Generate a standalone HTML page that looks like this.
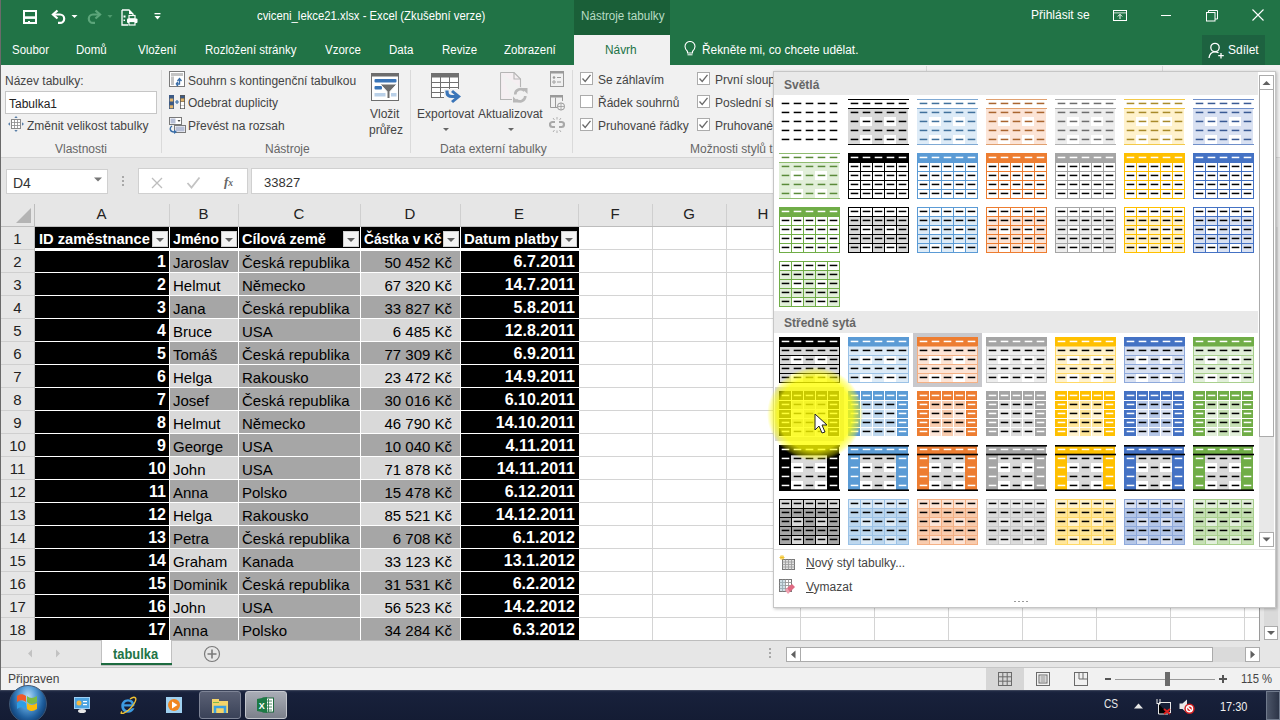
<!DOCTYPE html><html><head><meta charset="utf-8"><style>
*{margin:0;padding:0;box-sizing:border-box}
html,body{width:1280px;height:720px;overflow:hidden;background:#fff;font-family:"Liberation Sans",sans-serif}
.t{position:absolute;white-space:nowrap;line-height:1}
.a{position:absolute}
</style></head><body>

<div style="position:absolute;left:0px;top:0px;width:1280px;height:65px;background:#217346"></div>
<div style="position:absolute;left:574px;top:0px;width:96px;height:35px;background:#1a5f38"></div>
<div class="t " style="left:581px;top:10px;font-size:12px;color:#b8dcc4;transform:scaleX(0.97);transform-origin:0 0">Nástroje tabulky</div>
<div class="t " style="left:257px;top:10px;font-size:12.5px;color:#fff;transform:scaleX(0.905);transform-origin:0 0">cviceni_lekce21.xlsx - Excel (Zkušební verze)</div>
<div class="t " style="left:1031px;top:9px;font-size:12px;color:#fff">Přihlásit se</div>
<div class="t " style="left:12px;top:44px;font-size:12.5px;color:#fff;transform:scaleX(0.92);transform-origin:0 0">Soubor</div>
<div class="t " style="left:76px;top:44px;font-size:12.5px;color:#fff;transform:scaleX(0.92);transform-origin:0 0">Domů</div>
<div class="t " style="left:138px;top:44px;font-size:12.5px;color:#fff;transform:scaleX(0.92);transform-origin:0 0">Vložení</div>
<div class="t " style="left:205px;top:44px;font-size:12.5px;color:#fff;transform:scaleX(0.92);transform-origin:0 0">Rozložení stránky</div>
<div class="t " style="left:325px;top:44px;font-size:12.5px;color:#fff;transform:scaleX(0.92);transform-origin:0 0">Vzorce</div>
<div class="t " style="left:389px;top:44px;font-size:12.5px;color:#fff;transform:scaleX(0.92);transform-origin:0 0">Data</div>
<div class="t " style="left:442px;top:44px;font-size:12.5px;color:#fff;transform:scaleX(0.92);transform-origin:0 0">Revize</div>
<div class="t " style="left:504px;top:44px;font-size:12.5px;color:#fff;transform:scaleX(0.92);transform-origin:0 0">Zobrazení</div>
<div style="position:absolute;left:574px;top:35px;width:96px;height:30px;background:#f1f1f1"></div>
<div class="t " style="left:605px;top:44px;font-size:12.5px;color:#217346;transform:scaleX(0.95);transform-origin:0 0">Návrh</div>
<div class="t " style="left:702px;top:44px;font-size:12.5px;color:#fff;transform:scaleX(0.95);transform-origin:0 0">Řekněte mi, co chcete udělat.</div>
<div style="position:absolute;left:1202px;top:35px;width:63px;height:30px;background:#1d6240"></div>
<div class="t " style="left:1228px;top:44px;font-size:12px;color:#fff">Sdílet</div>
<div style="position:absolute;left:0px;top:65px;width:1280px;height:92px;background:#f1f1f1"></div>
<div style="position:absolute;left:0px;top:157px;width:1280px;height:1px;background:#d5d5d5"></div>
<div style="position:absolute;left:926px;top:66px;width:1px;height:6px;background:#d8d8d8"></div>
<div style="position:absolute;left:1162px;top:66px;width:1px;height:6px;background:#d8d8d8"></div>
<div class="t " style="left:5px;top:75px;font-size:12px;color:#444">Název tabulky:</div>
<div style="position:absolute;left:5px;top:91px;width:152px;height:23px;background:#fff;border:1px solid #c6c6c6"></div>
<div class="t " style="left:9px;top:98px;font-size:12px;color:#222">Tabulka1</div>
<div class="t " style="left:27px;top:120px;font-size:12px;color:#444">Změnit velikost tabulky</div>
<div class="t " style="left:55px;top:143px;font-size:12px;color:#666">Vlastnosti</div>
<div style="position:absolute;left:161px;top:70px;width:1px;height:83px;background:#dadada"></div>
<div class="t " style="left:188px;top:75px;font-size:12px;color:#444">Souhrn s kontingenční tabulkou</div>
<div class="t " style="left:188px;top:97px;font-size:12px;color:#444">Odebrat duplicity</div>
<div class="t " style="left:188px;top:120px;font-size:12px;color:#444">Převést na rozsah</div>
<div class="t " style="left:370px;top:108px;font-size:12px;color:#444">Vložit</div>
<div class="t " style="left:369px;top:124px;font-size:12px;color:#444">průřez</div>
<div class="t " style="left:265px;top:143px;font-size:12px;color:#666">Nástroje</div>
<div style="position:absolute;left:410px;top:70px;width:1px;height:83px;background:#dadada"></div>
<div class="t " style="left:417px;top:108px;font-size:12px;color:#444">Exportovat</div>
<div class="t " style="left:478px;top:108px;font-size:12px;color:#444">Aktualizovat</div>
<div class="t " style="left:440px;top:143px;font-size:12px;color:#666">Data externí tabulky</div>
<div style="position:absolute;left:572px;top:70px;width:1px;height:83px;background:#dadada"></div>
<div class="t " style="left:598px;top:74px;font-size:12px;color:#444">Se záhlavím</div>
<div class="t " style="left:598px;top:97px;font-size:12px;color:#444">Řádek souhrnů</div>
<div class="t " style="left:598px;top:120px;font-size:12px;color:#444">Pruhované řádky</div>
<div class="t " style="left:715px;top:74px;font-size:12px;color:#444">První sloupec</div>
<div class="t " style="left:715px;top:97px;font-size:12px;color:#444">Poslední sloupec</div>
<div class="t " style="left:715px;top:120px;font-size:12px;color:#444">Pruhované sloupce</div>
<div class="t " style="left:690px;top:143px;font-size:12px;color:#666">Možnosti stylů tabulky</div>
<div style="position:absolute;left:580px;top:72px;width:13px;height:13px;background:#fff;border:1px solid #ababab"></div>
<div style="position:absolute;left:697px;top:72px;width:13px;height:13px;background:#fff;border:1px solid #ababab"></div>
<div style="position:absolute;left:580px;top:95px;width:13px;height:13px;background:#fff;border:1px solid #ababab"></div>
<div style="position:absolute;left:697px;top:95px;width:13px;height:13px;background:#fff;border:1px solid #ababab"></div>
<div style="position:absolute;left:580px;top:118px;width:13px;height:13px;background:#fff;border:1px solid #ababab"></div>
<div style="position:absolute;left:697px;top:118px;width:13px;height:13px;background:#fff;border:1px solid #ababab"></div>
<div style="position:absolute;left:1px;top:158px;width:1279px;height:46px;background:#e6e6e6"></div>
<div style="position:absolute;left:6px;top:169px;width:102px;height:25px;background:#fff;border:1px solid #d0d0d0"></div>
<div class="t " style="left:13px;top:176px;font-size:14px;color:#333">D4</div>
<div style="position:absolute;left:138px;top:168px;width:110px;height:26px;background:#fff;border:1px solid #d0d0d0"></div>
<div style="position:absolute;left:251px;top:168px;width:1029px;height:26px;background:#fff;border:1px solid #d0d0d0"></div>
<div class="t " style="left:264px;top:176px;font-size:13px;color:#333">33827</div>
<div style="position:absolute;left:1px;top:204px;width:1263px;height:23px;background:#e6e6e6"></div>
<div style="position:absolute;left:1px;top:204px;width:34px;height:437px;background:#e6e6e6"></div>
<div style="position:absolute;left:35px;top:227px;width:1229px;height:414px;background:#fff"></div>
<div style="position:absolute;left:169px;top:227px;width:1px;height:414px;background:#d4d4d4"></div>
<div style="position:absolute;left:238px;top:227px;width:1px;height:414px;background:#d4d4d4"></div>
<div style="position:absolute;left:360px;top:227px;width:1px;height:414px;background:#d4d4d4"></div>
<div style="position:absolute;left:460px;top:227px;width:1px;height:414px;background:#d4d4d4"></div>
<div style="position:absolute;left:578px;top:227px;width:1px;height:414px;background:#d4d4d4"></div>
<div style="position:absolute;left:652px;top:227px;width:1px;height:414px;background:#d4d4d4"></div>
<div style="position:absolute;left:726px;top:227px;width:1px;height:414px;background:#d4d4d4"></div>
<div style="position:absolute;left:800px;top:227px;width:1px;height:414px;background:#d4d4d4"></div>
<div style="position:absolute;left:874px;top:227px;width:1px;height:414px;background:#d4d4d4"></div>
<div style="position:absolute;left:948px;top:227px;width:1px;height:414px;background:#d4d4d4"></div>
<div style="position:absolute;left:1022px;top:227px;width:1px;height:414px;background:#d4d4d4"></div>
<div style="position:absolute;left:1096px;top:227px;width:1px;height:414px;background:#d4d4d4"></div>
<div style="position:absolute;left:1170px;top:227px;width:1px;height:414px;background:#d4d4d4"></div>
<div style="position:absolute;left:1244px;top:227px;width:1px;height:414px;background:#d4d4d4"></div>
<div style="position:absolute;left:35px;top:249px;width:1229px;height:1px;background:#d4d4d4"></div>
<div style="position:absolute;left:35px;top:272px;width:1229px;height:1px;background:#d4d4d4"></div>
<div style="position:absolute;left:35px;top:295px;width:1229px;height:1px;background:#d4d4d4"></div>
<div style="position:absolute;left:35px;top:318px;width:1229px;height:1px;background:#d4d4d4"></div>
<div style="position:absolute;left:35px;top:341px;width:1229px;height:1px;background:#d4d4d4"></div>
<div style="position:absolute;left:35px;top:364px;width:1229px;height:1px;background:#d4d4d4"></div>
<div style="position:absolute;left:35px;top:387px;width:1229px;height:1px;background:#d4d4d4"></div>
<div style="position:absolute;left:35px;top:410px;width:1229px;height:1px;background:#d4d4d4"></div>
<div style="position:absolute;left:35px;top:433px;width:1229px;height:1px;background:#d4d4d4"></div>
<div style="position:absolute;left:35px;top:456px;width:1229px;height:1px;background:#d4d4d4"></div>
<div style="position:absolute;left:35px;top:479px;width:1229px;height:1px;background:#d4d4d4"></div>
<div style="position:absolute;left:35px;top:502px;width:1229px;height:1px;background:#d4d4d4"></div>
<div style="position:absolute;left:35px;top:525px;width:1229px;height:1px;background:#d4d4d4"></div>
<div style="position:absolute;left:35px;top:548px;width:1229px;height:1px;background:#d4d4d4"></div>
<div style="position:absolute;left:35px;top:571px;width:1229px;height:1px;background:#d4d4d4"></div>
<div style="position:absolute;left:35px;top:594px;width:1229px;height:1px;background:#d4d4d4"></div>
<div style="position:absolute;left:35px;top:617px;width:1229px;height:1px;background:#d4d4d4"></div>
<div style="position:absolute;left:35px;top:640px;width:1229px;height:1px;background:#d4d4d4"></div>
<div style="position:absolute;left:34px;top:204px;width:1px;height:437px;background:#bdbdbd"></div>
<div style="position:absolute;left:1px;top:226px;width:1263px;height:1px;background:#bdbdbd"></div>
<div style="position:absolute;left:169px;top:204px;width:1px;height:22px;background:#cfcfcf"></div>
<div style="position:absolute;left:238px;top:204px;width:1px;height:22px;background:#cfcfcf"></div>
<div style="position:absolute;left:360px;top:204px;width:1px;height:22px;background:#cfcfcf"></div>
<div style="position:absolute;left:460px;top:204px;width:1px;height:22px;background:#cfcfcf"></div>
<div style="position:absolute;left:578px;top:204px;width:1px;height:22px;background:#cfcfcf"></div>
<div style="position:absolute;left:652px;top:204px;width:1px;height:22px;background:#cfcfcf"></div>
<div style="position:absolute;left:726px;top:204px;width:1px;height:22px;background:#cfcfcf"></div>
<div style="position:absolute;left:800px;top:204px;width:1px;height:22px;background:#cfcfcf"></div>
<div style="position:absolute;left:874px;top:204px;width:1px;height:22px;background:#cfcfcf"></div>
<div style="position:absolute;left:948px;top:204px;width:1px;height:22px;background:#cfcfcf"></div>
<div style="position:absolute;left:1022px;top:204px;width:1px;height:22px;background:#cfcfcf"></div>
<div style="position:absolute;left:1096px;top:204px;width:1px;height:22px;background:#cfcfcf"></div>
<div style="position:absolute;left:1170px;top:204px;width:1px;height:22px;background:#cfcfcf"></div>
<div style="position:absolute;left:1244px;top:204px;width:1px;height:22px;background:#cfcfcf"></div>
<div style="position:absolute;left:1px;top:249px;width:33px;height:1px;background:#cfcfcf"></div>
<div style="position:absolute;left:1px;top:272px;width:33px;height:1px;background:#cfcfcf"></div>
<div style="position:absolute;left:1px;top:295px;width:33px;height:1px;background:#cfcfcf"></div>
<div style="position:absolute;left:1px;top:318px;width:33px;height:1px;background:#cfcfcf"></div>
<div style="position:absolute;left:1px;top:341px;width:33px;height:1px;background:#cfcfcf"></div>
<div style="position:absolute;left:1px;top:364px;width:33px;height:1px;background:#cfcfcf"></div>
<div style="position:absolute;left:1px;top:387px;width:33px;height:1px;background:#cfcfcf"></div>
<div style="position:absolute;left:1px;top:410px;width:33px;height:1px;background:#cfcfcf"></div>
<div style="position:absolute;left:1px;top:433px;width:33px;height:1px;background:#cfcfcf"></div>
<div style="position:absolute;left:1px;top:456px;width:33px;height:1px;background:#cfcfcf"></div>
<div style="position:absolute;left:1px;top:479px;width:33px;height:1px;background:#cfcfcf"></div>
<div style="position:absolute;left:1px;top:502px;width:33px;height:1px;background:#cfcfcf"></div>
<div style="position:absolute;left:1px;top:525px;width:33px;height:1px;background:#cfcfcf"></div>
<div style="position:absolute;left:1px;top:548px;width:33px;height:1px;background:#cfcfcf"></div>
<div style="position:absolute;left:1px;top:571px;width:33px;height:1px;background:#cfcfcf"></div>
<div style="position:absolute;left:1px;top:594px;width:33px;height:1px;background:#cfcfcf"></div>
<div style="position:absolute;left:1px;top:617px;width:33px;height:1px;background:#cfcfcf"></div>
<div style="position:absolute;left:1px;top:640px;width:33px;height:1px;background:#cfcfcf"></div>
<div class="t" style="left:34px;width:135px;text-align:center;top:206px;font-size:15px;color:#222">A</div>
<div class="t" style="left:169px;width:69px;text-align:center;top:206px;font-size:15px;color:#222">B</div>
<div class="t" style="left:238px;width:122px;text-align:center;top:206px;font-size:15px;color:#222">C</div>
<div class="t" style="left:360px;width:100px;text-align:center;top:206px;font-size:15px;color:#222">D</div>
<div class="t" style="left:460px;width:118px;text-align:center;top:206px;font-size:15px;color:#222">E</div>
<div class="t" style="left:578px;width:74px;text-align:center;top:206px;font-size:15px;color:#222">F</div>
<div class="t" style="left:652px;width:74px;text-align:center;top:206px;font-size:15px;color:#222">G</div>
<div class="t" style="left:726px;width:74px;text-align:center;top:206px;font-size:15px;color:#222">H</div>
<div class="t" style="left:800px;width:74px;text-align:center;top:206px;font-size:15px;color:#222">I</div>
<div class="t" style="left:874px;width:74px;text-align:center;top:206px;font-size:15px;color:#222">J</div>
<div class="t" style="left:948px;width:74px;text-align:center;top:206px;font-size:15px;color:#222">K</div>
<div class="t" style="left:1022px;width:74px;text-align:center;top:206px;font-size:15px;color:#222">L</div>
<div class="t" style="left:1096px;width:74px;text-align:center;top:206px;font-size:15px;color:#222">M</div>
<div class="t" style="left:1170px;width:74px;text-align:center;top:206px;font-size:15px;color:#222">N</div>
<div class="t" style="left:1244px;width:20px;overflow:hidden;top:206px;font-size:15px;color:#222">&nbsp;&nbsp;O</div>
<div class="t" style="left:1px;width:33px;text-align:center;top:231px;font-size:15px;color:#222">1</div>
<div class="t" style="left:1px;width:33px;text-align:center;top:254px;font-size:15px;color:#222">2</div>
<div class="t" style="left:1px;width:33px;text-align:center;top:277px;font-size:15px;color:#222">3</div>
<div class="t" style="left:1px;width:33px;text-align:center;top:300px;font-size:15px;color:#222">4</div>
<div class="t" style="left:1px;width:33px;text-align:center;top:323px;font-size:15px;color:#222">5</div>
<div class="t" style="left:1px;width:33px;text-align:center;top:346px;font-size:15px;color:#222">6</div>
<div class="t" style="left:1px;width:33px;text-align:center;top:369px;font-size:15px;color:#222">7</div>
<div class="t" style="left:1px;width:33px;text-align:center;top:392px;font-size:15px;color:#222">8</div>
<div class="t" style="left:1px;width:33px;text-align:center;top:415px;font-size:15px;color:#222">9</div>
<div class="t" style="left:1px;width:33px;text-align:center;top:438px;font-size:15px;color:#222">10</div>
<div class="t" style="left:1px;width:33px;text-align:center;top:461px;font-size:15px;color:#222">11</div>
<div class="t" style="left:1px;width:33px;text-align:center;top:484px;font-size:15px;color:#222">12</div>
<div class="t" style="left:1px;width:33px;text-align:center;top:507px;font-size:15px;color:#222">13</div>
<div class="t" style="left:1px;width:33px;text-align:center;top:530px;font-size:15px;color:#222">14</div>
<div class="t" style="left:1px;width:33px;text-align:center;top:553px;font-size:15px;color:#222">15</div>
<div class="t" style="left:1px;width:33px;text-align:center;top:576px;font-size:15px;color:#222">16</div>
<div class="t" style="left:1px;width:33px;text-align:center;top:599px;font-size:15px;color:#222">17</div>
<div class="t" style="left:1px;width:33px;text-align:center;top:622px;font-size:15px;color:#222">18</div>
<svg class="a" style="left:16px;top:208px" width="16" height="16"><polygon points="15,0 15,15 0,15" fill="#b4b4b4"/></svg>
<div style="position:absolute;left:35px;top:227px;width:134px;height:21px;background:#000"></div>
<div style="position:absolute;left:170px;top:227px;width:68px;height:21px;background:#000"></div>
<div style="position:absolute;left:239px;top:227px;width:121px;height:21px;background:#000"></div>
<div style="position:absolute;left:361px;top:227px;width:99px;height:21px;background:#000"></div>
<div style="position:absolute;left:461px;top:227px;width:118px;height:21px;background:#000"></div>
<div style="position:absolute;left:35px;top:249px;width:544px;height:1px;background:#fff"></div>
<div style="position:absolute;left:35px;top:248px;width:544px;height:3px;background:#fff"></div>
<div style="position:absolute;left:169px;top:227px;width:1px;height:23px;background:#fff"></div>
<div style="position:absolute;left:238px;top:227px;width:1px;height:23px;background:#fff"></div>
<div style="position:absolute;left:360px;top:227px;width:1px;height:23px;background:#fff"></div>
<div style="position:absolute;left:460px;top:227px;width:1px;height:23px;background:#fff"></div>
<div class="t" style="left:39px;top:231px;font-size:15px;font-weight:bold;color:#fff;transform:scaleX(0.978);transform-origin:0 0">ID zaměstnance</div>
<div class="t" style="left:173px;top:231px;font-size:15px;font-weight:bold;color:#fff;transform:scaleX(0.948);transform-origin:0 0">Jméno</div>
<div class="t" style="left:242px;top:231px;font-size:15px;font-weight:bold;color:#fff;transform:scaleX(0.967);transform-origin:0 0">Cílová země</div>
<div class="t" style="left:364px;top:231px;font-size:15px;font-weight:bold;color:#fff;transform:scaleX(0.912);transform-origin:0 0">Částka v Kč</div>
<div class="t" style="left:464px;top:231px;font-size:15px;font-weight:bold;color:#fff;transform:scaleX(0.995);transform-origin:0 0">Datum platby</div>
<div style="position:absolute;left:35px;top:250px;width:134px;height:22px;background:#000"></div>
<div style="position:absolute;left:170px;top:250px;width:68px;height:22px;background:#a6a6a6"></div>
<div style="position:absolute;left:239px;top:250px;width:121px;height:22px;background:#a6a6a6"></div>
<div style="position:absolute;left:361px;top:250px;width:99px;height:22px;background:#a6a6a6"></div>
<div style="position:absolute;left:461px;top:250px;width:118px;height:22px;background:#000"></div>
<div style="position:absolute;left:35px;top:272px;width:544px;height:1px;background:#fff"></div>
<div style="position:absolute;left:169px;top:250px;width:1px;height:23px;background:#fff"></div>
<div style="position:absolute;left:238px;top:250px;width:1px;height:23px;background:#fff"></div>
<div style="position:absolute;left:360px;top:250px;width:1px;height:23px;background:#fff"></div>
<div style="position:absolute;left:460px;top:250px;width:1px;height:23px;background:#fff"></div>
<div class="t" style="left:36px;width:130px;text-align:right;top:254px;font-size:16px;font-weight:bold;color:#fff">1</div>
<div class="t" style="left:173px;top:255px;font-size:15px;color:#000">Jaroslav</div>
<div class="t" style="left:242px;top:255px;font-size:15px;color:#000">Česká republika</div>
<div class="t" style="left:361px;width:91px;text-align:right;top:255px;font-size:15px;color:#000">50 452 Kč</div>
<div class="t" style="left:461px;width:114px;text-align:right;top:254px;font-size:16px;font-weight:bold;color:#fff">6.7.2011</div>
<div style="position:absolute;left:35px;top:273px;width:134px;height:22px;background:#000"></div>
<div style="position:absolute;left:170px;top:273px;width:68px;height:22px;background:#d9d9d9"></div>
<div style="position:absolute;left:239px;top:273px;width:121px;height:22px;background:#a6a6a6"></div>
<div style="position:absolute;left:361px;top:273px;width:99px;height:22px;background:#d9d9d9"></div>
<div style="position:absolute;left:461px;top:273px;width:118px;height:22px;background:#000"></div>
<div style="position:absolute;left:35px;top:295px;width:544px;height:1px;background:#fff"></div>
<div style="position:absolute;left:169px;top:273px;width:1px;height:23px;background:#fff"></div>
<div style="position:absolute;left:238px;top:273px;width:1px;height:23px;background:#fff"></div>
<div style="position:absolute;left:360px;top:273px;width:1px;height:23px;background:#fff"></div>
<div style="position:absolute;left:460px;top:273px;width:1px;height:23px;background:#fff"></div>
<div class="t" style="left:36px;width:130px;text-align:right;top:277px;font-size:16px;font-weight:bold;color:#fff">2</div>
<div class="t" style="left:173px;top:278px;font-size:15px;color:#000">Helmut</div>
<div class="t" style="left:242px;top:278px;font-size:15px;color:#000">Německo</div>
<div class="t" style="left:361px;width:91px;text-align:right;top:278px;font-size:15px;color:#000">67 320 Kč</div>
<div class="t" style="left:461px;width:114px;text-align:right;top:277px;font-size:16px;font-weight:bold;color:#fff">14.7.2011</div>
<div style="position:absolute;left:35px;top:296px;width:134px;height:22px;background:#000"></div>
<div style="position:absolute;left:170px;top:296px;width:68px;height:22px;background:#a6a6a6"></div>
<div style="position:absolute;left:239px;top:296px;width:121px;height:22px;background:#a6a6a6"></div>
<div style="position:absolute;left:361px;top:296px;width:99px;height:22px;background:#a6a6a6"></div>
<div style="position:absolute;left:461px;top:296px;width:118px;height:22px;background:#000"></div>
<div style="position:absolute;left:35px;top:318px;width:544px;height:1px;background:#fff"></div>
<div style="position:absolute;left:169px;top:296px;width:1px;height:23px;background:#fff"></div>
<div style="position:absolute;left:238px;top:296px;width:1px;height:23px;background:#fff"></div>
<div style="position:absolute;left:360px;top:296px;width:1px;height:23px;background:#fff"></div>
<div style="position:absolute;left:460px;top:296px;width:1px;height:23px;background:#fff"></div>
<div class="t" style="left:36px;width:130px;text-align:right;top:300px;font-size:16px;font-weight:bold;color:#fff">3</div>
<div class="t" style="left:173px;top:301px;font-size:15px;color:#000">Jana</div>
<div class="t" style="left:242px;top:301px;font-size:15px;color:#000">Česká republika</div>
<div class="t" style="left:361px;width:91px;text-align:right;top:301px;font-size:15px;color:#000">33 827 Kč</div>
<div class="t" style="left:461px;width:114px;text-align:right;top:300px;font-size:16px;font-weight:bold;color:#fff">5.8.2011</div>
<div style="position:absolute;left:35px;top:319px;width:134px;height:22px;background:#000"></div>
<div style="position:absolute;left:170px;top:319px;width:68px;height:22px;background:#d9d9d9"></div>
<div style="position:absolute;left:239px;top:319px;width:121px;height:22px;background:#a6a6a6"></div>
<div style="position:absolute;left:361px;top:319px;width:99px;height:22px;background:#d9d9d9"></div>
<div style="position:absolute;left:461px;top:319px;width:118px;height:22px;background:#000"></div>
<div style="position:absolute;left:35px;top:341px;width:544px;height:1px;background:#fff"></div>
<div style="position:absolute;left:169px;top:319px;width:1px;height:23px;background:#fff"></div>
<div style="position:absolute;left:238px;top:319px;width:1px;height:23px;background:#fff"></div>
<div style="position:absolute;left:360px;top:319px;width:1px;height:23px;background:#fff"></div>
<div style="position:absolute;left:460px;top:319px;width:1px;height:23px;background:#fff"></div>
<div class="t" style="left:36px;width:130px;text-align:right;top:323px;font-size:16px;font-weight:bold;color:#fff">4</div>
<div class="t" style="left:173px;top:324px;font-size:15px;color:#000">Bruce</div>
<div class="t" style="left:242px;top:324px;font-size:15px;color:#000">USA</div>
<div class="t" style="left:361px;width:91px;text-align:right;top:324px;font-size:15px;color:#000">6 485 Kč</div>
<div class="t" style="left:461px;width:114px;text-align:right;top:323px;font-size:16px;font-weight:bold;color:#fff">12.8.2011</div>
<div style="position:absolute;left:35px;top:342px;width:134px;height:22px;background:#000"></div>
<div style="position:absolute;left:170px;top:342px;width:68px;height:22px;background:#a6a6a6"></div>
<div style="position:absolute;left:239px;top:342px;width:121px;height:22px;background:#a6a6a6"></div>
<div style="position:absolute;left:361px;top:342px;width:99px;height:22px;background:#a6a6a6"></div>
<div style="position:absolute;left:461px;top:342px;width:118px;height:22px;background:#000"></div>
<div style="position:absolute;left:35px;top:364px;width:544px;height:1px;background:#fff"></div>
<div style="position:absolute;left:169px;top:342px;width:1px;height:23px;background:#fff"></div>
<div style="position:absolute;left:238px;top:342px;width:1px;height:23px;background:#fff"></div>
<div style="position:absolute;left:360px;top:342px;width:1px;height:23px;background:#fff"></div>
<div style="position:absolute;left:460px;top:342px;width:1px;height:23px;background:#fff"></div>
<div class="t" style="left:36px;width:130px;text-align:right;top:346px;font-size:16px;font-weight:bold;color:#fff">5</div>
<div class="t" style="left:173px;top:347px;font-size:15px;color:#000">Tomáš</div>
<div class="t" style="left:242px;top:347px;font-size:15px;color:#000">Česká republika</div>
<div class="t" style="left:361px;width:91px;text-align:right;top:347px;font-size:15px;color:#000">77 309 Kč</div>
<div class="t" style="left:461px;width:114px;text-align:right;top:346px;font-size:16px;font-weight:bold;color:#fff">6.9.2011</div>
<div style="position:absolute;left:35px;top:365px;width:134px;height:22px;background:#000"></div>
<div style="position:absolute;left:170px;top:365px;width:68px;height:22px;background:#d9d9d9"></div>
<div style="position:absolute;left:239px;top:365px;width:121px;height:22px;background:#a6a6a6"></div>
<div style="position:absolute;left:361px;top:365px;width:99px;height:22px;background:#d9d9d9"></div>
<div style="position:absolute;left:461px;top:365px;width:118px;height:22px;background:#000"></div>
<div style="position:absolute;left:35px;top:387px;width:544px;height:1px;background:#fff"></div>
<div style="position:absolute;left:169px;top:365px;width:1px;height:23px;background:#fff"></div>
<div style="position:absolute;left:238px;top:365px;width:1px;height:23px;background:#fff"></div>
<div style="position:absolute;left:360px;top:365px;width:1px;height:23px;background:#fff"></div>
<div style="position:absolute;left:460px;top:365px;width:1px;height:23px;background:#fff"></div>
<div class="t" style="left:36px;width:130px;text-align:right;top:369px;font-size:16px;font-weight:bold;color:#fff">6</div>
<div class="t" style="left:173px;top:370px;font-size:15px;color:#000">Helga</div>
<div class="t" style="left:242px;top:370px;font-size:15px;color:#000">Rakousko</div>
<div class="t" style="left:361px;width:91px;text-align:right;top:370px;font-size:15px;color:#000">23 472 Kč</div>
<div class="t" style="left:461px;width:114px;text-align:right;top:369px;font-size:16px;font-weight:bold;color:#fff">14.9.2011</div>
<div style="position:absolute;left:35px;top:388px;width:134px;height:22px;background:#000"></div>
<div style="position:absolute;left:170px;top:388px;width:68px;height:22px;background:#a6a6a6"></div>
<div style="position:absolute;left:239px;top:388px;width:121px;height:22px;background:#a6a6a6"></div>
<div style="position:absolute;left:361px;top:388px;width:99px;height:22px;background:#a6a6a6"></div>
<div style="position:absolute;left:461px;top:388px;width:118px;height:22px;background:#000"></div>
<div style="position:absolute;left:35px;top:410px;width:544px;height:1px;background:#fff"></div>
<div style="position:absolute;left:169px;top:388px;width:1px;height:23px;background:#fff"></div>
<div style="position:absolute;left:238px;top:388px;width:1px;height:23px;background:#fff"></div>
<div style="position:absolute;left:360px;top:388px;width:1px;height:23px;background:#fff"></div>
<div style="position:absolute;left:460px;top:388px;width:1px;height:23px;background:#fff"></div>
<div class="t" style="left:36px;width:130px;text-align:right;top:392px;font-size:16px;font-weight:bold;color:#fff">7</div>
<div class="t" style="left:173px;top:393px;font-size:15px;color:#000">Josef</div>
<div class="t" style="left:242px;top:393px;font-size:15px;color:#000">Česká republika</div>
<div class="t" style="left:361px;width:91px;text-align:right;top:393px;font-size:15px;color:#000">30 016 Kč</div>
<div class="t" style="left:461px;width:114px;text-align:right;top:392px;font-size:16px;font-weight:bold;color:#fff">6.10.2011</div>
<div style="position:absolute;left:35px;top:411px;width:134px;height:22px;background:#000"></div>
<div style="position:absolute;left:170px;top:411px;width:68px;height:22px;background:#d9d9d9"></div>
<div style="position:absolute;left:239px;top:411px;width:121px;height:22px;background:#a6a6a6"></div>
<div style="position:absolute;left:361px;top:411px;width:99px;height:22px;background:#d9d9d9"></div>
<div style="position:absolute;left:461px;top:411px;width:118px;height:22px;background:#000"></div>
<div style="position:absolute;left:35px;top:433px;width:544px;height:1px;background:#fff"></div>
<div style="position:absolute;left:169px;top:411px;width:1px;height:23px;background:#fff"></div>
<div style="position:absolute;left:238px;top:411px;width:1px;height:23px;background:#fff"></div>
<div style="position:absolute;left:360px;top:411px;width:1px;height:23px;background:#fff"></div>
<div style="position:absolute;left:460px;top:411px;width:1px;height:23px;background:#fff"></div>
<div class="t" style="left:36px;width:130px;text-align:right;top:415px;font-size:16px;font-weight:bold;color:#fff">8</div>
<div class="t" style="left:173px;top:416px;font-size:15px;color:#000">Helmut</div>
<div class="t" style="left:242px;top:416px;font-size:15px;color:#000">Německo</div>
<div class="t" style="left:361px;width:91px;text-align:right;top:416px;font-size:15px;color:#000">46 790 Kč</div>
<div class="t" style="left:461px;width:114px;text-align:right;top:415px;font-size:16px;font-weight:bold;color:#fff">14.10.2011</div>
<div style="position:absolute;left:35px;top:434px;width:134px;height:22px;background:#000"></div>
<div style="position:absolute;left:170px;top:434px;width:68px;height:22px;background:#a6a6a6"></div>
<div style="position:absolute;left:239px;top:434px;width:121px;height:22px;background:#a6a6a6"></div>
<div style="position:absolute;left:361px;top:434px;width:99px;height:22px;background:#a6a6a6"></div>
<div style="position:absolute;left:461px;top:434px;width:118px;height:22px;background:#000"></div>
<div style="position:absolute;left:35px;top:456px;width:544px;height:1px;background:#fff"></div>
<div style="position:absolute;left:169px;top:434px;width:1px;height:23px;background:#fff"></div>
<div style="position:absolute;left:238px;top:434px;width:1px;height:23px;background:#fff"></div>
<div style="position:absolute;left:360px;top:434px;width:1px;height:23px;background:#fff"></div>
<div style="position:absolute;left:460px;top:434px;width:1px;height:23px;background:#fff"></div>
<div class="t" style="left:36px;width:130px;text-align:right;top:438px;font-size:16px;font-weight:bold;color:#fff">9</div>
<div class="t" style="left:173px;top:439px;font-size:15px;color:#000">George</div>
<div class="t" style="left:242px;top:439px;font-size:15px;color:#000">USA</div>
<div class="t" style="left:361px;width:91px;text-align:right;top:439px;font-size:15px;color:#000">10 040 Kč</div>
<div class="t" style="left:461px;width:114px;text-align:right;top:438px;font-size:16px;font-weight:bold;color:#fff">4.11.2011</div>
<div style="position:absolute;left:35px;top:457px;width:134px;height:22px;background:#000"></div>
<div style="position:absolute;left:170px;top:457px;width:68px;height:22px;background:#d9d9d9"></div>
<div style="position:absolute;left:239px;top:457px;width:121px;height:22px;background:#a6a6a6"></div>
<div style="position:absolute;left:361px;top:457px;width:99px;height:22px;background:#d9d9d9"></div>
<div style="position:absolute;left:461px;top:457px;width:118px;height:22px;background:#000"></div>
<div style="position:absolute;left:35px;top:479px;width:544px;height:1px;background:#fff"></div>
<div style="position:absolute;left:169px;top:457px;width:1px;height:23px;background:#fff"></div>
<div style="position:absolute;left:238px;top:457px;width:1px;height:23px;background:#fff"></div>
<div style="position:absolute;left:360px;top:457px;width:1px;height:23px;background:#fff"></div>
<div style="position:absolute;left:460px;top:457px;width:1px;height:23px;background:#fff"></div>
<div class="t" style="left:36px;width:130px;text-align:right;top:461px;font-size:16px;font-weight:bold;color:#fff">10</div>
<div class="t" style="left:173px;top:462px;font-size:15px;color:#000">John</div>
<div class="t" style="left:242px;top:462px;font-size:15px;color:#000">USA</div>
<div class="t" style="left:361px;width:91px;text-align:right;top:462px;font-size:15px;color:#000">71 878 Kč</div>
<div class="t" style="left:461px;width:114px;text-align:right;top:461px;font-size:16px;font-weight:bold;color:#fff">14.11.2011</div>
<div style="position:absolute;left:35px;top:480px;width:134px;height:22px;background:#000"></div>
<div style="position:absolute;left:170px;top:480px;width:68px;height:22px;background:#a6a6a6"></div>
<div style="position:absolute;left:239px;top:480px;width:121px;height:22px;background:#a6a6a6"></div>
<div style="position:absolute;left:361px;top:480px;width:99px;height:22px;background:#a6a6a6"></div>
<div style="position:absolute;left:461px;top:480px;width:118px;height:22px;background:#000"></div>
<div style="position:absolute;left:35px;top:502px;width:544px;height:1px;background:#fff"></div>
<div style="position:absolute;left:169px;top:480px;width:1px;height:23px;background:#fff"></div>
<div style="position:absolute;left:238px;top:480px;width:1px;height:23px;background:#fff"></div>
<div style="position:absolute;left:360px;top:480px;width:1px;height:23px;background:#fff"></div>
<div style="position:absolute;left:460px;top:480px;width:1px;height:23px;background:#fff"></div>
<div class="t" style="left:36px;width:130px;text-align:right;top:484px;font-size:16px;font-weight:bold;color:#fff">11</div>
<div class="t" style="left:173px;top:485px;font-size:15px;color:#000">Anna</div>
<div class="t" style="left:242px;top:485px;font-size:15px;color:#000">Polsko</div>
<div class="t" style="left:361px;width:91px;text-align:right;top:485px;font-size:15px;color:#000">15 478 Kč</div>
<div class="t" style="left:461px;width:114px;text-align:right;top:484px;font-size:16px;font-weight:bold;color:#fff">6.12.2011</div>
<div style="position:absolute;left:35px;top:503px;width:134px;height:22px;background:#000"></div>
<div style="position:absolute;left:170px;top:503px;width:68px;height:22px;background:#d9d9d9"></div>
<div style="position:absolute;left:239px;top:503px;width:121px;height:22px;background:#a6a6a6"></div>
<div style="position:absolute;left:361px;top:503px;width:99px;height:22px;background:#d9d9d9"></div>
<div style="position:absolute;left:461px;top:503px;width:118px;height:22px;background:#000"></div>
<div style="position:absolute;left:35px;top:525px;width:544px;height:1px;background:#fff"></div>
<div style="position:absolute;left:169px;top:503px;width:1px;height:23px;background:#fff"></div>
<div style="position:absolute;left:238px;top:503px;width:1px;height:23px;background:#fff"></div>
<div style="position:absolute;left:360px;top:503px;width:1px;height:23px;background:#fff"></div>
<div style="position:absolute;left:460px;top:503px;width:1px;height:23px;background:#fff"></div>
<div class="t" style="left:36px;width:130px;text-align:right;top:507px;font-size:16px;font-weight:bold;color:#fff">12</div>
<div class="t" style="left:173px;top:508px;font-size:15px;color:#000">Helga</div>
<div class="t" style="left:242px;top:508px;font-size:15px;color:#000">Rakousko</div>
<div class="t" style="left:361px;width:91px;text-align:right;top:508px;font-size:15px;color:#000">85 521 Kč</div>
<div class="t" style="left:461px;width:114px;text-align:right;top:507px;font-size:16px;font-weight:bold;color:#fff">14.12.2011</div>
<div style="position:absolute;left:35px;top:526px;width:134px;height:22px;background:#000"></div>
<div style="position:absolute;left:170px;top:526px;width:68px;height:22px;background:#a6a6a6"></div>
<div style="position:absolute;left:239px;top:526px;width:121px;height:22px;background:#a6a6a6"></div>
<div style="position:absolute;left:361px;top:526px;width:99px;height:22px;background:#a6a6a6"></div>
<div style="position:absolute;left:461px;top:526px;width:118px;height:22px;background:#000"></div>
<div style="position:absolute;left:35px;top:548px;width:544px;height:1px;background:#fff"></div>
<div style="position:absolute;left:169px;top:526px;width:1px;height:23px;background:#fff"></div>
<div style="position:absolute;left:238px;top:526px;width:1px;height:23px;background:#fff"></div>
<div style="position:absolute;left:360px;top:526px;width:1px;height:23px;background:#fff"></div>
<div style="position:absolute;left:460px;top:526px;width:1px;height:23px;background:#fff"></div>
<div class="t" style="left:36px;width:130px;text-align:right;top:530px;font-size:16px;font-weight:bold;color:#fff">13</div>
<div class="t" style="left:173px;top:531px;font-size:15px;color:#000">Petra</div>
<div class="t" style="left:242px;top:531px;font-size:15px;color:#000">Česká republika</div>
<div class="t" style="left:361px;width:91px;text-align:right;top:531px;font-size:15px;color:#000">6 708 Kč</div>
<div class="t" style="left:461px;width:114px;text-align:right;top:530px;font-size:16px;font-weight:bold;color:#fff">6.1.2012</div>
<div style="position:absolute;left:35px;top:549px;width:134px;height:22px;background:#000"></div>
<div style="position:absolute;left:170px;top:549px;width:68px;height:22px;background:#d9d9d9"></div>
<div style="position:absolute;left:239px;top:549px;width:121px;height:22px;background:#a6a6a6"></div>
<div style="position:absolute;left:361px;top:549px;width:99px;height:22px;background:#d9d9d9"></div>
<div style="position:absolute;left:461px;top:549px;width:118px;height:22px;background:#000"></div>
<div style="position:absolute;left:35px;top:571px;width:544px;height:1px;background:#fff"></div>
<div style="position:absolute;left:169px;top:549px;width:1px;height:23px;background:#fff"></div>
<div style="position:absolute;left:238px;top:549px;width:1px;height:23px;background:#fff"></div>
<div style="position:absolute;left:360px;top:549px;width:1px;height:23px;background:#fff"></div>
<div style="position:absolute;left:460px;top:549px;width:1px;height:23px;background:#fff"></div>
<div class="t" style="left:36px;width:130px;text-align:right;top:553px;font-size:16px;font-weight:bold;color:#fff">14</div>
<div class="t" style="left:173px;top:554px;font-size:15px;color:#000">Graham</div>
<div class="t" style="left:242px;top:554px;font-size:15px;color:#000">Kanada</div>
<div class="t" style="left:361px;width:91px;text-align:right;top:554px;font-size:15px;color:#000">33 123 Kč</div>
<div class="t" style="left:461px;width:114px;text-align:right;top:553px;font-size:16px;font-weight:bold;color:#fff">13.1.2012</div>
<div style="position:absolute;left:35px;top:572px;width:134px;height:22px;background:#000"></div>
<div style="position:absolute;left:170px;top:572px;width:68px;height:22px;background:#a6a6a6"></div>
<div style="position:absolute;left:239px;top:572px;width:121px;height:22px;background:#a6a6a6"></div>
<div style="position:absolute;left:361px;top:572px;width:99px;height:22px;background:#a6a6a6"></div>
<div style="position:absolute;left:461px;top:572px;width:118px;height:22px;background:#000"></div>
<div style="position:absolute;left:35px;top:594px;width:544px;height:1px;background:#fff"></div>
<div style="position:absolute;left:169px;top:572px;width:1px;height:23px;background:#fff"></div>
<div style="position:absolute;left:238px;top:572px;width:1px;height:23px;background:#fff"></div>
<div style="position:absolute;left:360px;top:572px;width:1px;height:23px;background:#fff"></div>
<div style="position:absolute;left:460px;top:572px;width:1px;height:23px;background:#fff"></div>
<div class="t" style="left:36px;width:130px;text-align:right;top:576px;font-size:16px;font-weight:bold;color:#fff">15</div>
<div class="t" style="left:173px;top:577px;font-size:15px;color:#000">Dominik</div>
<div class="t" style="left:242px;top:577px;font-size:15px;color:#000">Česká republika</div>
<div class="t" style="left:361px;width:91px;text-align:right;top:577px;font-size:15px;color:#000">31 531 Kč</div>
<div class="t" style="left:461px;width:114px;text-align:right;top:576px;font-size:16px;font-weight:bold;color:#fff">6.2.2012</div>
<div style="position:absolute;left:35px;top:595px;width:134px;height:22px;background:#000"></div>
<div style="position:absolute;left:170px;top:595px;width:68px;height:22px;background:#d9d9d9"></div>
<div style="position:absolute;left:239px;top:595px;width:121px;height:22px;background:#a6a6a6"></div>
<div style="position:absolute;left:361px;top:595px;width:99px;height:22px;background:#d9d9d9"></div>
<div style="position:absolute;left:461px;top:595px;width:118px;height:22px;background:#000"></div>
<div style="position:absolute;left:35px;top:617px;width:544px;height:1px;background:#fff"></div>
<div style="position:absolute;left:169px;top:595px;width:1px;height:23px;background:#fff"></div>
<div style="position:absolute;left:238px;top:595px;width:1px;height:23px;background:#fff"></div>
<div style="position:absolute;left:360px;top:595px;width:1px;height:23px;background:#fff"></div>
<div style="position:absolute;left:460px;top:595px;width:1px;height:23px;background:#fff"></div>
<div class="t" style="left:36px;width:130px;text-align:right;top:599px;font-size:16px;font-weight:bold;color:#fff">16</div>
<div class="t" style="left:173px;top:600px;font-size:15px;color:#000">John</div>
<div class="t" style="left:242px;top:600px;font-size:15px;color:#000">USA</div>
<div class="t" style="left:361px;width:91px;text-align:right;top:600px;font-size:15px;color:#000">56 523 Kč</div>
<div class="t" style="left:461px;width:114px;text-align:right;top:599px;font-size:16px;font-weight:bold;color:#fff">14.2.2012</div>
<div style="position:absolute;left:35px;top:618px;width:134px;height:22px;background:#000"></div>
<div style="position:absolute;left:170px;top:618px;width:68px;height:22px;background:#a6a6a6"></div>
<div style="position:absolute;left:239px;top:618px;width:121px;height:22px;background:#a6a6a6"></div>
<div style="position:absolute;left:361px;top:618px;width:99px;height:22px;background:#a6a6a6"></div>
<div style="position:absolute;left:461px;top:618px;width:118px;height:22px;background:#000"></div>
<div style="position:absolute;left:35px;top:640px;width:544px;height:1px;background:#fff"></div>
<div style="position:absolute;left:169px;top:618px;width:1px;height:23px;background:#fff"></div>
<div style="position:absolute;left:238px;top:618px;width:1px;height:23px;background:#fff"></div>
<div style="position:absolute;left:360px;top:618px;width:1px;height:23px;background:#fff"></div>
<div style="position:absolute;left:460px;top:618px;width:1px;height:23px;background:#fff"></div>
<div class="t" style="left:36px;width:130px;text-align:right;top:622px;font-size:16px;font-weight:bold;color:#fff">17</div>
<div class="t" style="left:173px;top:623px;font-size:15px;color:#000">Anna</div>
<div class="t" style="left:242px;top:623px;font-size:15px;color:#000">Polsko</div>
<div class="t" style="left:361px;width:91px;text-align:right;top:623px;font-size:15px;color:#000">34 284 Kč</div>
<div class="t" style="left:461px;width:114px;text-align:right;top:622px;font-size:16px;font-weight:bold;color:#fff">6.3.2012</div>
<div style="position:absolute;left:35px;top:248px;width:544px;height:3px;background:#fff"></div>
<div class="a" style="left:152px;top:231px;width:16px;height:16px;background:#f3f3f3;border:1px solid #cfcfcf"><svg width="14" height="14" style="position:absolute;left:0;top:0"><polygon points="3,6 11,6 7,10" fill="#606060"/></svg></div>
<div class="a" style="left:221px;top:231px;width:16px;height:16px;background:#f3f3f3;border:1px solid #cfcfcf"><svg width="14" height="14" style="position:absolute;left:0;top:0"><polygon points="3,6 11,6 7,10" fill="#606060"/></svg></div>
<div class="a" style="left:343px;top:231px;width:16px;height:16px;background:#f3f3f3;border:1px solid #cfcfcf"><svg width="14" height="14" style="position:absolute;left:0;top:0"><polygon points="3,6 11,6 7,10" fill="#606060"/></svg></div>
<div class="a" style="left:443px;top:231px;width:16px;height:16px;background:#f3f3f3;border:1px solid #cfcfcf"><svg width="14" height="14" style="position:absolute;left:0;top:0"><polygon points="3,6 11,6 7,10" fill="#606060"/></svg></div>
<div class="a" style="left:561px;top:231px;width:16px;height:16px;background:#f3f3f3;border:1px solid #cfcfcf"><svg width="14" height="14" style="position:absolute;left:0;top:0"><polygon points="3,6 11,6 7,10" fill="#606060"/></svg></div>
<div style="position:absolute;left:1px;top:640px;width:1279px;height:28px;background:#e6e6e6"></div>
<div style="position:absolute;left:1px;top:640px;width:1259px;height:1px;background:#bdbdbd"></div>
<div style="position:absolute;left:1px;top:667px;width:1279px;height:1px;background:#c6c6c6"></div>
<div style="position:absolute;left:101px;top:640px;width:71px;height:26px;background:#fff;border:1px solid #c0c0c0;border-top:none"></div>
<div style="position:absolute;left:101px;top:663px;width:71px;height:2px;background:#1d6b40"></div>
<div class="t " style="left:113px;top:647px;font-size:14px;font-weight:bold;color:#217346;transform:scaleX(0.92);transform-origin:0 0">tabulka</div>
<div style="position:absolute;left:1px;top:668px;width:1279px;height:22px;background:#f1f1f1"></div>
<div class="t " style="left:8px;top:673px;font-size:12px;color:#444">Připraven</div>
<div style="position:absolute;left:0px;top:690px;width:1280px;height:30px;background:#1a2539"></div>
<svg class="a" style="left:23px;top:10px" width="14" height="14" viewBox="0 0 14 14"><rect x="1" y="1" width="12" height="12" fill="none" stroke="#fff" stroke-width="2"/><rect x="1" y="6.3" width="12" height="2.6" fill="#fff"/><rect x="5" y="11" width="2" height="2" fill="#fff"/></svg>
<svg class="a" style="left:51px;top:9px" width="16" height="15" viewBox="0 0 16 15"><path d="M6.5,1.5 L2,5.5 L6.5,9.5" fill="none" stroke="#fff" stroke-width="2.3" stroke-linejoin="miter"/><path d="M2.5,5.5 H9 A4.2,4.2 0 0 1 9,13.9 H7" fill="none" stroke="#fff" stroke-width="2.2"/></svg>
<svg class="a" style="left:71px;top:14px" width="7" height="5" viewBox="0 0 7 5"><polygon points="0.5,1 6.5,1 3.5,4" fill="#fff"/></svg>
<svg class="a" style="left:86px;top:9px" width="16" height="15" viewBox="0 0 16 15"><path d="M9.5,1.5 L14,5.5 L9.5,9.5" fill="none" stroke="#5ca57a" stroke-width="2.3"/><path d="M13.5,5.5 H7 A4.2,4.2 0 0 0 7,13.9 H9" fill="none" stroke="#5ca57a" stroke-width="2.2"/></svg>
<svg class="a" style="left:107px;top:14px" width="6" height="5" viewBox="0 0 6 5"><polygon points="0.5,1 5.5,1 3,4" fill="#4f9a6e"/></svg>
<svg class="a" style="left:121px;top:9px" width="17" height="17" viewBox="0 0 17 17"><path d="M1,1 H8 L12,5 V6 M7,16 H1 V1" fill="none" stroke="#fff" stroke-width="1.3"/><polygon points="8,1 12,5 8,5" fill="#fff"/><rect x="6" y="9.5" width="10.5" height="4.5" rx="1" fill="#fff"/><rect x="8" y="6.5" width="6" height="3.5" fill="none" stroke="#fff" stroke-width="1.2"/><rect x="8" y="12.5" width="6" height="3.5" fill="#217346" stroke="#fff" stroke-width="1.2"/><rect x="2.5" y="6.5" width="2" height="2" fill="#fff"/><rect x="2.5" y="10.5" width="1.5" height="1.5" fill="#fff"/></svg>
<svg class="a" style="left:154px;top:12px" width="7" height="9" viewBox="0 0 7 9"><rect x="0.5" y="1" width="6" height="1.3" fill="#fff"/><polygon points="0.5,4 6.5,4 3.5,7.5" fill="#fff"/></svg>
<svg class="a" style="left:1113px;top:10px" width="14" height="11" viewBox="0 0 14 11"><rect x="0.5" y="0.5" width="13" height="10" fill="none" stroke="#fff" stroke-width="1"/><rect x="0.5" y="2.5" width="13" height="0.8" fill="#fff"/><path d="M7,9 V4.5 M4.8,6.5 L7,4.3 L9.2,6.5" fill="none" stroke="#fff" stroke-width="1"/></svg>
<div style="position:absolute;left:1161px;top:15px;width:10px;height:1px;background:#fff"></div>
<svg class="a" style="left:1206px;top:10px" width="12" height="12" viewBox="0 0 12 12"><rect x="0.5" y="2.5" width="8.5" height="8.5" fill="none" stroke="#fff"/><path d="M2.5,2.5 V0.5 H11.5 V9 H9" fill="none" stroke="#fff"/></svg>
<svg class="a" style="left:1252px;top:9px" width="12" height="12" viewBox="0 0 12 12"><path d="M0.5,0.5 L11.5,11.5 M11.5,0.5 L0.5,11.5" stroke="#fff" stroke-width="1.1"/></svg>
<svg class="a" style="left:684px;top:41px" width="12" height="16" viewBox="0 0 12 16"><path d="M3.5,10.5 C2,9 1,7.5 1,5.5 A5,5 0 0 1 11,5.5 C11,7.5 10,9 8.5,10.5 V12 H3.5 Z" fill="none" stroke="#fff" stroke-width="1.1"/><rect x="3.5" y="13.3" width="5" height="1" fill="#fff"/></svg>
<svg class="a" style="left:1208px;top:42px" width="17" height="17" viewBox="0 0 17 17"><circle cx="7" cy="5.5" r="4.2" fill="none" stroke="#fff" stroke-width="1.3"/><path d="M1,16 C1.5,11.5 4,9.8 7,9.8 C8.5,9.8 9.5,10.2 10.5,10.8" fill="none" stroke="#fff" stroke-width="1.3"/><path d="M13,11 V16.5 M10.2,13.7 H15.8" stroke="#fff" stroke-width="1.3"/></svg>
<svg class="a" style="left:8px;top:116px" width="16" height="17" viewBox="0 0 16 17"><rect x="3.5" y="3.5" width="9" height="9" fill="#fff" stroke="#8a8a8a"/><path d="M6.5,3.5 V12.5 M9.5,3.5 V12.5 M3.5,6.5 H12.5 M3.5,9.5 H12.5" stroke="#8a8a8a" stroke-width="0.8"/><polygon points="8,0 6.3,2 9.7,2" fill="#5a7fa8"/><polygon points="8,16 6.3,14 9.7,14" fill="#5a7fa8"/><polygon points="0,8 2,6.3 2,9.7" fill="#5a7fa8"/><polygon points="16,8 14,6.3 14,9.7" fill="#5a7fa8"/></svg>
<svg class="a" style="left:169px;top:71px" width="16" height="16" viewBox="0 0 16 16"><rect x="0.5" y="0.5" width="15" height="15" fill="#fff" stroke="#7a7a7a"/><rect x="2" y="2" width="12" height="3" fill="#c4c4c4"/><rect x="2" y="5.5" width="3" height="8.5" fill="#c4c4c4"/><path d="M7,13 H10.5 V8 M8.5,10 L10.5,7.5 L12.5,10 M7,13 L9,11 M7,13 L9,15" fill="none" stroke="#3a6ea8" stroke-width="1.3"/></svg>
<svg class="a" style="left:169px;top:95px" width="16" height="14" viewBox="0 0 16 14"><rect x="0" y="0" width="5" height="14" fill="#3c5a85"/><rect x="0.8" y="3.5" width="3.4" height="3" fill="#e3b468"/><rect x="0.8" y="10.3" width="3.4" height="3" fill="#e3b468"/><rect x="11" y="0" width="5" height="14" fill="#555"/><rect x="11.8" y="3.5" width="3.4" height="3" fill="#e3b468"/><rect x="11.8" y="7" width="3.4" height="3" fill="#fff"/><rect x="11.8" y="10.3" width="3.4" height="3" fill="#fff"/><rect x="11.8" y="0.8" width="3.4" height="2.2" fill="#3c5a85"/><path d="M6,7 H10 M8,5 V9" stroke="#3a6ea8" stroke-width="1.2"/></svg>
<svg class="a" style="left:169px;top:117px" width="17" height="17" viewBox="0 0 17 17"><rect x="0.5" y="0.5" width="12" height="7" fill="#fff" stroke="#7a7a7a"/><rect x="1.5" y="1.5" width="5" height="5" fill="#b7bfd6"/><polygon points="8.5,3 11.5,3 10,5" fill="#444"/><rect x="5.5" y="8.5" width="11" height="7" fill="#fff" stroke="#7a7a7a"/><rect x="6.5" y="9.5" width="9" height="5" fill="#b7bfd6"/><path d="M3,9 C0,11 1,15 5,15" fill="none" stroke="#3a6ea8" stroke-width="1.4"/><polygon points="5,12.5 8,15 5,17" fill="#3a6ea8"/></svg>
<svg class="a" style="left:371px;top:73px" width="28" height="28" viewBox="0 0 28 28"><rect x="0.5" y="0.5" width="27" height="27" fill="#fff" stroke="#6d6d6d"/><rect x="0" y="0" width="28" height="3.5" fill="#6d6d6d"/><rect x="3.5" y="6" width="22" height="3.5" rx="1" fill="#3a75b8"/><rect x="3.5" y="13" width="7.5" height="3.5" rx="1" fill="#3a75b8"/><rect x="3.5" y="20" width="11" height="3.5" fill="#b9d0e8"/><rect x="20" y="20" width="5.5" height="3.5" fill="#b9d0e8"/><polygon points="9,11 26,11 19,18.5 19,25.5 16,25.5 16,18.5" fill="#6d6d6d" stroke="#fff" stroke-width="1"/></svg>
<svg class="a" style="left:431px;top:73px" width="32" height="31" viewBox="0 0 32 31"><rect x="0.5" y="0.5" width="27" height="24" fill="#fff" stroke="#707070"/><rect x="0" y="0" width="28" height="4.5" fill="#707070"/><path d="M9.5,4 V25 M18.5,4 V25 M0,9.5 H28 M0,14.5 H28 M0,19.5 H28" stroke="#707070" stroke-width="1"/><rect x="13" y="16" width="19" height="15" fill="#f1f1f1"/><path d="M16,17.5 V19 C16,22 18,23.5 21,23.5 H26" fill="none" stroke="#3a75b8" stroke-width="3.2"/><polygon points="22,17 30,23.5 22,30 20,28 25.5,23.5 20,19" fill="#3a75b8"/></svg>
<div style="position:absolute;left:445px;top:128px;width:6px;height:1px;background:transparent"></div>
<svg class="a" style="left:443px;top:128px" width="6" height="4" viewBox="0 0 6 4"><polygon points="0,0 6,0 3,3" fill="#666"/></svg>
<svg class="a" style="left:500px;top:72px" width="28" height="31" viewBox="0 0 28 31"><path d="M0.5,0.5 H14 L20.5,7 V15 M12,27.5 H0.5 V0.5" fill="#f5eff2" stroke="#b5b5b5" stroke-width="1.1"/><path d="M14,0.5 V7 H20.5" fill="none" stroke="#b5b5b5" stroke-width="1.1"/><rect x="12" y="15" width="16" height="16" fill="#f1f1f1"/><path d="M15.2,22.5 A5.3,5.3 0 0 1 24.5,19" fill="none" stroke="#b8b8b8" stroke-width="2.6"/><path d="M25.3,24 A5.3,5.3 0 0 1 16,27.5" fill="none" stroke="#b8b8b8" stroke-width="2.6"/><polygon points="21.5,16 27.5,16 27.5,22" fill="#b8b8b8"/><polygon points="19,30.5 13,30.5 13,24.5" fill="#b8b8b8"/></svg>
<svg class="a" style="left:508px;top:128px" width="6" height="4" viewBox="0 0 6 4"><polygon points="0,0 6,0 3,3" fill="#666"/></svg>
<svg class="a" style="left:550px;top:71px" width="14" height="16" viewBox="0 0 14 16"><rect x="0.5" y="0.5" width="13" height="15" fill="none" stroke="#9a9a9a"/><rect x="0" y="0" width="14" height="2.5" fill="#9a9a9a"/><circle cx="4" cy="6.5" r="1.3" fill="#9a9a9a"/><circle cx="4" cy="11" r="1.2" fill="none" stroke="#9a9a9a"/><path d="M7,6.5 H11 M7,11 H11" stroke="#9a9a9a"/></svg>
<svg class="a" style="left:550px;top:95px" width="15" height="16" viewBox="0 0 15 16"><path d="M7.5,12.5 H0.5 V0.5 H12.5 V6" fill="none" stroke="#9a9a9a"/><rect x="0" y="0" width="13" height="2.5" fill="#9a9a9a"/><path d="M5.5,2.5 V12" stroke="#9a9a9a"/><circle cx="11" cy="11.5" r="3.6" fill="#f1f1f1" stroke="#9a9a9a"/><path d="M7.5,11.5 H14.5 M11,8 V15" stroke="#9a9a9a" stroke-width="0.8"/></svg>
<svg class="a" style="left:549px;top:117px" width="16" height="16" viewBox="0 0 16 16"><path d="M6,5 H3.5 A2.5,2.5 0 0 0 3.5,10 H6 M10,5 H12.5 A2.5,2.5 0 0 1 12.5,10 H10" fill="none" stroke="#a8a8a8" stroke-width="2.2"/><path d="M8,0 V2.5 M4,1 L5.5,3 M12,1 L10.5,3 M8,16 V13.5 M4,15 L5.5,13 M12,15 L10.5,13" stroke="#a8a8a8" stroke-width="0.9"/></svg>
<svg class="a" style="left:580px;top:72px" width="13" height="13" viewBox="0 0 13 13"><path d="M2.5,6.5 L5.2,9.5 L10.5,2.8" fill="none" stroke="#6a6a6a" stroke-width="1.3"/></svg>
<svg class="a" style="left:580px;top:118px" width="13" height="13" viewBox="0 0 13 13"><path d="M2.5,6.5 L5.2,9.5 L10.5,2.8" fill="none" stroke="#6a6a6a" stroke-width="1.3"/></svg>
<svg class="a" style="left:697px;top:72px" width="13" height="13" viewBox="0 0 13 13"><path d="M2.5,6.5 L5.2,9.5 L10.5,2.8" fill="none" stroke="#6a6a6a" stroke-width="1.3"/></svg>
<svg class="a" style="left:697px;top:95px" width="13" height="13" viewBox="0 0 13 13"><path d="M2.5,6.5 L5.2,9.5 L10.5,2.8" fill="none" stroke="#6a6a6a" stroke-width="1.3"/></svg>
<svg class="a" style="left:697px;top:118px" width="13" height="13" viewBox="0 0 13 13"><path d="M2.5,6.5 L5.2,9.5 L10.5,2.8" fill="none" stroke="#6a6a6a" stroke-width="1.3"/></svg>
<svg class="a" style="left:94px;top:177px" width="8" height="5" viewBox="0 0 8 5"><polygon points="0,0.5 8,0.5 4,4.5" fill="#777"/></svg>
<div style="position:absolute;left:122px;top:176px;width:2px;height:2px;background:#a8a8a8"></div>
<div style="position:absolute;left:122px;top:180px;width:2px;height:2px;background:#a8a8a8"></div>
<div style="position:absolute;left:122px;top:184px;width:2px;height:2px;background:#a8a8a8"></div>
<svg class="a" style="left:151px;top:177px" width="12" height="12" viewBox="0 0 12 12"><path d="M1,1 L11,11 M11,1 L1,11" stroke="#bdbdbd" stroke-width="1.3"/></svg>
<svg class="a" style="left:186px;top:176px" width="15" height="13" viewBox="0 0 15 13"><path d="M1.5,7 L5.5,11.5 L13.5,1.5" fill="none" stroke="#c3c3c3" stroke-width="1.8"/></svg>
<div class="t" style="left:224px;top:175px;font-family:'Liberation Serif',serif;font-style:italic;font-weight:bold;font-size:13px;color:#666">f<span style="font-size:9.5px">x</span></div>
<svg class="a" style="left:27px;top:649px" width="6" height="9" viewBox="0 0 6 9"><polygon points="5,0.5 5,8.5 1,4.5" fill="#c2c2c2"/></svg>
<svg class="a" style="left:55px;top:649px" width="6" height="9" viewBox="0 0 6 9"><polygon points="1,0.5 1,8.5 5,4.5" fill="#c2c2c2"/></svg>
<svg class="a" style="left:203px;top:645px" width="18" height="18" viewBox="0 0 18 18"><circle cx="9" cy="9" r="7.5" fill="none" stroke="#7a7a7a" stroke-width="1.2"/><path d="M9,4.5 V13.5 M4.5,9 H13.5" stroke="#7a7a7a" stroke-width="1.6"/></svg>
<div style="position:absolute;left:769px;top:648px;width:2px;height:2px;background:#a8a8a8"></div>
<div style="position:absolute;left:769px;top:652px;width:2px;height:2px;background:#a8a8a8"></div>
<div style="position:absolute;left:769px;top:656px;width:2px;height:2px;background:#a8a8a8"></div>
<div style="position:absolute;left:786px;top:647px;width:474px;height:15px;background:#dadada"></div>
<div style="position:absolute;left:786px;top:647px;width:427px;height:15px;background:#fff;border:1px solid #ababab"></div>
<div style="position:absolute;left:786px;top:647px;width:15px;height:15px;background:#fff;border:1px solid #ababab"></div>
<svg class="a" style="left:786px;top:647px" width="15" height="15" viewBox="0 0 15 15"><polygon points="9.5,3.5 9.5,11.5 5,7.5" fill="#606060"/></svg>
<div style="position:absolute;left:1245px;top:647px;width:15px;height:15px;background:#fff;border:1px solid #ababab"></div>
<svg class="a" style="left:1245px;top:647px" width="15" height="15" viewBox="0 0 15 15"><polygon points="5.5,3.5 5.5,11.5 10,7.5" fill="#606060"/></svg>
<div style="position:absolute;left:1260px;top:158px;width:20px;height:483px;background:#e6e6e6"></div>
<div style="position:absolute;left:1264px;top:227px;width:14px;height:400px;background:#dadada"></div>
<div style="position:absolute;left:1264px;top:626px;width:14px;height:14px;background:#fff;border:1px solid #ababab"></div>
<svg class="a" style="left:1264px;top:626px" width="14" height="14" viewBox="0 0 14 14"><polygon points="3,5 11,5 7,9" fill="#606060"/></svg>
<div style="position:absolute;left:1259px;top:204px;width:1px;height:437px;background:#9a9a9a"></div>
<div style="position:absolute;left:986px;top:668px;width:38px;height:22px;background:#d6d6d6"></div>
<svg class="a" style="left:998px;top:672px" width="14" height="14" viewBox="0 0 14 14"><rect x="0.5" y="0.5" width="13" height="13" fill="none" stroke="#6a6a6a"/><path d="M4.8,0.5 V13.5 M9.2,0.5 V13.5 M0.5,4.8 H13.5 M0.5,9.2 H13.5" stroke="#6a6a6a"/></svg>
<svg class="a" style="left:1036px;top:672px" width="14" height="14" viewBox="0 0 14 14"><rect x="0.5" y="0.5" width="13" height="13" fill="none" stroke="#6a6a6a"/><rect x="3" y="3" width="8" height="8" fill="none" stroke="#6a6a6a"/><path d="M4.5,5 H9.5 M4.5,7 H9.5 M4.5,9 H9.5" stroke="#6a6a6a" stroke-width="0.8"/></svg>
<svg class="a" style="left:1074px;top:672px" width="14" height="14" viewBox="0 0 14 14"><rect x="0.5" y="0.5" width="13" height="13" fill="none" stroke="#6a6a6a"/><path d="M5,0.5 V7 H13.5 M9,0.5 V7" fill="none" stroke="#6a6a6a"/></svg>
<div style="position:absolute;left:1105px;top:678px;width:6px;height:2px;background:#555"></div>
<div style="position:absolute;left:1115px;top:679px;width:100px;height:1px;background:#9a9a9a"></div>
<div style="position:absolute;left:1165px;top:672px;width:5px;height:14px;background:#6a6a6a"></div>
<div style="position:absolute;left:1219px;top:678px;width:8px;height:2px;background:#555"></div>
<div style="position:absolute;left:1222px;top:675px;width:2px;height:8px;background:#555"></div>
<div class="t " style="left:1241px;top:673px;font-size:12.5px;color:#444;transform:scaleX(0.9);transform-origin:0 0">115 %</div>
<div class="a" style="left:0;top:690px;width:1280px;height:30px;background:linear-gradient(#28324c 0px,#18213b 3px,#141c34 100%)"></div>
<div style="position:absolute;left:0px;top:690px;width:1280px;height:1px;background:#3a4258"></div>
<div class="a" style="left:199px;top:691px;width:42px;height:28px;border-radius:3px;border:1px solid #7e8496;background:linear-gradient(#5a6074,#3a4258)"></div>
<div class="a" style="left:245px;top:691px;width:42px;height:28px;border-radius:3px;border:1px solid #c2c5cc;background:linear-gradient(#a9adb6,#7b808b)"></div>
<div class="a" style="left:9px;top:685px;width:38px;height:38px;border-radius:50%;border:1px solid #3d5674;background:radial-gradient(ellipse at 50% 30%,#b9dcf5 0%,#5aa0d8 30%,#1f5f9e 60%,#0f3c70 80%,#2aa0e8 100%)"></div>
<svg class="a" style="left:15px;top:691px" width="24" height="22" viewBox="0 0 24 22"><path d="M2,5 C5,2.5 8,2.5 11,5 V11 C8,8.5 5,8.5 2,11 Z" fill="#f05a28"/><path d="M12,5 C15,7.5 18,7.5 22,5 V11 C18,13.5 15,13.5 12,11 Z" fill="#7cbb42"/><path d="M2,12 C5,9.5 8,9.5 11,12 V18 C8,15.5 5,15.5 2,18 Z" fill="#2f9de4"/><path d="M12,12 C15,14.5 18,14.5 22,12 V18 C18,20.5 15,20.5 12,18 Z" fill="#fbbc09"/></svg>
<svg class="a" style="left:74px;top:697px" width="16" height="16" viewBox="0 0 16 16"><rect x="0.5" y="0.5" width="15" height="11" fill="#4da3e0" stroke="#9ed0f5"/><circle cx="5" cy="6" r="2.5" fill="#f5b942"/><rect x="9" y="4" width="4" height="1.2" fill="#fff"/><rect x="9" y="7" width="4" height="1.2" fill="#fff"/><ellipse cx="8" cy="14" rx="4" ry="2" fill="#e8e8e8"/></svg>
<svg class="a" style="left:119px;top:696px" width="18" height="18" viewBox="0 0 18 18"><path d="M14.5,10.5 H5 C5.3,13 7,14.2 9,14.2 C10.8,14.2 12,13.4 12.8,12.3 H15.5 C14.5,15 12,16.8 9,16.8 C5,16.8 2.3,14 2.3,10 C2.3,6 5,3.2 9,3.2 C13,3.2 15.5,6 15.5,9.5 Z M5.2,8.3 H12.6 C12.3,6.3 10.9,5.5 9,5.5 C7.1,5.5 5.7,6.5 5.2,8.3 Z" fill="#3d9be0"/><path d="M3,15.5 C0.5,18.5 4,18.5 9,14.5 C14,10.5 18,4 16.5,2 C15.5,0.8 13,1.5 11,3" fill="none" stroke="#f1c232" stroke-width="1.4"/></svg>
<svg class="a" style="left:166px;top:697px" width="16" height="16" viewBox="0 0 16 16"><rect x="0" y="0" width="16" height="16" fill="#9fd0f0"/><circle cx="8" cy="8" r="6" fill="#f0861f"/><polygon points="6,4.5 11.5,8 6,11.5" fill="#fff"/></svg>
<svg class="a" style="left:212px;top:699px" width="16" height="14" viewBox="0 0 16 14"><rect x="0" y="2" width="16" height="12" fill="#f3d46a"/><rect x="0" y="0" width="7" height="3" fill="#f3d46a"/><rect x="1" y="3" width="6" height="1" fill="#7fb84a"/><path d="M3,14 V8 H13 V14" fill="none" stroke="#3aa0e0" stroke-width="2.5"/></svg>
<svg class="a" style="left:257px;top:697px" width="17" height="16" viewBox="0 0 17 16"><rect x="6" y="1" width="10.5" height="14" fill="#fff" stroke="#1d6b3d" stroke-width="1"/><path d="M8,4 H15 M8,7 H15 M8,10 H15 M8,13 H15 M11.5,2 V15" stroke="#1d6b3d" stroke-width="0.8"/><polygon points="0,2 10,0 10,16 0,14" fill="#1d7a45"/><text x="1.8" y="12" font-family="Liberation Sans" font-weight="bold" font-size="9" fill="#fff">X</text></svg>
<div class="t " style="left:1104px;top:698px;font-size:12px;color:#e8e8e8;transform:scaleX(0.85);transform-origin:0 0">CS</div>
<svg class="a" style="left:1134px;top:703px" width="9" height="6" viewBox="0 0 9 6"><polygon points="0,5.5 9,5.5 4.5,0.5" fill="#e6e6e6"/></svg>
<svg class="a" style="left:1156px;top:699px" width="16" height="16" viewBox="0 0 16 16"><rect x="3.5" y="3.5" width="11" height="10" fill="none" stroke="#e8e8e8" stroke-width="1"/><path d="M1,0 V4 M4,0 V4 M0.5,4.5 H4.5 M2.5,4.5 V15 H12" stroke="#e8e8e8" stroke-width="1"/><path d="M8,10 L14,15 M14,10 L8,15" stroke="#e02020" stroke-width="1.8"/></svg>
<svg class="a" style="left:1179px;top:699px" width="16" height="15" viewBox="0 0 16 15"><polygon points="0.5,4.5 3.5,4.5 8,0.5 8,14 3.5,10 0.5,10" fill="#e8e8e8"/><circle cx="10.5" cy="9.8" r="5.2" fill="#d42020"/><circle cx="10.5" cy="9.8" r="3" fill="none" stroke="#fff" stroke-width="1.4"/><path d="M8.4,7.7 L12.6,11.9" stroke="#fff" stroke-width="1.4"/></svg>
<div class="t " style="left:1220px;top:700px;font-size:13px;color:#f0f0f0;transform:scaleX(0.84);transform-origin:0 0">17:30</div>
<div class="a" style="left:1266px;top:691px;width:14px;height:29px;border:1px solid #707a8c;background:linear-gradient(90deg,#4c5568,#2c3447)"></div>
<div style="position:absolute;left:0px;top:0px;width:1px;height:690px;background:#6a6a6a"></div>
<div style="position:absolute;left:773px;top:71px;width:503px;height:537px;background:#fff;border:1px solid #c6c6c6;box-shadow:1px 1px 3px rgba(0,0,0,0.25)"></div>
<div style="position:absolute;left:774px;top:72px;width:484px;height:23px;background:#e9e9e9"></div>
<div class="t " style="left:784px;top:79px;font-size:12px;font-weight:bold;color:#666">Světlá</div>
<div style="position:absolute;left:774px;top:311px;width:484px;height:22px;background:#e9e9e9"></div>
<div class="t " style="left:784px;top:317px;font-size:12px;font-weight:bold;color:#666">Středně sytá</div>
<div class="a" style="left:779px;top:99px;width:61px;height:46px"><svg width="61" height="46"><rect x="0" y="0" width="61" height="46" fill="#fff"/><rect x="2.7" y="3.7" width="7.6" height="1.5" fill="#000"/><rect x="14.7" y="3.7" width="7.6" height="1.5" fill="#000"/><rect x="26.7" y="3.7" width="7.6" height="1.5" fill="#000"/><rect x="38.7" y="3.7" width="7.6" height="1.5" fill="#000"/><rect x="50.7" y="3.7" width="7.6" height="1.5" fill="#000"/><rect x="2.7" y="12.7" width="7.6" height="1.5" fill="#000"/><rect x="14.7" y="12.7" width="7.6" height="1.5" fill="#000"/><rect x="26.7" y="12.7" width="7.6" height="1.5" fill="#000"/><rect x="38.7" y="12.7" width="7.6" height="1.5" fill="#000"/><rect x="50.7" y="12.7" width="7.6" height="1.5" fill="#000"/><rect x="2.7" y="21.7" width="7.6" height="1.5" fill="#000"/><rect x="14.7" y="21.7" width="7.6" height="1.5" fill="#000"/><rect x="26.7" y="21.7" width="7.6" height="1.5" fill="#000"/><rect x="38.7" y="21.7" width="7.6" height="1.5" fill="#000"/><rect x="50.7" y="21.7" width="7.6" height="1.5" fill="#000"/><rect x="2.7" y="30.7" width="7.6" height="1.5" fill="#000"/><rect x="14.7" y="30.7" width="7.6" height="1.5" fill="#000"/><rect x="26.7" y="30.7" width="7.6" height="1.5" fill="#000"/><rect x="38.7" y="30.7" width="7.6" height="1.5" fill="#000"/><rect x="50.7" y="30.7" width="7.6" height="1.5" fill="#000"/><rect x="2.7" y="39.7" width="7.6" height="1.5" fill="#000"/><rect x="14.7" y="39.7" width="7.6" height="1.5" fill="#000"/><rect x="26.7" y="39.7" width="7.6" height="1.5" fill="#000"/><rect x="38.7" y="39.7" width="7.6" height="1.5" fill="#000"/><rect x="50.7" y="39.7" width="7.6" height="1.5" fill="#000"/></svg></div>
<div class="a" style="left:848px;top:99px;width:61px;height:46px"><svg width="61" height="46"><rect x="0" y="0" width="61" height="46" fill="#fff"/><rect x="0" y="9" width="12" height="9" fill="#d9d9d9"/><rect x="12" y="9" width="12" height="9" fill="#d9d9d9"/><rect x="24" y="9" width="12" height="9" fill="#d9d9d9"/><rect x="36" y="9" width="12" height="9" fill="#d9d9d9"/><rect x="48" y="9" width="12" height="9" fill="#d9d9d9"/><rect x="0" y="18" width="12" height="9" fill="#d9d9d9"/><rect x="24" y="18" width="12" height="9" fill="#d9d9d9"/><rect x="48" y="18" width="12" height="9" fill="#d9d9d9"/><rect x="0" y="27" width="12" height="9" fill="#d9d9d9"/><rect x="12" y="27" width="12" height="9" fill="#d9d9d9"/><rect x="24" y="27" width="12" height="9" fill="#d9d9d9"/><rect x="36" y="27" width="12" height="9" fill="#d9d9d9"/><rect x="48" y="27" width="12" height="9" fill="#d9d9d9"/><rect x="0" y="36" width="12" height="9" fill="#d9d9d9"/><rect x="24" y="36" width="12" height="9" fill="#d9d9d9"/><rect x="48" y="36" width="12" height="9" fill="#d9d9d9"/><rect x="0" y="0" width="61" height="1" fill="#000"/><rect x="0" y="9" width="61" height="1" fill="#000"/><rect x="0" y="45" width="61" height="1" fill="#000"/><rect x="2.7" y="3.7" width="7.6" height="1.5" fill="#000"/><rect x="14.7" y="3.7" width="7.6" height="1.5" fill="#000"/><rect x="26.7" y="3.7" width="7.6" height="1.5" fill="#000"/><rect x="38.7" y="3.7" width="7.6" height="1.5" fill="#000"/><rect x="50.7" y="3.7" width="7.6" height="1.5" fill="#000"/><rect x="2.7" y="12.7" width="7.6" height="1.5" fill="#000"/><rect x="14.7" y="12.7" width="7.6" height="1.5" fill="#000"/><rect x="26.7" y="12.7" width="7.6" height="1.5" fill="#000"/><rect x="38.7" y="12.7" width="7.6" height="1.5" fill="#000"/><rect x="50.7" y="12.7" width="7.6" height="1.5" fill="#000"/><rect x="2.7" y="21.7" width="7.6" height="1.5" fill="#000"/><rect x="14.7" y="21.7" width="7.6" height="1.5" fill="#000"/><rect x="26.7" y="21.7" width="7.6" height="1.5" fill="#000"/><rect x="38.7" y="21.7" width="7.6" height="1.5" fill="#000"/><rect x="50.7" y="21.7" width="7.6" height="1.5" fill="#000"/><rect x="2.7" y="30.7" width="7.6" height="1.5" fill="#000"/><rect x="14.7" y="30.7" width="7.6" height="1.5" fill="#000"/><rect x="26.7" y="30.7" width="7.6" height="1.5" fill="#000"/><rect x="38.7" y="30.7" width="7.6" height="1.5" fill="#000"/><rect x="50.7" y="30.7" width="7.6" height="1.5" fill="#000"/><rect x="2.7" y="39.7" width="7.6" height="1.5" fill="#000"/><rect x="14.7" y="39.7" width="7.6" height="1.5" fill="#000"/><rect x="26.7" y="39.7" width="7.6" height="1.5" fill="#000"/><rect x="38.7" y="39.7" width="7.6" height="1.5" fill="#000"/><rect x="50.7" y="39.7" width="7.6" height="1.5" fill="#000"/></svg></div>
<div class="a" style="left:917px;top:99px;width:61px;height:46px"><svg width="61" height="46"><rect x="0" y="0" width="61" height="46" fill="#fff"/><rect x="0" y="9" width="12" height="9" fill="#ddebf7"/><rect x="12" y="9" width="12" height="9" fill="#ddebf7"/><rect x="24" y="9" width="12" height="9" fill="#ddebf7"/><rect x="36" y="9" width="12" height="9" fill="#ddebf7"/><rect x="48" y="9" width="12" height="9" fill="#ddebf7"/><rect x="0" y="18" width="12" height="9" fill="#ddebf7"/><rect x="24" y="18" width="12" height="9" fill="#ddebf7"/><rect x="48" y="18" width="12" height="9" fill="#ddebf7"/><rect x="0" y="27" width="12" height="9" fill="#ddebf7"/><rect x="12" y="27" width="12" height="9" fill="#ddebf7"/><rect x="24" y="27" width="12" height="9" fill="#ddebf7"/><rect x="36" y="27" width="12" height="9" fill="#ddebf7"/><rect x="48" y="27" width="12" height="9" fill="#ddebf7"/><rect x="0" y="36" width="12" height="9" fill="#ddebf7"/><rect x="24" y="36" width="12" height="9" fill="#ddebf7"/><rect x="48" y="36" width="12" height="9" fill="#ddebf7"/><rect x="0" y="0" width="61" height="1" fill="#7fa9d3"/><rect x="0" y="9" width="61" height="1" fill="#7fa9d3"/><rect x="0" y="45" width="61" height="1" fill="#7fa9d3"/><rect x="2.7" y="3.7" width="7.6" height="1.5" fill="#41719c"/><rect x="14.7" y="3.7" width="7.6" height="1.5" fill="#41719c"/><rect x="26.7" y="3.7" width="7.6" height="1.5" fill="#41719c"/><rect x="38.7" y="3.7" width="7.6" height="1.5" fill="#41719c"/><rect x="50.7" y="3.7" width="7.6" height="1.5" fill="#41719c"/><rect x="2.7" y="12.7" width="7.6" height="1.5" fill="#41719c"/><rect x="14.7" y="12.7" width="7.6" height="1.5" fill="#41719c"/><rect x="26.7" y="12.7" width="7.6" height="1.5" fill="#41719c"/><rect x="38.7" y="12.7" width="7.6" height="1.5" fill="#41719c"/><rect x="50.7" y="12.7" width="7.6" height="1.5" fill="#41719c"/><rect x="2.7" y="21.7" width="7.6" height="1.5" fill="#41719c"/><rect x="14.7" y="21.7" width="7.6" height="1.5" fill="#41719c"/><rect x="26.7" y="21.7" width="7.6" height="1.5" fill="#41719c"/><rect x="38.7" y="21.7" width="7.6" height="1.5" fill="#41719c"/><rect x="50.7" y="21.7" width="7.6" height="1.5" fill="#41719c"/><rect x="2.7" y="30.7" width="7.6" height="1.5" fill="#41719c"/><rect x="14.7" y="30.7" width="7.6" height="1.5" fill="#41719c"/><rect x="26.7" y="30.7" width="7.6" height="1.5" fill="#41719c"/><rect x="38.7" y="30.7" width="7.6" height="1.5" fill="#41719c"/><rect x="50.7" y="30.7" width="7.6" height="1.5" fill="#41719c"/><rect x="2.7" y="39.7" width="7.6" height="1.5" fill="#41719c"/><rect x="14.7" y="39.7" width="7.6" height="1.5" fill="#41719c"/><rect x="26.7" y="39.7" width="7.6" height="1.5" fill="#41719c"/><rect x="38.7" y="39.7" width="7.6" height="1.5" fill="#41719c"/><rect x="50.7" y="39.7" width="7.6" height="1.5" fill="#41719c"/></svg></div>
<div class="a" style="left:986px;top:99px;width:61px;height:46px"><svg width="61" height="46"><rect x="0" y="0" width="61" height="46" fill="#fff"/><rect x="0" y="9" width="12" height="9" fill="#fce4d6"/><rect x="12" y="9" width="12" height="9" fill="#fce4d6"/><rect x="24" y="9" width="12" height="9" fill="#fce4d6"/><rect x="36" y="9" width="12" height="9" fill="#fce4d6"/><rect x="48" y="9" width="12" height="9" fill="#fce4d6"/><rect x="0" y="18" width="12" height="9" fill="#fce4d6"/><rect x="24" y="18" width="12" height="9" fill="#fce4d6"/><rect x="48" y="18" width="12" height="9" fill="#fce4d6"/><rect x="0" y="27" width="12" height="9" fill="#fce4d6"/><rect x="12" y="27" width="12" height="9" fill="#fce4d6"/><rect x="24" y="27" width="12" height="9" fill="#fce4d6"/><rect x="36" y="27" width="12" height="9" fill="#fce4d6"/><rect x="48" y="27" width="12" height="9" fill="#fce4d6"/><rect x="0" y="36" width="12" height="9" fill="#fce4d6"/><rect x="24" y="36" width="12" height="9" fill="#fce4d6"/><rect x="48" y="36" width="12" height="9" fill="#fce4d6"/><rect x="0" y="0" width="61" height="1" fill="#e0a070"/><rect x="0" y="9" width="61" height="1" fill="#e0a070"/><rect x="0" y="45" width="61" height="1" fill="#e0a070"/><rect x="2.7" y="3.7" width="7.6" height="1.5" fill="#a9652f"/><rect x="14.7" y="3.7" width="7.6" height="1.5" fill="#a9652f"/><rect x="26.7" y="3.7" width="7.6" height="1.5" fill="#a9652f"/><rect x="38.7" y="3.7" width="7.6" height="1.5" fill="#a9652f"/><rect x="50.7" y="3.7" width="7.6" height="1.5" fill="#a9652f"/><rect x="2.7" y="12.7" width="7.6" height="1.5" fill="#a9652f"/><rect x="14.7" y="12.7" width="7.6" height="1.5" fill="#a9652f"/><rect x="26.7" y="12.7" width="7.6" height="1.5" fill="#a9652f"/><rect x="38.7" y="12.7" width="7.6" height="1.5" fill="#a9652f"/><rect x="50.7" y="12.7" width="7.6" height="1.5" fill="#a9652f"/><rect x="2.7" y="21.7" width="7.6" height="1.5" fill="#a9652f"/><rect x="14.7" y="21.7" width="7.6" height="1.5" fill="#a9652f"/><rect x="26.7" y="21.7" width="7.6" height="1.5" fill="#a9652f"/><rect x="38.7" y="21.7" width="7.6" height="1.5" fill="#a9652f"/><rect x="50.7" y="21.7" width="7.6" height="1.5" fill="#a9652f"/><rect x="2.7" y="30.7" width="7.6" height="1.5" fill="#a9652f"/><rect x="14.7" y="30.7" width="7.6" height="1.5" fill="#a9652f"/><rect x="26.7" y="30.7" width="7.6" height="1.5" fill="#a9652f"/><rect x="38.7" y="30.7" width="7.6" height="1.5" fill="#a9652f"/><rect x="50.7" y="30.7" width="7.6" height="1.5" fill="#a9652f"/><rect x="2.7" y="39.7" width="7.6" height="1.5" fill="#a9652f"/><rect x="14.7" y="39.7" width="7.6" height="1.5" fill="#a9652f"/><rect x="26.7" y="39.7" width="7.6" height="1.5" fill="#a9652f"/><rect x="38.7" y="39.7" width="7.6" height="1.5" fill="#a9652f"/><rect x="50.7" y="39.7" width="7.6" height="1.5" fill="#a9652f"/></svg></div>
<div class="a" style="left:1055px;top:99px;width:61px;height:46px"><svg width="61" height="46"><rect x="0" y="0" width="61" height="46" fill="#fff"/><rect x="0" y="9" width="12" height="9" fill="#ededed"/><rect x="12" y="9" width="12" height="9" fill="#ededed"/><rect x="24" y="9" width="12" height="9" fill="#ededed"/><rect x="36" y="9" width="12" height="9" fill="#ededed"/><rect x="48" y="9" width="12" height="9" fill="#ededed"/><rect x="0" y="18" width="12" height="9" fill="#ededed"/><rect x="24" y="18" width="12" height="9" fill="#ededed"/><rect x="48" y="18" width="12" height="9" fill="#ededed"/><rect x="0" y="27" width="12" height="9" fill="#ededed"/><rect x="12" y="27" width="12" height="9" fill="#ededed"/><rect x="24" y="27" width="12" height="9" fill="#ededed"/><rect x="36" y="27" width="12" height="9" fill="#ededed"/><rect x="48" y="27" width="12" height="9" fill="#ededed"/><rect x="0" y="36" width="12" height="9" fill="#ededed"/><rect x="24" y="36" width="12" height="9" fill="#ededed"/><rect x="48" y="36" width="12" height="9" fill="#ededed"/><rect x="0" y="0" width="61" height="1" fill="#b0b0b0"/><rect x="0" y="9" width="61" height="1" fill="#b0b0b0"/><rect x="0" y="45" width="61" height="1" fill="#b0b0b0"/><rect x="2.7" y="3.7" width="7.6" height="1.5" fill="#6d6d6d"/><rect x="14.7" y="3.7" width="7.6" height="1.5" fill="#6d6d6d"/><rect x="26.7" y="3.7" width="7.6" height="1.5" fill="#6d6d6d"/><rect x="38.7" y="3.7" width="7.6" height="1.5" fill="#6d6d6d"/><rect x="50.7" y="3.7" width="7.6" height="1.5" fill="#6d6d6d"/><rect x="2.7" y="12.7" width="7.6" height="1.5" fill="#6d6d6d"/><rect x="14.7" y="12.7" width="7.6" height="1.5" fill="#6d6d6d"/><rect x="26.7" y="12.7" width="7.6" height="1.5" fill="#6d6d6d"/><rect x="38.7" y="12.7" width="7.6" height="1.5" fill="#6d6d6d"/><rect x="50.7" y="12.7" width="7.6" height="1.5" fill="#6d6d6d"/><rect x="2.7" y="21.7" width="7.6" height="1.5" fill="#6d6d6d"/><rect x="14.7" y="21.7" width="7.6" height="1.5" fill="#6d6d6d"/><rect x="26.7" y="21.7" width="7.6" height="1.5" fill="#6d6d6d"/><rect x="38.7" y="21.7" width="7.6" height="1.5" fill="#6d6d6d"/><rect x="50.7" y="21.7" width="7.6" height="1.5" fill="#6d6d6d"/><rect x="2.7" y="30.7" width="7.6" height="1.5" fill="#6d6d6d"/><rect x="14.7" y="30.7" width="7.6" height="1.5" fill="#6d6d6d"/><rect x="26.7" y="30.7" width="7.6" height="1.5" fill="#6d6d6d"/><rect x="38.7" y="30.7" width="7.6" height="1.5" fill="#6d6d6d"/><rect x="50.7" y="30.7" width="7.6" height="1.5" fill="#6d6d6d"/><rect x="2.7" y="39.7" width="7.6" height="1.5" fill="#6d6d6d"/><rect x="14.7" y="39.7" width="7.6" height="1.5" fill="#6d6d6d"/><rect x="26.7" y="39.7" width="7.6" height="1.5" fill="#6d6d6d"/><rect x="38.7" y="39.7" width="7.6" height="1.5" fill="#6d6d6d"/><rect x="50.7" y="39.7" width="7.6" height="1.5" fill="#6d6d6d"/></svg></div>
<div class="a" style="left:1124px;top:99px;width:61px;height:46px"><svg width="61" height="46"><rect x="0" y="0" width="61" height="46" fill="#fff"/><rect x="0" y="9" width="12" height="9" fill="#fff2cc"/><rect x="12" y="9" width="12" height="9" fill="#fff2cc"/><rect x="24" y="9" width="12" height="9" fill="#fff2cc"/><rect x="36" y="9" width="12" height="9" fill="#fff2cc"/><rect x="48" y="9" width="12" height="9" fill="#fff2cc"/><rect x="0" y="18" width="12" height="9" fill="#fff2cc"/><rect x="24" y="18" width="12" height="9" fill="#fff2cc"/><rect x="48" y="18" width="12" height="9" fill="#fff2cc"/><rect x="0" y="27" width="12" height="9" fill="#fff2cc"/><rect x="12" y="27" width="12" height="9" fill="#fff2cc"/><rect x="24" y="27" width="12" height="9" fill="#fff2cc"/><rect x="36" y="27" width="12" height="9" fill="#fff2cc"/><rect x="48" y="27" width="12" height="9" fill="#fff2cc"/><rect x="0" y="36" width="12" height="9" fill="#fff2cc"/><rect x="24" y="36" width="12" height="9" fill="#fff2cc"/><rect x="48" y="36" width="12" height="9" fill="#fff2cc"/><rect x="0" y="0" width="61" height="1" fill="#f2c94a"/><rect x="0" y="9" width="61" height="1" fill="#f2c94a"/><rect x="0" y="45" width="61" height="1" fill="#f2c94a"/><rect x="2.7" y="3.7" width="7.6" height="1.5" fill="#a88a2a"/><rect x="14.7" y="3.7" width="7.6" height="1.5" fill="#a88a2a"/><rect x="26.7" y="3.7" width="7.6" height="1.5" fill="#a88a2a"/><rect x="38.7" y="3.7" width="7.6" height="1.5" fill="#a88a2a"/><rect x="50.7" y="3.7" width="7.6" height="1.5" fill="#a88a2a"/><rect x="2.7" y="12.7" width="7.6" height="1.5" fill="#a88a2a"/><rect x="14.7" y="12.7" width="7.6" height="1.5" fill="#a88a2a"/><rect x="26.7" y="12.7" width="7.6" height="1.5" fill="#a88a2a"/><rect x="38.7" y="12.7" width="7.6" height="1.5" fill="#a88a2a"/><rect x="50.7" y="12.7" width="7.6" height="1.5" fill="#a88a2a"/><rect x="2.7" y="21.7" width="7.6" height="1.5" fill="#a88a2a"/><rect x="14.7" y="21.7" width="7.6" height="1.5" fill="#a88a2a"/><rect x="26.7" y="21.7" width="7.6" height="1.5" fill="#a88a2a"/><rect x="38.7" y="21.7" width="7.6" height="1.5" fill="#a88a2a"/><rect x="50.7" y="21.7" width="7.6" height="1.5" fill="#a88a2a"/><rect x="2.7" y="30.7" width="7.6" height="1.5" fill="#a88a2a"/><rect x="14.7" y="30.7" width="7.6" height="1.5" fill="#a88a2a"/><rect x="26.7" y="30.7" width="7.6" height="1.5" fill="#a88a2a"/><rect x="38.7" y="30.7" width="7.6" height="1.5" fill="#a88a2a"/><rect x="50.7" y="30.7" width="7.6" height="1.5" fill="#a88a2a"/><rect x="2.7" y="39.7" width="7.6" height="1.5" fill="#a88a2a"/><rect x="14.7" y="39.7" width="7.6" height="1.5" fill="#a88a2a"/><rect x="26.7" y="39.7" width="7.6" height="1.5" fill="#a88a2a"/><rect x="38.7" y="39.7" width="7.6" height="1.5" fill="#a88a2a"/><rect x="50.7" y="39.7" width="7.6" height="1.5" fill="#a88a2a"/></svg></div>
<div class="a" style="left:1193px;top:99px;width:61px;height:46px"><svg width="61" height="46"><rect x="0" y="0" width="61" height="46" fill="#fff"/><rect x="0" y="9" width="12" height="9" fill="#d9e1f2"/><rect x="12" y="9" width="12" height="9" fill="#d9e1f2"/><rect x="24" y="9" width="12" height="9" fill="#d9e1f2"/><rect x="36" y="9" width="12" height="9" fill="#d9e1f2"/><rect x="48" y="9" width="12" height="9" fill="#d9e1f2"/><rect x="0" y="18" width="12" height="9" fill="#d9e1f2"/><rect x="24" y="18" width="12" height="9" fill="#d9e1f2"/><rect x="48" y="18" width="12" height="9" fill="#d9e1f2"/><rect x="0" y="27" width="12" height="9" fill="#d9e1f2"/><rect x="12" y="27" width="12" height="9" fill="#d9e1f2"/><rect x="24" y="27" width="12" height="9" fill="#d9e1f2"/><rect x="36" y="27" width="12" height="9" fill="#d9e1f2"/><rect x="48" y="27" width="12" height="9" fill="#d9e1f2"/><rect x="0" y="36" width="12" height="9" fill="#d9e1f2"/><rect x="24" y="36" width="12" height="9" fill="#d9e1f2"/><rect x="48" y="36" width="12" height="9" fill="#d9e1f2"/><rect x="0" y="0" width="61" height="1" fill="#6f8fca"/><rect x="0" y="9" width="61" height="1" fill="#6f8fca"/><rect x="0" y="45" width="61" height="1" fill="#6f8fca"/><rect x="2.7" y="3.7" width="7.6" height="1.5" fill="#3a5a94"/><rect x="14.7" y="3.7" width="7.6" height="1.5" fill="#3a5a94"/><rect x="26.7" y="3.7" width="7.6" height="1.5" fill="#3a5a94"/><rect x="38.7" y="3.7" width="7.6" height="1.5" fill="#3a5a94"/><rect x="50.7" y="3.7" width="7.6" height="1.5" fill="#3a5a94"/><rect x="2.7" y="12.7" width="7.6" height="1.5" fill="#3a5a94"/><rect x="14.7" y="12.7" width="7.6" height="1.5" fill="#3a5a94"/><rect x="26.7" y="12.7" width="7.6" height="1.5" fill="#3a5a94"/><rect x="38.7" y="12.7" width="7.6" height="1.5" fill="#3a5a94"/><rect x="50.7" y="12.7" width="7.6" height="1.5" fill="#3a5a94"/><rect x="2.7" y="21.7" width="7.6" height="1.5" fill="#3a5a94"/><rect x="14.7" y="21.7" width="7.6" height="1.5" fill="#3a5a94"/><rect x="26.7" y="21.7" width="7.6" height="1.5" fill="#3a5a94"/><rect x="38.7" y="21.7" width="7.6" height="1.5" fill="#3a5a94"/><rect x="50.7" y="21.7" width="7.6" height="1.5" fill="#3a5a94"/><rect x="2.7" y="30.7" width="7.6" height="1.5" fill="#3a5a94"/><rect x="14.7" y="30.7" width="7.6" height="1.5" fill="#3a5a94"/><rect x="26.7" y="30.7" width="7.6" height="1.5" fill="#3a5a94"/><rect x="38.7" y="30.7" width="7.6" height="1.5" fill="#3a5a94"/><rect x="50.7" y="30.7" width="7.6" height="1.5" fill="#3a5a94"/><rect x="2.7" y="39.7" width="7.6" height="1.5" fill="#3a5a94"/><rect x="14.7" y="39.7" width="7.6" height="1.5" fill="#3a5a94"/><rect x="26.7" y="39.7" width="7.6" height="1.5" fill="#3a5a94"/><rect x="38.7" y="39.7" width="7.6" height="1.5" fill="#3a5a94"/><rect x="50.7" y="39.7" width="7.6" height="1.5" fill="#3a5a94"/></svg></div>
<div class="a" style="left:779px;top:153px;width:61px;height:46px"><svg width="61" height="46"><rect x="0" y="0" width="61" height="46" fill="#fff"/><rect x="0" y="9" width="12" height="9" fill="#e2efda"/><rect x="12" y="9" width="12" height="9" fill="#e2efda"/><rect x="24" y="9" width="12" height="9" fill="#e2efda"/><rect x="36" y="9" width="12" height="9" fill="#e2efda"/><rect x="48" y="9" width="12" height="9" fill="#e2efda"/><rect x="0" y="18" width="12" height="9" fill="#e2efda"/><rect x="24" y="18" width="12" height="9" fill="#e2efda"/><rect x="48" y="18" width="12" height="9" fill="#e2efda"/><rect x="0" y="27" width="12" height="9" fill="#e2efda"/><rect x="12" y="27" width="12" height="9" fill="#e2efda"/><rect x="24" y="27" width="12" height="9" fill="#e2efda"/><rect x="36" y="27" width="12" height="9" fill="#e2efda"/><rect x="48" y="27" width="12" height="9" fill="#e2efda"/><rect x="0" y="36" width="12" height="9" fill="#e2efda"/><rect x="24" y="36" width="12" height="9" fill="#e2efda"/><rect x="48" y="36" width="12" height="9" fill="#e2efda"/><rect x="0" y="0" width="61" height="1" fill="#8fbb70"/><rect x="0" y="9" width="61" height="1" fill="#8fbb70"/><rect x="0" y="45" width="61" height="1" fill="#8fbb70"/><rect x="2.7" y="3.7" width="7.6" height="1.5" fill="#5a8a3a"/><rect x="14.7" y="3.7" width="7.6" height="1.5" fill="#5a8a3a"/><rect x="26.7" y="3.7" width="7.6" height="1.5" fill="#5a8a3a"/><rect x="38.7" y="3.7" width="7.6" height="1.5" fill="#5a8a3a"/><rect x="50.7" y="3.7" width="7.6" height="1.5" fill="#5a8a3a"/><rect x="2.7" y="12.7" width="7.6" height="1.5" fill="#5a8a3a"/><rect x="14.7" y="12.7" width="7.6" height="1.5" fill="#5a8a3a"/><rect x="26.7" y="12.7" width="7.6" height="1.5" fill="#5a8a3a"/><rect x="38.7" y="12.7" width="7.6" height="1.5" fill="#5a8a3a"/><rect x="50.7" y="12.7" width="7.6" height="1.5" fill="#5a8a3a"/><rect x="2.7" y="21.7" width="7.6" height="1.5" fill="#5a8a3a"/><rect x="14.7" y="21.7" width="7.6" height="1.5" fill="#5a8a3a"/><rect x="26.7" y="21.7" width="7.6" height="1.5" fill="#5a8a3a"/><rect x="38.7" y="21.7" width="7.6" height="1.5" fill="#5a8a3a"/><rect x="50.7" y="21.7" width="7.6" height="1.5" fill="#5a8a3a"/><rect x="2.7" y="30.7" width="7.6" height="1.5" fill="#5a8a3a"/><rect x="14.7" y="30.7" width="7.6" height="1.5" fill="#5a8a3a"/><rect x="26.7" y="30.7" width="7.6" height="1.5" fill="#5a8a3a"/><rect x="38.7" y="30.7" width="7.6" height="1.5" fill="#5a8a3a"/><rect x="50.7" y="30.7" width="7.6" height="1.5" fill="#5a8a3a"/><rect x="2.7" y="39.7" width="7.6" height="1.5" fill="#5a8a3a"/><rect x="14.7" y="39.7" width="7.6" height="1.5" fill="#5a8a3a"/><rect x="26.7" y="39.7" width="7.6" height="1.5" fill="#5a8a3a"/><rect x="38.7" y="39.7" width="7.6" height="1.5" fill="#5a8a3a"/><rect x="50.7" y="39.7" width="7.6" height="1.5" fill="#5a8a3a"/></svg></div>
<div class="a" style="left:848px;top:153px;width:61px;height:46px"><svg width="61" height="46"><rect x="0" y="0" width="61" height="46" fill="#fff"/><rect x="0" y="0" width="61" height="9" fill="#000000"/><rect x="0" y="9" width="61" height="1" fill="#000000"/><rect x="0" y="18" width="61" height="1" fill="#000000"/><rect x="0" y="27" width="61" height="1" fill="#000000"/><rect x="0" y="36" width="61" height="1" fill="#000000"/><rect x="0" y="45" width="61" height="1" fill="#000000"/><rect x="0" y="9" width="1" height="37" fill="#000000"/><rect x="12" y="9" width="1" height="37" fill="#000000"/><rect x="24" y="9" width="1" height="37" fill="#000000"/><rect x="36" y="9" width="1" height="37" fill="#000000"/><rect x="48" y="9" width="1" height="37" fill="#000000"/><rect x="60" y="9" width="1" height="37" fill="#000000"/><rect x="0" y="0" width="1" height="46" fill="#000000"/><rect x="60" y="0" width="1" height="46" fill="#000000"/><rect x="0" y="0" width="61" height="1" fill="#000000"/><rect x="2.7" y="3.7" width="7.6" height="1.5" fill="#fff"/><rect x="14.7" y="3.7" width="7.6" height="1.5" fill="#fff"/><rect x="26.7" y="3.7" width="7.6" height="1.5" fill="#fff"/><rect x="38.7" y="3.7" width="7.6" height="1.5" fill="#fff"/><rect x="50.7" y="3.7" width="7.6" height="1.5" fill="#fff"/><rect x="2.7" y="12.7" width="7.6" height="1.5" fill="#000"/><rect x="14.7" y="12.7" width="7.6" height="1.5" fill="#000"/><rect x="26.7" y="12.7" width="7.6" height="1.5" fill="#000"/><rect x="38.7" y="12.7" width="7.6" height="1.5" fill="#000"/><rect x="50.7" y="12.7" width="7.6" height="1.5" fill="#000"/><rect x="2.7" y="21.7" width="7.6" height="1.5" fill="#000"/><rect x="14.7" y="21.7" width="7.6" height="1.5" fill="#000"/><rect x="26.7" y="21.7" width="7.6" height="1.5" fill="#000"/><rect x="38.7" y="21.7" width="7.6" height="1.5" fill="#000"/><rect x="50.7" y="21.7" width="7.6" height="1.5" fill="#000"/><rect x="2.7" y="30.7" width="7.6" height="1.5" fill="#000"/><rect x="14.7" y="30.7" width="7.6" height="1.5" fill="#000"/><rect x="26.7" y="30.7" width="7.6" height="1.5" fill="#000"/><rect x="38.7" y="30.7" width="7.6" height="1.5" fill="#000"/><rect x="50.7" y="30.7" width="7.6" height="1.5" fill="#000"/><rect x="2.7" y="39.7" width="7.6" height="1.5" fill="#000"/><rect x="14.7" y="39.7" width="7.6" height="1.5" fill="#000"/><rect x="26.7" y="39.7" width="7.6" height="1.5" fill="#000"/><rect x="38.7" y="39.7" width="7.6" height="1.5" fill="#000"/><rect x="50.7" y="39.7" width="7.6" height="1.5" fill="#000"/></svg></div>
<div class="a" style="left:917px;top:153px;width:61px;height:46px"><svg width="61" height="46"><rect x="0" y="0" width="61" height="46" fill="#fff"/><rect x="0" y="0" width="61" height="9" fill="#5b9bd5"/><rect x="0" y="9" width="61" height="1" fill="#5b9bd5"/><rect x="0" y="18" width="61" height="1" fill="#5b9bd5"/><rect x="0" y="27" width="61" height="1" fill="#5b9bd5"/><rect x="0" y="36" width="61" height="1" fill="#5b9bd5"/><rect x="0" y="45" width="61" height="1" fill="#5b9bd5"/><rect x="0" y="9" width="1" height="37" fill="#5b9bd5"/><rect x="12" y="9" width="1" height="37" fill="#5b9bd5"/><rect x="24" y="9" width="1" height="37" fill="#5b9bd5"/><rect x="36" y="9" width="1" height="37" fill="#5b9bd5"/><rect x="48" y="9" width="1" height="37" fill="#5b9bd5"/><rect x="60" y="9" width="1" height="37" fill="#5b9bd5"/><rect x="0" y="0" width="1" height="46" fill="#5b9bd5"/><rect x="60" y="0" width="1" height="46" fill="#5b9bd5"/><rect x="0" y="0" width="61" height="1" fill="#5b9bd5"/><rect x="2.7" y="3.7" width="7.6" height="1.5" fill="#fff"/><rect x="14.7" y="3.7" width="7.6" height="1.5" fill="#fff"/><rect x="26.7" y="3.7" width="7.6" height="1.5" fill="#fff"/><rect x="38.7" y="3.7" width="7.6" height="1.5" fill="#fff"/><rect x="50.7" y="3.7" width="7.6" height="1.5" fill="#fff"/><rect x="2.7" y="12.7" width="7.6" height="1.5" fill="#000"/><rect x="14.7" y="12.7" width="7.6" height="1.5" fill="#000"/><rect x="26.7" y="12.7" width="7.6" height="1.5" fill="#000"/><rect x="38.7" y="12.7" width="7.6" height="1.5" fill="#000"/><rect x="50.7" y="12.7" width="7.6" height="1.5" fill="#000"/><rect x="2.7" y="21.7" width="7.6" height="1.5" fill="#000"/><rect x="14.7" y="21.7" width="7.6" height="1.5" fill="#000"/><rect x="26.7" y="21.7" width="7.6" height="1.5" fill="#000"/><rect x="38.7" y="21.7" width="7.6" height="1.5" fill="#000"/><rect x="50.7" y="21.7" width="7.6" height="1.5" fill="#000"/><rect x="2.7" y="30.7" width="7.6" height="1.5" fill="#000"/><rect x="14.7" y="30.7" width="7.6" height="1.5" fill="#000"/><rect x="26.7" y="30.7" width="7.6" height="1.5" fill="#000"/><rect x="38.7" y="30.7" width="7.6" height="1.5" fill="#000"/><rect x="50.7" y="30.7" width="7.6" height="1.5" fill="#000"/><rect x="2.7" y="39.7" width="7.6" height="1.5" fill="#000"/><rect x="14.7" y="39.7" width="7.6" height="1.5" fill="#000"/><rect x="26.7" y="39.7" width="7.6" height="1.5" fill="#000"/><rect x="38.7" y="39.7" width="7.6" height="1.5" fill="#000"/><rect x="50.7" y="39.7" width="7.6" height="1.5" fill="#000"/></svg></div>
<div class="a" style="left:986px;top:153px;width:61px;height:46px"><svg width="61" height="46"><rect x="0" y="0" width="61" height="46" fill="#fff"/><rect x="0" y="0" width="61" height="9" fill="#ed7d31"/><rect x="0" y="9" width="61" height="1" fill="#ed7d31"/><rect x="0" y="18" width="61" height="1" fill="#ed7d31"/><rect x="0" y="27" width="61" height="1" fill="#ed7d31"/><rect x="0" y="36" width="61" height="1" fill="#ed7d31"/><rect x="0" y="45" width="61" height="1" fill="#ed7d31"/><rect x="0" y="9" width="1" height="37" fill="#ed7d31"/><rect x="12" y="9" width="1" height="37" fill="#ed7d31"/><rect x="24" y="9" width="1" height="37" fill="#ed7d31"/><rect x="36" y="9" width="1" height="37" fill="#ed7d31"/><rect x="48" y="9" width="1" height="37" fill="#ed7d31"/><rect x="60" y="9" width="1" height="37" fill="#ed7d31"/><rect x="0" y="0" width="1" height="46" fill="#ed7d31"/><rect x="60" y="0" width="1" height="46" fill="#ed7d31"/><rect x="0" y="0" width="61" height="1" fill="#ed7d31"/><rect x="2.7" y="3.7" width="7.6" height="1.5" fill="#fff"/><rect x="14.7" y="3.7" width="7.6" height="1.5" fill="#fff"/><rect x="26.7" y="3.7" width="7.6" height="1.5" fill="#fff"/><rect x="38.7" y="3.7" width="7.6" height="1.5" fill="#fff"/><rect x="50.7" y="3.7" width="7.6" height="1.5" fill="#fff"/><rect x="2.7" y="12.7" width="7.6" height="1.5" fill="#000"/><rect x="14.7" y="12.7" width="7.6" height="1.5" fill="#000"/><rect x="26.7" y="12.7" width="7.6" height="1.5" fill="#000"/><rect x="38.7" y="12.7" width="7.6" height="1.5" fill="#000"/><rect x="50.7" y="12.7" width="7.6" height="1.5" fill="#000"/><rect x="2.7" y="21.7" width="7.6" height="1.5" fill="#000"/><rect x="14.7" y="21.7" width="7.6" height="1.5" fill="#000"/><rect x="26.7" y="21.7" width="7.6" height="1.5" fill="#000"/><rect x="38.7" y="21.7" width="7.6" height="1.5" fill="#000"/><rect x="50.7" y="21.7" width="7.6" height="1.5" fill="#000"/><rect x="2.7" y="30.7" width="7.6" height="1.5" fill="#000"/><rect x="14.7" y="30.7" width="7.6" height="1.5" fill="#000"/><rect x="26.7" y="30.7" width="7.6" height="1.5" fill="#000"/><rect x="38.7" y="30.7" width="7.6" height="1.5" fill="#000"/><rect x="50.7" y="30.7" width="7.6" height="1.5" fill="#000"/><rect x="2.7" y="39.7" width="7.6" height="1.5" fill="#000"/><rect x="14.7" y="39.7" width="7.6" height="1.5" fill="#000"/><rect x="26.7" y="39.7" width="7.6" height="1.5" fill="#000"/><rect x="38.7" y="39.7" width="7.6" height="1.5" fill="#000"/><rect x="50.7" y="39.7" width="7.6" height="1.5" fill="#000"/></svg></div>
<div class="a" style="left:1055px;top:153px;width:61px;height:46px"><svg width="61" height="46"><rect x="0" y="0" width="61" height="46" fill="#fff"/><rect x="0" y="0" width="61" height="9" fill="#a5a5a5"/><rect x="0" y="9" width="61" height="1" fill="#a5a5a5"/><rect x="0" y="18" width="61" height="1" fill="#a5a5a5"/><rect x="0" y="27" width="61" height="1" fill="#a5a5a5"/><rect x="0" y="36" width="61" height="1" fill="#a5a5a5"/><rect x="0" y="45" width="61" height="1" fill="#a5a5a5"/><rect x="0" y="9" width="1" height="37" fill="#a5a5a5"/><rect x="12" y="9" width="1" height="37" fill="#a5a5a5"/><rect x="24" y="9" width="1" height="37" fill="#a5a5a5"/><rect x="36" y="9" width="1" height="37" fill="#a5a5a5"/><rect x="48" y="9" width="1" height="37" fill="#a5a5a5"/><rect x="60" y="9" width="1" height="37" fill="#a5a5a5"/><rect x="0" y="0" width="1" height="46" fill="#a5a5a5"/><rect x="60" y="0" width="1" height="46" fill="#a5a5a5"/><rect x="0" y="0" width="61" height="1" fill="#a5a5a5"/><rect x="2.7" y="3.7" width="7.6" height="1.5" fill="#fff"/><rect x="14.7" y="3.7" width="7.6" height="1.5" fill="#fff"/><rect x="26.7" y="3.7" width="7.6" height="1.5" fill="#fff"/><rect x="38.7" y="3.7" width="7.6" height="1.5" fill="#fff"/><rect x="50.7" y="3.7" width="7.6" height="1.5" fill="#fff"/><rect x="2.7" y="12.7" width="7.6" height="1.5" fill="#000"/><rect x="14.7" y="12.7" width="7.6" height="1.5" fill="#000"/><rect x="26.7" y="12.7" width="7.6" height="1.5" fill="#000"/><rect x="38.7" y="12.7" width="7.6" height="1.5" fill="#000"/><rect x="50.7" y="12.7" width="7.6" height="1.5" fill="#000"/><rect x="2.7" y="21.7" width="7.6" height="1.5" fill="#000"/><rect x="14.7" y="21.7" width="7.6" height="1.5" fill="#000"/><rect x="26.7" y="21.7" width="7.6" height="1.5" fill="#000"/><rect x="38.7" y="21.7" width="7.6" height="1.5" fill="#000"/><rect x="50.7" y="21.7" width="7.6" height="1.5" fill="#000"/><rect x="2.7" y="30.7" width="7.6" height="1.5" fill="#000"/><rect x="14.7" y="30.7" width="7.6" height="1.5" fill="#000"/><rect x="26.7" y="30.7" width="7.6" height="1.5" fill="#000"/><rect x="38.7" y="30.7" width="7.6" height="1.5" fill="#000"/><rect x="50.7" y="30.7" width="7.6" height="1.5" fill="#000"/><rect x="2.7" y="39.7" width="7.6" height="1.5" fill="#000"/><rect x="14.7" y="39.7" width="7.6" height="1.5" fill="#000"/><rect x="26.7" y="39.7" width="7.6" height="1.5" fill="#000"/><rect x="38.7" y="39.7" width="7.6" height="1.5" fill="#000"/><rect x="50.7" y="39.7" width="7.6" height="1.5" fill="#000"/></svg></div>
<div class="a" style="left:1124px;top:153px;width:61px;height:46px"><svg width="61" height="46"><rect x="0" y="0" width="61" height="46" fill="#fff"/><rect x="0" y="0" width="61" height="9" fill="#ffc000"/><rect x="0" y="9" width="61" height="1" fill="#ffc000"/><rect x="0" y="18" width="61" height="1" fill="#ffc000"/><rect x="0" y="27" width="61" height="1" fill="#ffc000"/><rect x="0" y="36" width="61" height="1" fill="#ffc000"/><rect x="0" y="45" width="61" height="1" fill="#ffc000"/><rect x="0" y="9" width="1" height="37" fill="#ffc000"/><rect x="12" y="9" width="1" height="37" fill="#ffc000"/><rect x="24" y="9" width="1" height="37" fill="#ffc000"/><rect x="36" y="9" width="1" height="37" fill="#ffc000"/><rect x="48" y="9" width="1" height="37" fill="#ffc000"/><rect x="60" y="9" width="1" height="37" fill="#ffc000"/><rect x="0" y="0" width="1" height="46" fill="#ffc000"/><rect x="60" y="0" width="1" height="46" fill="#ffc000"/><rect x="0" y="0" width="61" height="1" fill="#ffc000"/><rect x="2.7" y="3.7" width="7.6" height="1.5" fill="#fff"/><rect x="14.7" y="3.7" width="7.6" height="1.5" fill="#fff"/><rect x="26.7" y="3.7" width="7.6" height="1.5" fill="#fff"/><rect x="38.7" y="3.7" width="7.6" height="1.5" fill="#fff"/><rect x="50.7" y="3.7" width="7.6" height="1.5" fill="#fff"/><rect x="2.7" y="12.7" width="7.6" height="1.5" fill="#000"/><rect x="14.7" y="12.7" width="7.6" height="1.5" fill="#000"/><rect x="26.7" y="12.7" width="7.6" height="1.5" fill="#000"/><rect x="38.7" y="12.7" width="7.6" height="1.5" fill="#000"/><rect x="50.7" y="12.7" width="7.6" height="1.5" fill="#000"/><rect x="2.7" y="21.7" width="7.6" height="1.5" fill="#000"/><rect x="14.7" y="21.7" width="7.6" height="1.5" fill="#000"/><rect x="26.7" y="21.7" width="7.6" height="1.5" fill="#000"/><rect x="38.7" y="21.7" width="7.6" height="1.5" fill="#000"/><rect x="50.7" y="21.7" width="7.6" height="1.5" fill="#000"/><rect x="2.7" y="30.7" width="7.6" height="1.5" fill="#000"/><rect x="14.7" y="30.7" width="7.6" height="1.5" fill="#000"/><rect x="26.7" y="30.7" width="7.6" height="1.5" fill="#000"/><rect x="38.7" y="30.7" width="7.6" height="1.5" fill="#000"/><rect x="50.7" y="30.7" width="7.6" height="1.5" fill="#000"/><rect x="2.7" y="39.7" width="7.6" height="1.5" fill="#000"/><rect x="14.7" y="39.7" width="7.6" height="1.5" fill="#000"/><rect x="26.7" y="39.7" width="7.6" height="1.5" fill="#000"/><rect x="38.7" y="39.7" width="7.6" height="1.5" fill="#000"/><rect x="50.7" y="39.7" width="7.6" height="1.5" fill="#000"/></svg></div>
<div class="a" style="left:1193px;top:153px;width:61px;height:46px"><svg width="61" height="46"><rect x="0" y="0" width="61" height="46" fill="#fff"/><rect x="0" y="0" width="61" height="9" fill="#4472c4"/><rect x="0" y="9" width="61" height="1" fill="#4472c4"/><rect x="0" y="18" width="61" height="1" fill="#4472c4"/><rect x="0" y="27" width="61" height="1" fill="#4472c4"/><rect x="0" y="36" width="61" height="1" fill="#4472c4"/><rect x="0" y="45" width="61" height="1" fill="#4472c4"/><rect x="0" y="9" width="1" height="37" fill="#4472c4"/><rect x="12" y="9" width="1" height="37" fill="#4472c4"/><rect x="24" y="9" width="1" height="37" fill="#4472c4"/><rect x="36" y="9" width="1" height="37" fill="#4472c4"/><rect x="48" y="9" width="1" height="37" fill="#4472c4"/><rect x="60" y="9" width="1" height="37" fill="#4472c4"/><rect x="0" y="0" width="1" height="46" fill="#4472c4"/><rect x="60" y="0" width="1" height="46" fill="#4472c4"/><rect x="0" y="0" width="61" height="1" fill="#4472c4"/><rect x="2.7" y="3.7" width="7.6" height="1.5" fill="#fff"/><rect x="14.7" y="3.7" width="7.6" height="1.5" fill="#fff"/><rect x="26.7" y="3.7" width="7.6" height="1.5" fill="#fff"/><rect x="38.7" y="3.7" width="7.6" height="1.5" fill="#fff"/><rect x="50.7" y="3.7" width="7.6" height="1.5" fill="#fff"/><rect x="2.7" y="12.7" width="7.6" height="1.5" fill="#000"/><rect x="14.7" y="12.7" width="7.6" height="1.5" fill="#000"/><rect x="26.7" y="12.7" width="7.6" height="1.5" fill="#000"/><rect x="38.7" y="12.7" width="7.6" height="1.5" fill="#000"/><rect x="50.7" y="12.7" width="7.6" height="1.5" fill="#000"/><rect x="2.7" y="21.7" width="7.6" height="1.5" fill="#000"/><rect x="14.7" y="21.7" width="7.6" height="1.5" fill="#000"/><rect x="26.7" y="21.7" width="7.6" height="1.5" fill="#000"/><rect x="38.7" y="21.7" width="7.6" height="1.5" fill="#000"/><rect x="50.7" y="21.7" width="7.6" height="1.5" fill="#000"/><rect x="2.7" y="30.7" width="7.6" height="1.5" fill="#000"/><rect x="14.7" y="30.7" width="7.6" height="1.5" fill="#000"/><rect x="26.7" y="30.7" width="7.6" height="1.5" fill="#000"/><rect x="38.7" y="30.7" width="7.6" height="1.5" fill="#000"/><rect x="50.7" y="30.7" width="7.6" height="1.5" fill="#000"/><rect x="2.7" y="39.7" width="7.6" height="1.5" fill="#000"/><rect x="14.7" y="39.7" width="7.6" height="1.5" fill="#000"/><rect x="26.7" y="39.7" width="7.6" height="1.5" fill="#000"/><rect x="38.7" y="39.7" width="7.6" height="1.5" fill="#000"/><rect x="50.7" y="39.7" width="7.6" height="1.5" fill="#000"/></svg></div>
<div class="a" style="left:779px;top:207px;width:61px;height:46px"><svg width="61" height="46"><rect x="0" y="0" width="61" height="46" fill="#fff"/><rect x="0" y="0" width="61" height="9" fill="#70ad47"/><rect x="0" y="9" width="61" height="1" fill="#70ad47"/><rect x="0" y="18" width="61" height="1" fill="#70ad47"/><rect x="0" y="27" width="61" height="1" fill="#70ad47"/><rect x="0" y="36" width="61" height="1" fill="#70ad47"/><rect x="0" y="45" width="61" height="1" fill="#70ad47"/><rect x="0" y="9" width="1" height="37" fill="#70ad47"/><rect x="12" y="9" width="1" height="37" fill="#70ad47"/><rect x="24" y="9" width="1" height="37" fill="#70ad47"/><rect x="36" y="9" width="1" height="37" fill="#70ad47"/><rect x="48" y="9" width="1" height="37" fill="#70ad47"/><rect x="60" y="9" width="1" height="37" fill="#70ad47"/><rect x="0" y="0" width="1" height="46" fill="#70ad47"/><rect x="60" y="0" width="1" height="46" fill="#70ad47"/><rect x="0" y="0" width="61" height="1" fill="#70ad47"/><rect x="2.7" y="3.7" width="7.6" height="1.5" fill="#fff"/><rect x="14.7" y="3.7" width="7.6" height="1.5" fill="#fff"/><rect x="26.7" y="3.7" width="7.6" height="1.5" fill="#fff"/><rect x="38.7" y="3.7" width="7.6" height="1.5" fill="#fff"/><rect x="50.7" y="3.7" width="7.6" height="1.5" fill="#fff"/><rect x="2.7" y="12.7" width="7.6" height="1.5" fill="#000"/><rect x="14.7" y="12.7" width="7.6" height="1.5" fill="#000"/><rect x="26.7" y="12.7" width="7.6" height="1.5" fill="#000"/><rect x="38.7" y="12.7" width="7.6" height="1.5" fill="#000"/><rect x="50.7" y="12.7" width="7.6" height="1.5" fill="#000"/><rect x="2.7" y="21.7" width="7.6" height="1.5" fill="#000"/><rect x="14.7" y="21.7" width="7.6" height="1.5" fill="#000"/><rect x="26.7" y="21.7" width="7.6" height="1.5" fill="#000"/><rect x="38.7" y="21.7" width="7.6" height="1.5" fill="#000"/><rect x="50.7" y="21.7" width="7.6" height="1.5" fill="#000"/><rect x="2.7" y="30.7" width="7.6" height="1.5" fill="#000"/><rect x="14.7" y="30.7" width="7.6" height="1.5" fill="#000"/><rect x="26.7" y="30.7" width="7.6" height="1.5" fill="#000"/><rect x="38.7" y="30.7" width="7.6" height="1.5" fill="#000"/><rect x="50.7" y="30.7" width="7.6" height="1.5" fill="#000"/><rect x="2.7" y="39.7" width="7.6" height="1.5" fill="#000"/><rect x="14.7" y="39.7" width="7.6" height="1.5" fill="#000"/><rect x="26.7" y="39.7" width="7.6" height="1.5" fill="#000"/><rect x="38.7" y="39.7" width="7.6" height="1.5" fill="#000"/><rect x="50.7" y="39.7" width="7.6" height="1.5" fill="#000"/></svg></div>
<div class="a" style="left:848px;top:207px;width:61px;height:46px"><svg width="61" height="46"><rect x="0" y="0" width="61" height="46" fill="#fff"/><rect x="0" y="9" width="12" height="9" fill="#d9d9d9"/><rect x="12" y="9" width="12" height="9" fill="#d9d9d9"/><rect x="24" y="9" width="12" height="9" fill="#d9d9d9"/><rect x="36" y="9" width="12" height="9" fill="#d9d9d9"/><rect x="48" y="9" width="12" height="9" fill="#d9d9d9"/><rect x="0" y="18" width="12" height="9" fill="#d9d9d9"/><rect x="24" y="18" width="12" height="9" fill="#d9d9d9"/><rect x="48" y="18" width="12" height="9" fill="#d9d9d9"/><rect x="0" y="27" width="12" height="9" fill="#d9d9d9"/><rect x="12" y="27" width="12" height="9" fill="#d9d9d9"/><rect x="24" y="27" width="12" height="9" fill="#d9d9d9"/><rect x="36" y="27" width="12" height="9" fill="#d9d9d9"/><rect x="48" y="27" width="12" height="9" fill="#d9d9d9"/><rect x="0" y="36" width="12" height="9" fill="#d9d9d9"/><rect x="24" y="36" width="12" height="9" fill="#d9d9d9"/><rect x="48" y="36" width="12" height="9" fill="#d9d9d9"/><rect x="0" y="0" width="61" height="1" fill="#000000"/><rect x="0" y="9" width="61" height="1" fill="#000000"/><rect x="0" y="18" width="61" height="1" fill="#000000"/><rect x="0" y="27" width="61" height="1" fill="#000000"/><rect x="0" y="36" width="61" height="1" fill="#000000"/><rect x="0" y="45" width="61" height="1" fill="#000000"/><rect x="0" y="0" width="1" height="46" fill="#000000"/><rect x="12" y="0" width="1" height="46" fill="#000000"/><rect x="24" y="0" width="1" height="46" fill="#000000"/><rect x="36" y="0" width="1" height="46" fill="#000000"/><rect x="48" y="0" width="1" height="46" fill="#000000"/><rect x="60" y="0" width="1" height="46" fill="#000000"/><rect x="2.7" y="3.7" width="7.6" height="1.5" fill="#000"/><rect x="14.7" y="3.7" width="7.6" height="1.5" fill="#000"/><rect x="26.7" y="3.7" width="7.6" height="1.5" fill="#000"/><rect x="38.7" y="3.7" width="7.6" height="1.5" fill="#000"/><rect x="50.7" y="3.7" width="7.6" height="1.5" fill="#000"/><rect x="2.7" y="12.7" width="7.6" height="1.5" fill="#000"/><rect x="14.7" y="12.7" width="7.6" height="1.5" fill="#000"/><rect x="26.7" y="12.7" width="7.6" height="1.5" fill="#000"/><rect x="38.7" y="12.7" width="7.6" height="1.5" fill="#000"/><rect x="50.7" y="12.7" width="7.6" height="1.5" fill="#000"/><rect x="2.7" y="21.7" width="7.6" height="1.5" fill="#000"/><rect x="14.7" y="21.7" width="7.6" height="1.5" fill="#000"/><rect x="26.7" y="21.7" width="7.6" height="1.5" fill="#000"/><rect x="38.7" y="21.7" width="7.6" height="1.5" fill="#000"/><rect x="50.7" y="21.7" width="7.6" height="1.5" fill="#000"/><rect x="2.7" y="30.7" width="7.6" height="1.5" fill="#000"/><rect x="14.7" y="30.7" width="7.6" height="1.5" fill="#000"/><rect x="26.7" y="30.7" width="7.6" height="1.5" fill="#000"/><rect x="38.7" y="30.7" width="7.6" height="1.5" fill="#000"/><rect x="50.7" y="30.7" width="7.6" height="1.5" fill="#000"/><rect x="2.7" y="39.7" width="7.6" height="1.5" fill="#000"/><rect x="14.7" y="39.7" width="7.6" height="1.5" fill="#000"/><rect x="26.7" y="39.7" width="7.6" height="1.5" fill="#000"/><rect x="38.7" y="39.7" width="7.6" height="1.5" fill="#000"/><rect x="50.7" y="39.7" width="7.6" height="1.5" fill="#000"/></svg></div>
<div class="a" style="left:917px;top:207px;width:61px;height:46px"><svg width="61" height="46"><rect x="0" y="0" width="61" height="46" fill="#fff"/><rect x="0" y="9" width="12" height="9" fill="#ddebf7"/><rect x="12" y="9" width="12" height="9" fill="#ddebf7"/><rect x="24" y="9" width="12" height="9" fill="#ddebf7"/><rect x="36" y="9" width="12" height="9" fill="#ddebf7"/><rect x="48" y="9" width="12" height="9" fill="#ddebf7"/><rect x="0" y="18" width="12" height="9" fill="#ddebf7"/><rect x="24" y="18" width="12" height="9" fill="#ddebf7"/><rect x="48" y="18" width="12" height="9" fill="#ddebf7"/><rect x="0" y="27" width="12" height="9" fill="#ddebf7"/><rect x="12" y="27" width="12" height="9" fill="#ddebf7"/><rect x="24" y="27" width="12" height="9" fill="#ddebf7"/><rect x="36" y="27" width="12" height="9" fill="#ddebf7"/><rect x="48" y="27" width="12" height="9" fill="#ddebf7"/><rect x="0" y="36" width="12" height="9" fill="#ddebf7"/><rect x="24" y="36" width="12" height="9" fill="#ddebf7"/><rect x="48" y="36" width="12" height="9" fill="#ddebf7"/><rect x="0" y="0" width="61" height="1" fill="#5b9bd5"/><rect x="0" y="9" width="61" height="1" fill="#5b9bd5"/><rect x="0" y="18" width="61" height="1" fill="#5b9bd5"/><rect x="0" y="27" width="61" height="1" fill="#5b9bd5"/><rect x="0" y="36" width="61" height="1" fill="#5b9bd5"/><rect x="0" y="45" width="61" height="1" fill="#5b9bd5"/><rect x="0" y="0" width="1" height="46" fill="#5b9bd5"/><rect x="12" y="0" width="1" height="46" fill="#5b9bd5"/><rect x="24" y="0" width="1" height="46" fill="#5b9bd5"/><rect x="36" y="0" width="1" height="46" fill="#5b9bd5"/><rect x="48" y="0" width="1" height="46" fill="#5b9bd5"/><rect x="60" y="0" width="1" height="46" fill="#5b9bd5"/><rect x="2.7" y="3.7" width="7.6" height="1.5" fill="#000"/><rect x="14.7" y="3.7" width="7.6" height="1.5" fill="#000"/><rect x="26.7" y="3.7" width="7.6" height="1.5" fill="#000"/><rect x="38.7" y="3.7" width="7.6" height="1.5" fill="#000"/><rect x="50.7" y="3.7" width="7.6" height="1.5" fill="#000"/><rect x="2.7" y="12.7" width="7.6" height="1.5" fill="#000"/><rect x="14.7" y="12.7" width="7.6" height="1.5" fill="#000"/><rect x="26.7" y="12.7" width="7.6" height="1.5" fill="#000"/><rect x="38.7" y="12.7" width="7.6" height="1.5" fill="#000"/><rect x="50.7" y="12.7" width="7.6" height="1.5" fill="#000"/><rect x="2.7" y="21.7" width="7.6" height="1.5" fill="#000"/><rect x="14.7" y="21.7" width="7.6" height="1.5" fill="#000"/><rect x="26.7" y="21.7" width="7.6" height="1.5" fill="#000"/><rect x="38.7" y="21.7" width="7.6" height="1.5" fill="#000"/><rect x="50.7" y="21.7" width="7.6" height="1.5" fill="#000"/><rect x="2.7" y="30.7" width="7.6" height="1.5" fill="#000"/><rect x="14.7" y="30.7" width="7.6" height="1.5" fill="#000"/><rect x="26.7" y="30.7" width="7.6" height="1.5" fill="#000"/><rect x="38.7" y="30.7" width="7.6" height="1.5" fill="#000"/><rect x="50.7" y="30.7" width="7.6" height="1.5" fill="#000"/><rect x="2.7" y="39.7" width="7.6" height="1.5" fill="#000"/><rect x="14.7" y="39.7" width="7.6" height="1.5" fill="#000"/><rect x="26.7" y="39.7" width="7.6" height="1.5" fill="#000"/><rect x="38.7" y="39.7" width="7.6" height="1.5" fill="#000"/><rect x="50.7" y="39.7" width="7.6" height="1.5" fill="#000"/></svg></div>
<div class="a" style="left:986px;top:207px;width:61px;height:46px"><svg width="61" height="46"><rect x="0" y="0" width="61" height="46" fill="#fff"/><rect x="0" y="9" width="12" height="9" fill="#fce4d6"/><rect x="12" y="9" width="12" height="9" fill="#fce4d6"/><rect x="24" y="9" width="12" height="9" fill="#fce4d6"/><rect x="36" y="9" width="12" height="9" fill="#fce4d6"/><rect x="48" y="9" width="12" height="9" fill="#fce4d6"/><rect x="0" y="18" width="12" height="9" fill="#fce4d6"/><rect x="24" y="18" width="12" height="9" fill="#fce4d6"/><rect x="48" y="18" width="12" height="9" fill="#fce4d6"/><rect x="0" y="27" width="12" height="9" fill="#fce4d6"/><rect x="12" y="27" width="12" height="9" fill="#fce4d6"/><rect x="24" y="27" width="12" height="9" fill="#fce4d6"/><rect x="36" y="27" width="12" height="9" fill="#fce4d6"/><rect x="48" y="27" width="12" height="9" fill="#fce4d6"/><rect x="0" y="36" width="12" height="9" fill="#fce4d6"/><rect x="24" y="36" width="12" height="9" fill="#fce4d6"/><rect x="48" y="36" width="12" height="9" fill="#fce4d6"/><rect x="0" y="0" width="61" height="1" fill="#ed7d31"/><rect x="0" y="9" width="61" height="1" fill="#ed7d31"/><rect x="0" y="18" width="61" height="1" fill="#ed7d31"/><rect x="0" y="27" width="61" height="1" fill="#ed7d31"/><rect x="0" y="36" width="61" height="1" fill="#ed7d31"/><rect x="0" y="45" width="61" height="1" fill="#ed7d31"/><rect x="0" y="0" width="1" height="46" fill="#ed7d31"/><rect x="12" y="0" width="1" height="46" fill="#ed7d31"/><rect x="24" y="0" width="1" height="46" fill="#ed7d31"/><rect x="36" y="0" width="1" height="46" fill="#ed7d31"/><rect x="48" y="0" width="1" height="46" fill="#ed7d31"/><rect x="60" y="0" width="1" height="46" fill="#ed7d31"/><rect x="2.7" y="3.7" width="7.6" height="1.5" fill="#000"/><rect x="14.7" y="3.7" width="7.6" height="1.5" fill="#000"/><rect x="26.7" y="3.7" width="7.6" height="1.5" fill="#000"/><rect x="38.7" y="3.7" width="7.6" height="1.5" fill="#000"/><rect x="50.7" y="3.7" width="7.6" height="1.5" fill="#000"/><rect x="2.7" y="12.7" width="7.6" height="1.5" fill="#000"/><rect x="14.7" y="12.7" width="7.6" height="1.5" fill="#000"/><rect x="26.7" y="12.7" width="7.6" height="1.5" fill="#000"/><rect x="38.7" y="12.7" width="7.6" height="1.5" fill="#000"/><rect x="50.7" y="12.7" width="7.6" height="1.5" fill="#000"/><rect x="2.7" y="21.7" width="7.6" height="1.5" fill="#000"/><rect x="14.7" y="21.7" width="7.6" height="1.5" fill="#000"/><rect x="26.7" y="21.7" width="7.6" height="1.5" fill="#000"/><rect x="38.7" y="21.7" width="7.6" height="1.5" fill="#000"/><rect x="50.7" y="21.7" width="7.6" height="1.5" fill="#000"/><rect x="2.7" y="30.7" width="7.6" height="1.5" fill="#000"/><rect x="14.7" y="30.7" width="7.6" height="1.5" fill="#000"/><rect x="26.7" y="30.7" width="7.6" height="1.5" fill="#000"/><rect x="38.7" y="30.7" width="7.6" height="1.5" fill="#000"/><rect x="50.7" y="30.7" width="7.6" height="1.5" fill="#000"/><rect x="2.7" y="39.7" width="7.6" height="1.5" fill="#000"/><rect x="14.7" y="39.7" width="7.6" height="1.5" fill="#000"/><rect x="26.7" y="39.7" width="7.6" height="1.5" fill="#000"/><rect x="38.7" y="39.7" width="7.6" height="1.5" fill="#000"/><rect x="50.7" y="39.7" width="7.6" height="1.5" fill="#000"/></svg></div>
<div class="a" style="left:1055px;top:207px;width:61px;height:46px"><svg width="61" height="46"><rect x="0" y="0" width="61" height="46" fill="#fff"/><rect x="0" y="9" width="12" height="9" fill="#ededed"/><rect x="12" y="9" width="12" height="9" fill="#ededed"/><rect x="24" y="9" width="12" height="9" fill="#ededed"/><rect x="36" y="9" width="12" height="9" fill="#ededed"/><rect x="48" y="9" width="12" height="9" fill="#ededed"/><rect x="0" y="18" width="12" height="9" fill="#ededed"/><rect x="24" y="18" width="12" height="9" fill="#ededed"/><rect x="48" y="18" width="12" height="9" fill="#ededed"/><rect x="0" y="27" width="12" height="9" fill="#ededed"/><rect x="12" y="27" width="12" height="9" fill="#ededed"/><rect x="24" y="27" width="12" height="9" fill="#ededed"/><rect x="36" y="27" width="12" height="9" fill="#ededed"/><rect x="48" y="27" width="12" height="9" fill="#ededed"/><rect x="0" y="36" width="12" height="9" fill="#ededed"/><rect x="24" y="36" width="12" height="9" fill="#ededed"/><rect x="48" y="36" width="12" height="9" fill="#ededed"/><rect x="0" y="0" width="61" height="1" fill="#a5a5a5"/><rect x="0" y="9" width="61" height="1" fill="#a5a5a5"/><rect x="0" y="18" width="61" height="1" fill="#a5a5a5"/><rect x="0" y="27" width="61" height="1" fill="#a5a5a5"/><rect x="0" y="36" width="61" height="1" fill="#a5a5a5"/><rect x="0" y="45" width="61" height="1" fill="#a5a5a5"/><rect x="0" y="0" width="1" height="46" fill="#a5a5a5"/><rect x="12" y="0" width="1" height="46" fill="#a5a5a5"/><rect x="24" y="0" width="1" height="46" fill="#a5a5a5"/><rect x="36" y="0" width="1" height="46" fill="#a5a5a5"/><rect x="48" y="0" width="1" height="46" fill="#a5a5a5"/><rect x="60" y="0" width="1" height="46" fill="#a5a5a5"/><rect x="2.7" y="3.7" width="7.6" height="1.5" fill="#000"/><rect x="14.7" y="3.7" width="7.6" height="1.5" fill="#000"/><rect x="26.7" y="3.7" width="7.6" height="1.5" fill="#000"/><rect x="38.7" y="3.7" width="7.6" height="1.5" fill="#000"/><rect x="50.7" y="3.7" width="7.6" height="1.5" fill="#000"/><rect x="2.7" y="12.7" width="7.6" height="1.5" fill="#000"/><rect x="14.7" y="12.7" width="7.6" height="1.5" fill="#000"/><rect x="26.7" y="12.7" width="7.6" height="1.5" fill="#000"/><rect x="38.7" y="12.7" width="7.6" height="1.5" fill="#000"/><rect x="50.7" y="12.7" width="7.6" height="1.5" fill="#000"/><rect x="2.7" y="21.7" width="7.6" height="1.5" fill="#000"/><rect x="14.7" y="21.7" width="7.6" height="1.5" fill="#000"/><rect x="26.7" y="21.7" width="7.6" height="1.5" fill="#000"/><rect x="38.7" y="21.7" width="7.6" height="1.5" fill="#000"/><rect x="50.7" y="21.7" width="7.6" height="1.5" fill="#000"/><rect x="2.7" y="30.7" width="7.6" height="1.5" fill="#000"/><rect x="14.7" y="30.7" width="7.6" height="1.5" fill="#000"/><rect x="26.7" y="30.7" width="7.6" height="1.5" fill="#000"/><rect x="38.7" y="30.7" width="7.6" height="1.5" fill="#000"/><rect x="50.7" y="30.7" width="7.6" height="1.5" fill="#000"/><rect x="2.7" y="39.7" width="7.6" height="1.5" fill="#000"/><rect x="14.7" y="39.7" width="7.6" height="1.5" fill="#000"/><rect x="26.7" y="39.7" width="7.6" height="1.5" fill="#000"/><rect x="38.7" y="39.7" width="7.6" height="1.5" fill="#000"/><rect x="50.7" y="39.7" width="7.6" height="1.5" fill="#000"/></svg></div>
<div class="a" style="left:1124px;top:207px;width:61px;height:46px"><svg width="61" height="46"><rect x="0" y="0" width="61" height="46" fill="#fff"/><rect x="0" y="9" width="12" height="9" fill="#fff2cc"/><rect x="12" y="9" width="12" height="9" fill="#fff2cc"/><rect x="24" y="9" width="12" height="9" fill="#fff2cc"/><rect x="36" y="9" width="12" height="9" fill="#fff2cc"/><rect x="48" y="9" width="12" height="9" fill="#fff2cc"/><rect x="0" y="18" width="12" height="9" fill="#fff2cc"/><rect x="24" y="18" width="12" height="9" fill="#fff2cc"/><rect x="48" y="18" width="12" height="9" fill="#fff2cc"/><rect x="0" y="27" width="12" height="9" fill="#fff2cc"/><rect x="12" y="27" width="12" height="9" fill="#fff2cc"/><rect x="24" y="27" width="12" height="9" fill="#fff2cc"/><rect x="36" y="27" width="12" height="9" fill="#fff2cc"/><rect x="48" y="27" width="12" height="9" fill="#fff2cc"/><rect x="0" y="36" width="12" height="9" fill="#fff2cc"/><rect x="24" y="36" width="12" height="9" fill="#fff2cc"/><rect x="48" y="36" width="12" height="9" fill="#fff2cc"/><rect x="0" y="0" width="61" height="1" fill="#ffc000"/><rect x="0" y="9" width="61" height="1" fill="#ffc000"/><rect x="0" y="18" width="61" height="1" fill="#ffc000"/><rect x="0" y="27" width="61" height="1" fill="#ffc000"/><rect x="0" y="36" width="61" height="1" fill="#ffc000"/><rect x="0" y="45" width="61" height="1" fill="#ffc000"/><rect x="0" y="0" width="1" height="46" fill="#ffc000"/><rect x="12" y="0" width="1" height="46" fill="#ffc000"/><rect x="24" y="0" width="1" height="46" fill="#ffc000"/><rect x="36" y="0" width="1" height="46" fill="#ffc000"/><rect x="48" y="0" width="1" height="46" fill="#ffc000"/><rect x="60" y="0" width="1" height="46" fill="#ffc000"/><rect x="2.7" y="3.7" width="7.6" height="1.5" fill="#000"/><rect x="14.7" y="3.7" width="7.6" height="1.5" fill="#000"/><rect x="26.7" y="3.7" width="7.6" height="1.5" fill="#000"/><rect x="38.7" y="3.7" width="7.6" height="1.5" fill="#000"/><rect x="50.7" y="3.7" width="7.6" height="1.5" fill="#000"/><rect x="2.7" y="12.7" width="7.6" height="1.5" fill="#000"/><rect x="14.7" y="12.7" width="7.6" height="1.5" fill="#000"/><rect x="26.7" y="12.7" width="7.6" height="1.5" fill="#000"/><rect x="38.7" y="12.7" width="7.6" height="1.5" fill="#000"/><rect x="50.7" y="12.7" width="7.6" height="1.5" fill="#000"/><rect x="2.7" y="21.7" width="7.6" height="1.5" fill="#000"/><rect x="14.7" y="21.7" width="7.6" height="1.5" fill="#000"/><rect x="26.7" y="21.7" width="7.6" height="1.5" fill="#000"/><rect x="38.7" y="21.7" width="7.6" height="1.5" fill="#000"/><rect x="50.7" y="21.7" width="7.6" height="1.5" fill="#000"/><rect x="2.7" y="30.7" width="7.6" height="1.5" fill="#000"/><rect x="14.7" y="30.7" width="7.6" height="1.5" fill="#000"/><rect x="26.7" y="30.7" width="7.6" height="1.5" fill="#000"/><rect x="38.7" y="30.7" width="7.6" height="1.5" fill="#000"/><rect x="50.7" y="30.7" width="7.6" height="1.5" fill="#000"/><rect x="2.7" y="39.7" width="7.6" height="1.5" fill="#000"/><rect x="14.7" y="39.7" width="7.6" height="1.5" fill="#000"/><rect x="26.7" y="39.7" width="7.6" height="1.5" fill="#000"/><rect x="38.7" y="39.7" width="7.6" height="1.5" fill="#000"/><rect x="50.7" y="39.7" width="7.6" height="1.5" fill="#000"/></svg></div>
<div class="a" style="left:1193px;top:207px;width:61px;height:46px"><svg width="61" height="46"><rect x="0" y="0" width="61" height="46" fill="#fff"/><rect x="0" y="9" width="12" height="9" fill="#d9e1f2"/><rect x="12" y="9" width="12" height="9" fill="#d9e1f2"/><rect x="24" y="9" width="12" height="9" fill="#d9e1f2"/><rect x="36" y="9" width="12" height="9" fill="#d9e1f2"/><rect x="48" y="9" width="12" height="9" fill="#d9e1f2"/><rect x="0" y="18" width="12" height="9" fill="#d9e1f2"/><rect x="24" y="18" width="12" height="9" fill="#d9e1f2"/><rect x="48" y="18" width="12" height="9" fill="#d9e1f2"/><rect x="0" y="27" width="12" height="9" fill="#d9e1f2"/><rect x="12" y="27" width="12" height="9" fill="#d9e1f2"/><rect x="24" y="27" width="12" height="9" fill="#d9e1f2"/><rect x="36" y="27" width="12" height="9" fill="#d9e1f2"/><rect x="48" y="27" width="12" height="9" fill="#d9e1f2"/><rect x="0" y="36" width="12" height="9" fill="#d9e1f2"/><rect x="24" y="36" width="12" height="9" fill="#d9e1f2"/><rect x="48" y="36" width="12" height="9" fill="#d9e1f2"/><rect x="0" y="0" width="61" height="1" fill="#4472c4"/><rect x="0" y="9" width="61" height="1" fill="#4472c4"/><rect x="0" y="18" width="61" height="1" fill="#4472c4"/><rect x="0" y="27" width="61" height="1" fill="#4472c4"/><rect x="0" y="36" width="61" height="1" fill="#4472c4"/><rect x="0" y="45" width="61" height="1" fill="#4472c4"/><rect x="0" y="0" width="1" height="46" fill="#4472c4"/><rect x="12" y="0" width="1" height="46" fill="#4472c4"/><rect x="24" y="0" width="1" height="46" fill="#4472c4"/><rect x="36" y="0" width="1" height="46" fill="#4472c4"/><rect x="48" y="0" width="1" height="46" fill="#4472c4"/><rect x="60" y="0" width="1" height="46" fill="#4472c4"/><rect x="2.7" y="3.7" width="7.6" height="1.5" fill="#000"/><rect x="14.7" y="3.7" width="7.6" height="1.5" fill="#000"/><rect x="26.7" y="3.7" width="7.6" height="1.5" fill="#000"/><rect x="38.7" y="3.7" width="7.6" height="1.5" fill="#000"/><rect x="50.7" y="3.7" width="7.6" height="1.5" fill="#000"/><rect x="2.7" y="12.7" width="7.6" height="1.5" fill="#000"/><rect x="14.7" y="12.7" width="7.6" height="1.5" fill="#000"/><rect x="26.7" y="12.7" width="7.6" height="1.5" fill="#000"/><rect x="38.7" y="12.7" width="7.6" height="1.5" fill="#000"/><rect x="50.7" y="12.7" width="7.6" height="1.5" fill="#000"/><rect x="2.7" y="21.7" width="7.6" height="1.5" fill="#000"/><rect x="14.7" y="21.7" width="7.6" height="1.5" fill="#000"/><rect x="26.7" y="21.7" width="7.6" height="1.5" fill="#000"/><rect x="38.7" y="21.7" width="7.6" height="1.5" fill="#000"/><rect x="50.7" y="21.7" width="7.6" height="1.5" fill="#000"/><rect x="2.7" y="30.7" width="7.6" height="1.5" fill="#000"/><rect x="14.7" y="30.7" width="7.6" height="1.5" fill="#000"/><rect x="26.7" y="30.7" width="7.6" height="1.5" fill="#000"/><rect x="38.7" y="30.7" width="7.6" height="1.5" fill="#000"/><rect x="50.7" y="30.7" width="7.6" height="1.5" fill="#000"/><rect x="2.7" y="39.7" width="7.6" height="1.5" fill="#000"/><rect x="14.7" y="39.7" width="7.6" height="1.5" fill="#000"/><rect x="26.7" y="39.7" width="7.6" height="1.5" fill="#000"/><rect x="38.7" y="39.7" width="7.6" height="1.5" fill="#000"/><rect x="50.7" y="39.7" width="7.6" height="1.5" fill="#000"/></svg></div>
<div class="a" style="left:779px;top:261px;width:61px;height:46px"><svg width="61" height="46"><rect x="0" y="0" width="61" height="46" fill="#fff"/><rect x="0" y="9" width="12" height="9" fill="#e2efda"/><rect x="12" y="9" width="12" height="9" fill="#e2efda"/><rect x="24" y="9" width="12" height="9" fill="#e2efda"/><rect x="36" y="9" width="12" height="9" fill="#e2efda"/><rect x="48" y="9" width="12" height="9" fill="#e2efda"/><rect x="0" y="18" width="12" height="9" fill="#e2efda"/><rect x="24" y="18" width="12" height="9" fill="#e2efda"/><rect x="48" y="18" width="12" height="9" fill="#e2efda"/><rect x="0" y="27" width="12" height="9" fill="#e2efda"/><rect x="12" y="27" width="12" height="9" fill="#e2efda"/><rect x="24" y="27" width="12" height="9" fill="#e2efda"/><rect x="36" y="27" width="12" height="9" fill="#e2efda"/><rect x="48" y="27" width="12" height="9" fill="#e2efda"/><rect x="0" y="36" width="12" height="9" fill="#e2efda"/><rect x="24" y="36" width="12" height="9" fill="#e2efda"/><rect x="48" y="36" width="12" height="9" fill="#e2efda"/><rect x="0" y="0" width="61" height="1" fill="#70ad47"/><rect x="0" y="9" width="61" height="1" fill="#70ad47"/><rect x="0" y="18" width="61" height="1" fill="#70ad47"/><rect x="0" y="27" width="61" height="1" fill="#70ad47"/><rect x="0" y="36" width="61" height="1" fill="#70ad47"/><rect x="0" y="45" width="61" height="1" fill="#70ad47"/><rect x="0" y="0" width="1" height="46" fill="#70ad47"/><rect x="12" y="0" width="1" height="46" fill="#70ad47"/><rect x="24" y="0" width="1" height="46" fill="#70ad47"/><rect x="36" y="0" width="1" height="46" fill="#70ad47"/><rect x="48" y="0" width="1" height="46" fill="#70ad47"/><rect x="60" y="0" width="1" height="46" fill="#70ad47"/><rect x="2.7" y="3.7" width="7.6" height="1.5" fill="#000"/><rect x="14.7" y="3.7" width="7.6" height="1.5" fill="#000"/><rect x="26.7" y="3.7" width="7.6" height="1.5" fill="#000"/><rect x="38.7" y="3.7" width="7.6" height="1.5" fill="#000"/><rect x="50.7" y="3.7" width="7.6" height="1.5" fill="#000"/><rect x="2.7" y="12.7" width="7.6" height="1.5" fill="#000"/><rect x="14.7" y="12.7" width="7.6" height="1.5" fill="#000"/><rect x="26.7" y="12.7" width="7.6" height="1.5" fill="#000"/><rect x="38.7" y="12.7" width="7.6" height="1.5" fill="#000"/><rect x="50.7" y="12.7" width="7.6" height="1.5" fill="#000"/><rect x="2.7" y="21.7" width="7.6" height="1.5" fill="#000"/><rect x="14.7" y="21.7" width="7.6" height="1.5" fill="#000"/><rect x="26.7" y="21.7" width="7.6" height="1.5" fill="#000"/><rect x="38.7" y="21.7" width="7.6" height="1.5" fill="#000"/><rect x="50.7" y="21.7" width="7.6" height="1.5" fill="#000"/><rect x="2.7" y="30.7" width="7.6" height="1.5" fill="#000"/><rect x="14.7" y="30.7" width="7.6" height="1.5" fill="#000"/><rect x="26.7" y="30.7" width="7.6" height="1.5" fill="#000"/><rect x="38.7" y="30.7" width="7.6" height="1.5" fill="#000"/><rect x="50.7" y="30.7" width="7.6" height="1.5" fill="#000"/><rect x="2.7" y="39.7" width="7.6" height="1.5" fill="#000"/><rect x="14.7" y="39.7" width="7.6" height="1.5" fill="#000"/><rect x="26.7" y="39.7" width="7.6" height="1.5" fill="#000"/><rect x="38.7" y="39.7" width="7.6" height="1.5" fill="#000"/><rect x="50.7" y="39.7" width="7.6" height="1.5" fill="#000"/></svg></div>
<div style="position:absolute;left:913px;top:333px;width:69px;height:54px;background:#c8c8cc"></div>
<div style="position:absolute;left:775px;top:387px;width:69px;height:54px;background:#d6d6d6"></div>
<div class="a" style="left:779px;top:337px;width:61px;height:46px"><svg width="61" height="46"><rect x="0" y="0" width="61" height="46" fill="#fff"/><rect x="0" y="0" width="61" height="9" fill="#000000"/><rect x="0" y="9" width="12" height="9" fill="#d9d9d9"/><rect x="12" y="9" width="12" height="9" fill="#d9d9d9"/><rect x="24" y="9" width="12" height="9" fill="#d9d9d9"/><rect x="36" y="9" width="12" height="9" fill="#d9d9d9"/><rect x="48" y="9" width="12" height="9" fill="#d9d9d9"/><rect x="0" y="18" width="12" height="9" fill="#d9d9d9"/><rect x="24" y="18" width="12" height="9" fill="#d9d9d9"/><rect x="48" y="18" width="12" height="9" fill="#d9d9d9"/><rect x="0" y="27" width="12" height="9" fill="#d9d9d9"/><rect x="12" y="27" width="12" height="9" fill="#d9d9d9"/><rect x="24" y="27" width="12" height="9" fill="#d9d9d9"/><rect x="36" y="27" width="12" height="9" fill="#d9d9d9"/><rect x="48" y="27" width="12" height="9" fill="#d9d9d9"/><rect x="0" y="36" width="12" height="9" fill="#d9d9d9"/><rect x="24" y="36" width="12" height="9" fill="#d9d9d9"/><rect x="48" y="36" width="12" height="9" fill="#d9d9d9"/><rect x="0" y="9" width="61" height="1" fill="#000"/><rect x="0" y="18" width="61" height="1" fill="#000"/><rect x="0" y="27" width="61" height="1" fill="#000"/><rect x="0" y="36" width="61" height="1" fill="#000"/><rect x="0" y="45" width="61" height="1" fill="#000"/><rect x="0" y="9" width="1" height="37" fill="#000"/><rect x="60" y="9" width="1" height="37" fill="#000"/><rect x="0" y="0" width="1" height="46" fill="#000"/><rect x="60" y="0" width="1" height="46" fill="#000"/><rect x="0" y="0" width="61" height="1" fill="#000"/><rect x="0" y="45" width="61" height="1" fill="#000"/><rect x="2.7" y="3.7" width="7.6" height="1.5" fill="#fff"/><rect x="14.7" y="3.7" width="7.6" height="1.5" fill="#fff"/><rect x="26.7" y="3.7" width="7.6" height="1.5" fill="#fff"/><rect x="38.7" y="3.7" width="7.6" height="1.5" fill="#fff"/><rect x="50.7" y="3.7" width="7.6" height="1.5" fill="#fff"/><rect x="2.7" y="12.7" width="7.6" height="1.5" fill="#000"/><rect x="14.7" y="12.7" width="7.6" height="1.5" fill="#000"/><rect x="26.7" y="12.7" width="7.6" height="1.5" fill="#000"/><rect x="38.7" y="12.7" width="7.6" height="1.5" fill="#000"/><rect x="50.7" y="12.7" width="7.6" height="1.5" fill="#000"/><rect x="2.7" y="21.7" width="7.6" height="1.5" fill="#000"/><rect x="14.7" y="21.7" width="7.6" height="1.5" fill="#000"/><rect x="26.7" y="21.7" width="7.6" height="1.5" fill="#000"/><rect x="38.7" y="21.7" width="7.6" height="1.5" fill="#000"/><rect x="50.7" y="21.7" width="7.6" height="1.5" fill="#000"/><rect x="2.7" y="30.7" width="7.6" height="1.5" fill="#000"/><rect x="14.7" y="30.7" width="7.6" height="1.5" fill="#000"/><rect x="26.7" y="30.7" width="7.6" height="1.5" fill="#000"/><rect x="38.7" y="30.7" width="7.6" height="1.5" fill="#000"/><rect x="50.7" y="30.7" width="7.6" height="1.5" fill="#000"/><rect x="2.7" y="39.7" width="7.6" height="1.5" fill="#000"/><rect x="14.7" y="39.7" width="7.6" height="1.5" fill="#000"/><rect x="26.7" y="39.7" width="7.6" height="1.5" fill="#000"/><rect x="38.7" y="39.7" width="7.6" height="1.5" fill="#000"/><rect x="50.7" y="39.7" width="7.6" height="1.5" fill="#000"/></svg></div>
<div class="a" style="left:848px;top:337px;width:61px;height:46px"><svg width="61" height="46"><rect x="0" y="0" width="61" height="46" fill="#fff"/><rect x="0" y="0" width="61" height="9" fill="#5b9bd5"/><rect x="0" y="9" width="12" height="9" fill="#ddebf7"/><rect x="12" y="9" width="12" height="9" fill="#ddebf7"/><rect x="24" y="9" width="12" height="9" fill="#ddebf7"/><rect x="36" y="9" width="12" height="9" fill="#ddebf7"/><rect x="48" y="9" width="12" height="9" fill="#ddebf7"/><rect x="0" y="18" width="12" height="9" fill="#ddebf7"/><rect x="24" y="18" width="12" height="9" fill="#ddebf7"/><rect x="48" y="18" width="12" height="9" fill="#ddebf7"/><rect x="0" y="27" width="12" height="9" fill="#ddebf7"/><rect x="12" y="27" width="12" height="9" fill="#ddebf7"/><rect x="24" y="27" width="12" height="9" fill="#ddebf7"/><rect x="36" y="27" width="12" height="9" fill="#ddebf7"/><rect x="48" y="27" width="12" height="9" fill="#ddebf7"/><rect x="0" y="36" width="12" height="9" fill="#ddebf7"/><rect x="24" y="36" width="12" height="9" fill="#ddebf7"/><rect x="48" y="36" width="12" height="9" fill="#ddebf7"/><rect x="0" y="9" width="61" height="1" fill="#9bc2e6"/><rect x="0" y="18" width="61" height="1" fill="#9bc2e6"/><rect x="0" y="27" width="61" height="1" fill="#9bc2e6"/><rect x="0" y="36" width="61" height="1" fill="#9bc2e6"/><rect x="0" y="45" width="61" height="1" fill="#9bc2e6"/><rect x="0" y="9" width="1" height="37" fill="#9bc2e6"/><rect x="60" y="9" width="1" height="37" fill="#9bc2e6"/><rect x="2.7" y="3.7" width="7.6" height="1.5" fill="#fff"/><rect x="14.7" y="3.7" width="7.6" height="1.5" fill="#fff"/><rect x="26.7" y="3.7" width="7.6" height="1.5" fill="#fff"/><rect x="38.7" y="3.7" width="7.6" height="1.5" fill="#fff"/><rect x="50.7" y="3.7" width="7.6" height="1.5" fill="#fff"/><rect x="2.7" y="12.7" width="7.6" height="1.5" fill="#000"/><rect x="14.7" y="12.7" width="7.6" height="1.5" fill="#000"/><rect x="26.7" y="12.7" width="7.6" height="1.5" fill="#000"/><rect x="38.7" y="12.7" width="7.6" height="1.5" fill="#000"/><rect x="50.7" y="12.7" width="7.6" height="1.5" fill="#000"/><rect x="2.7" y="21.7" width="7.6" height="1.5" fill="#000"/><rect x="14.7" y="21.7" width="7.6" height="1.5" fill="#000"/><rect x="26.7" y="21.7" width="7.6" height="1.5" fill="#000"/><rect x="38.7" y="21.7" width="7.6" height="1.5" fill="#000"/><rect x="50.7" y="21.7" width="7.6" height="1.5" fill="#000"/><rect x="2.7" y="30.7" width="7.6" height="1.5" fill="#000"/><rect x="14.7" y="30.7" width="7.6" height="1.5" fill="#000"/><rect x="26.7" y="30.7" width="7.6" height="1.5" fill="#000"/><rect x="38.7" y="30.7" width="7.6" height="1.5" fill="#000"/><rect x="50.7" y="30.7" width="7.6" height="1.5" fill="#000"/><rect x="2.7" y="39.7" width="7.6" height="1.5" fill="#000"/><rect x="14.7" y="39.7" width="7.6" height="1.5" fill="#000"/><rect x="26.7" y="39.7" width="7.6" height="1.5" fill="#000"/><rect x="38.7" y="39.7" width="7.6" height="1.5" fill="#000"/><rect x="50.7" y="39.7" width="7.6" height="1.5" fill="#000"/></svg></div>
<div class="a" style="left:917px;top:337px;width:61px;height:46px"><svg width="61" height="46"><rect x="0" y="0" width="61" height="46" fill="#fff"/><rect x="0" y="0" width="61" height="9" fill="#ed7d31"/><rect x="0" y="9" width="12" height="9" fill="#fce4d6"/><rect x="12" y="9" width="12" height="9" fill="#fce4d6"/><rect x="24" y="9" width="12" height="9" fill="#fce4d6"/><rect x="36" y="9" width="12" height="9" fill="#fce4d6"/><rect x="48" y="9" width="12" height="9" fill="#fce4d6"/><rect x="0" y="18" width="12" height="9" fill="#fce4d6"/><rect x="24" y="18" width="12" height="9" fill="#fce4d6"/><rect x="48" y="18" width="12" height="9" fill="#fce4d6"/><rect x="0" y="27" width="12" height="9" fill="#fce4d6"/><rect x="12" y="27" width="12" height="9" fill="#fce4d6"/><rect x="24" y="27" width="12" height="9" fill="#fce4d6"/><rect x="36" y="27" width="12" height="9" fill="#fce4d6"/><rect x="48" y="27" width="12" height="9" fill="#fce4d6"/><rect x="0" y="36" width="12" height="9" fill="#fce4d6"/><rect x="24" y="36" width="12" height="9" fill="#fce4d6"/><rect x="48" y="36" width="12" height="9" fill="#fce4d6"/><rect x="0" y="9" width="61" height="1" fill="#f4b084"/><rect x="0" y="18" width="61" height="1" fill="#f4b084"/><rect x="0" y="27" width="61" height="1" fill="#f4b084"/><rect x="0" y="36" width="61" height="1" fill="#f4b084"/><rect x="0" y="45" width="61" height="1" fill="#f4b084"/><rect x="0" y="9" width="1" height="37" fill="#f4b084"/><rect x="60" y="9" width="1" height="37" fill="#f4b084"/><rect x="2.7" y="3.7" width="7.6" height="1.5" fill="#fff"/><rect x="14.7" y="3.7" width="7.6" height="1.5" fill="#fff"/><rect x="26.7" y="3.7" width="7.6" height="1.5" fill="#fff"/><rect x="38.7" y="3.7" width="7.6" height="1.5" fill="#fff"/><rect x="50.7" y="3.7" width="7.6" height="1.5" fill="#fff"/><rect x="2.7" y="12.7" width="7.6" height="1.5" fill="#000"/><rect x="14.7" y="12.7" width="7.6" height="1.5" fill="#000"/><rect x="26.7" y="12.7" width="7.6" height="1.5" fill="#000"/><rect x="38.7" y="12.7" width="7.6" height="1.5" fill="#000"/><rect x="50.7" y="12.7" width="7.6" height="1.5" fill="#000"/><rect x="2.7" y="21.7" width="7.6" height="1.5" fill="#000"/><rect x="14.7" y="21.7" width="7.6" height="1.5" fill="#000"/><rect x="26.7" y="21.7" width="7.6" height="1.5" fill="#000"/><rect x="38.7" y="21.7" width="7.6" height="1.5" fill="#000"/><rect x="50.7" y="21.7" width="7.6" height="1.5" fill="#000"/><rect x="2.7" y="30.7" width="7.6" height="1.5" fill="#000"/><rect x="14.7" y="30.7" width="7.6" height="1.5" fill="#000"/><rect x="26.7" y="30.7" width="7.6" height="1.5" fill="#000"/><rect x="38.7" y="30.7" width="7.6" height="1.5" fill="#000"/><rect x="50.7" y="30.7" width="7.6" height="1.5" fill="#000"/><rect x="2.7" y="39.7" width="7.6" height="1.5" fill="#000"/><rect x="14.7" y="39.7" width="7.6" height="1.5" fill="#000"/><rect x="26.7" y="39.7" width="7.6" height="1.5" fill="#000"/><rect x="38.7" y="39.7" width="7.6" height="1.5" fill="#000"/><rect x="50.7" y="39.7" width="7.6" height="1.5" fill="#000"/></svg></div>
<div class="a" style="left:986px;top:337px;width:61px;height:46px"><svg width="61" height="46"><rect x="0" y="0" width="61" height="46" fill="#fff"/><rect x="0" y="0" width="61" height="9" fill="#a5a5a5"/><rect x="0" y="9" width="12" height="9" fill="#ededed"/><rect x="12" y="9" width="12" height="9" fill="#ededed"/><rect x="24" y="9" width="12" height="9" fill="#ededed"/><rect x="36" y="9" width="12" height="9" fill="#ededed"/><rect x="48" y="9" width="12" height="9" fill="#ededed"/><rect x="0" y="18" width="12" height="9" fill="#ededed"/><rect x="24" y="18" width="12" height="9" fill="#ededed"/><rect x="48" y="18" width="12" height="9" fill="#ededed"/><rect x="0" y="27" width="12" height="9" fill="#ededed"/><rect x="12" y="27" width="12" height="9" fill="#ededed"/><rect x="24" y="27" width="12" height="9" fill="#ededed"/><rect x="36" y="27" width="12" height="9" fill="#ededed"/><rect x="48" y="27" width="12" height="9" fill="#ededed"/><rect x="0" y="36" width="12" height="9" fill="#ededed"/><rect x="24" y="36" width="12" height="9" fill="#ededed"/><rect x="48" y="36" width="12" height="9" fill="#ededed"/><rect x="0" y="9" width="61" height="1" fill="#c9c9c9"/><rect x="0" y="18" width="61" height="1" fill="#c9c9c9"/><rect x="0" y="27" width="61" height="1" fill="#c9c9c9"/><rect x="0" y="36" width="61" height="1" fill="#c9c9c9"/><rect x="0" y="45" width="61" height="1" fill="#c9c9c9"/><rect x="0" y="9" width="1" height="37" fill="#c9c9c9"/><rect x="60" y="9" width="1" height="37" fill="#c9c9c9"/><rect x="2.7" y="3.7" width="7.6" height="1.5" fill="#fff"/><rect x="14.7" y="3.7" width="7.6" height="1.5" fill="#fff"/><rect x="26.7" y="3.7" width="7.6" height="1.5" fill="#fff"/><rect x="38.7" y="3.7" width="7.6" height="1.5" fill="#fff"/><rect x="50.7" y="3.7" width="7.6" height="1.5" fill="#fff"/><rect x="2.7" y="12.7" width="7.6" height="1.5" fill="#000"/><rect x="14.7" y="12.7" width="7.6" height="1.5" fill="#000"/><rect x="26.7" y="12.7" width="7.6" height="1.5" fill="#000"/><rect x="38.7" y="12.7" width="7.6" height="1.5" fill="#000"/><rect x="50.7" y="12.7" width="7.6" height="1.5" fill="#000"/><rect x="2.7" y="21.7" width="7.6" height="1.5" fill="#000"/><rect x="14.7" y="21.7" width="7.6" height="1.5" fill="#000"/><rect x="26.7" y="21.7" width="7.6" height="1.5" fill="#000"/><rect x="38.7" y="21.7" width="7.6" height="1.5" fill="#000"/><rect x="50.7" y="21.7" width="7.6" height="1.5" fill="#000"/><rect x="2.7" y="30.7" width="7.6" height="1.5" fill="#000"/><rect x="14.7" y="30.7" width="7.6" height="1.5" fill="#000"/><rect x="26.7" y="30.7" width="7.6" height="1.5" fill="#000"/><rect x="38.7" y="30.7" width="7.6" height="1.5" fill="#000"/><rect x="50.7" y="30.7" width="7.6" height="1.5" fill="#000"/><rect x="2.7" y="39.7" width="7.6" height="1.5" fill="#000"/><rect x="14.7" y="39.7" width="7.6" height="1.5" fill="#000"/><rect x="26.7" y="39.7" width="7.6" height="1.5" fill="#000"/><rect x="38.7" y="39.7" width="7.6" height="1.5" fill="#000"/><rect x="50.7" y="39.7" width="7.6" height="1.5" fill="#000"/></svg></div>
<div class="a" style="left:1055px;top:337px;width:61px;height:46px"><svg width="61" height="46"><rect x="0" y="0" width="61" height="46" fill="#fff"/><rect x="0" y="0" width="61" height="9" fill="#ffc000"/><rect x="0" y="9" width="12" height="9" fill="#fff2cc"/><rect x="12" y="9" width="12" height="9" fill="#fff2cc"/><rect x="24" y="9" width="12" height="9" fill="#fff2cc"/><rect x="36" y="9" width="12" height="9" fill="#fff2cc"/><rect x="48" y="9" width="12" height="9" fill="#fff2cc"/><rect x="0" y="18" width="12" height="9" fill="#fff2cc"/><rect x="24" y="18" width="12" height="9" fill="#fff2cc"/><rect x="48" y="18" width="12" height="9" fill="#fff2cc"/><rect x="0" y="27" width="12" height="9" fill="#fff2cc"/><rect x="12" y="27" width="12" height="9" fill="#fff2cc"/><rect x="24" y="27" width="12" height="9" fill="#fff2cc"/><rect x="36" y="27" width="12" height="9" fill="#fff2cc"/><rect x="48" y="27" width="12" height="9" fill="#fff2cc"/><rect x="0" y="36" width="12" height="9" fill="#fff2cc"/><rect x="24" y="36" width="12" height="9" fill="#fff2cc"/><rect x="48" y="36" width="12" height="9" fill="#fff2cc"/><rect x="0" y="9" width="61" height="1" fill="#ffd966"/><rect x="0" y="18" width="61" height="1" fill="#ffd966"/><rect x="0" y="27" width="61" height="1" fill="#ffd966"/><rect x="0" y="36" width="61" height="1" fill="#ffd966"/><rect x="0" y="45" width="61" height="1" fill="#ffd966"/><rect x="0" y="9" width="1" height="37" fill="#ffd966"/><rect x="60" y="9" width="1" height="37" fill="#ffd966"/><rect x="2.7" y="3.7" width="7.6" height="1.5" fill="#fff"/><rect x="14.7" y="3.7" width="7.6" height="1.5" fill="#fff"/><rect x="26.7" y="3.7" width="7.6" height="1.5" fill="#fff"/><rect x="38.7" y="3.7" width="7.6" height="1.5" fill="#fff"/><rect x="50.7" y="3.7" width="7.6" height="1.5" fill="#fff"/><rect x="2.7" y="12.7" width="7.6" height="1.5" fill="#000"/><rect x="14.7" y="12.7" width="7.6" height="1.5" fill="#000"/><rect x="26.7" y="12.7" width="7.6" height="1.5" fill="#000"/><rect x="38.7" y="12.7" width="7.6" height="1.5" fill="#000"/><rect x="50.7" y="12.7" width="7.6" height="1.5" fill="#000"/><rect x="2.7" y="21.7" width="7.6" height="1.5" fill="#000"/><rect x="14.7" y="21.7" width="7.6" height="1.5" fill="#000"/><rect x="26.7" y="21.7" width="7.6" height="1.5" fill="#000"/><rect x="38.7" y="21.7" width="7.6" height="1.5" fill="#000"/><rect x="50.7" y="21.7" width="7.6" height="1.5" fill="#000"/><rect x="2.7" y="30.7" width="7.6" height="1.5" fill="#000"/><rect x="14.7" y="30.7" width="7.6" height="1.5" fill="#000"/><rect x="26.7" y="30.7" width="7.6" height="1.5" fill="#000"/><rect x="38.7" y="30.7" width="7.6" height="1.5" fill="#000"/><rect x="50.7" y="30.7" width="7.6" height="1.5" fill="#000"/><rect x="2.7" y="39.7" width="7.6" height="1.5" fill="#000"/><rect x="14.7" y="39.7" width="7.6" height="1.5" fill="#000"/><rect x="26.7" y="39.7" width="7.6" height="1.5" fill="#000"/><rect x="38.7" y="39.7" width="7.6" height="1.5" fill="#000"/><rect x="50.7" y="39.7" width="7.6" height="1.5" fill="#000"/></svg></div>
<div class="a" style="left:1124px;top:337px;width:61px;height:46px"><svg width="61" height="46"><rect x="0" y="0" width="61" height="46" fill="#fff"/><rect x="0" y="0" width="61" height="9" fill="#4472c4"/><rect x="0" y="9" width="12" height="9" fill="#d9e1f2"/><rect x="12" y="9" width="12" height="9" fill="#d9e1f2"/><rect x="24" y="9" width="12" height="9" fill="#d9e1f2"/><rect x="36" y="9" width="12" height="9" fill="#d9e1f2"/><rect x="48" y="9" width="12" height="9" fill="#d9e1f2"/><rect x="0" y="18" width="12" height="9" fill="#d9e1f2"/><rect x="24" y="18" width="12" height="9" fill="#d9e1f2"/><rect x="48" y="18" width="12" height="9" fill="#d9e1f2"/><rect x="0" y="27" width="12" height="9" fill="#d9e1f2"/><rect x="12" y="27" width="12" height="9" fill="#d9e1f2"/><rect x="24" y="27" width="12" height="9" fill="#d9e1f2"/><rect x="36" y="27" width="12" height="9" fill="#d9e1f2"/><rect x="48" y="27" width="12" height="9" fill="#d9e1f2"/><rect x="0" y="36" width="12" height="9" fill="#d9e1f2"/><rect x="24" y="36" width="12" height="9" fill="#d9e1f2"/><rect x="48" y="36" width="12" height="9" fill="#d9e1f2"/><rect x="0" y="9" width="61" height="1" fill="#8ea9db"/><rect x="0" y="18" width="61" height="1" fill="#8ea9db"/><rect x="0" y="27" width="61" height="1" fill="#8ea9db"/><rect x="0" y="36" width="61" height="1" fill="#8ea9db"/><rect x="0" y="45" width="61" height="1" fill="#8ea9db"/><rect x="0" y="9" width="1" height="37" fill="#8ea9db"/><rect x="60" y="9" width="1" height="37" fill="#8ea9db"/><rect x="2.7" y="3.7" width="7.6" height="1.5" fill="#fff"/><rect x="14.7" y="3.7" width="7.6" height="1.5" fill="#fff"/><rect x="26.7" y="3.7" width="7.6" height="1.5" fill="#fff"/><rect x="38.7" y="3.7" width="7.6" height="1.5" fill="#fff"/><rect x="50.7" y="3.7" width="7.6" height="1.5" fill="#fff"/><rect x="2.7" y="12.7" width="7.6" height="1.5" fill="#000"/><rect x="14.7" y="12.7" width="7.6" height="1.5" fill="#000"/><rect x="26.7" y="12.7" width="7.6" height="1.5" fill="#000"/><rect x="38.7" y="12.7" width="7.6" height="1.5" fill="#000"/><rect x="50.7" y="12.7" width="7.6" height="1.5" fill="#000"/><rect x="2.7" y="21.7" width="7.6" height="1.5" fill="#000"/><rect x="14.7" y="21.7" width="7.6" height="1.5" fill="#000"/><rect x="26.7" y="21.7" width="7.6" height="1.5" fill="#000"/><rect x="38.7" y="21.7" width="7.6" height="1.5" fill="#000"/><rect x="50.7" y="21.7" width="7.6" height="1.5" fill="#000"/><rect x="2.7" y="30.7" width="7.6" height="1.5" fill="#000"/><rect x="14.7" y="30.7" width="7.6" height="1.5" fill="#000"/><rect x="26.7" y="30.7" width="7.6" height="1.5" fill="#000"/><rect x="38.7" y="30.7" width="7.6" height="1.5" fill="#000"/><rect x="50.7" y="30.7" width="7.6" height="1.5" fill="#000"/><rect x="2.7" y="39.7" width="7.6" height="1.5" fill="#000"/><rect x="14.7" y="39.7" width="7.6" height="1.5" fill="#000"/><rect x="26.7" y="39.7" width="7.6" height="1.5" fill="#000"/><rect x="38.7" y="39.7" width="7.6" height="1.5" fill="#000"/><rect x="50.7" y="39.7" width="7.6" height="1.5" fill="#000"/></svg></div>
<div class="a" style="left:1193px;top:337px;width:61px;height:46px"><svg width="61" height="46"><rect x="0" y="0" width="61" height="46" fill="#fff"/><rect x="0" y="0" width="61" height="9" fill="#70ad47"/><rect x="0" y="9" width="12" height="9" fill="#e2efda"/><rect x="12" y="9" width="12" height="9" fill="#e2efda"/><rect x="24" y="9" width="12" height="9" fill="#e2efda"/><rect x="36" y="9" width="12" height="9" fill="#e2efda"/><rect x="48" y="9" width="12" height="9" fill="#e2efda"/><rect x="0" y="18" width="12" height="9" fill="#e2efda"/><rect x="24" y="18" width="12" height="9" fill="#e2efda"/><rect x="48" y="18" width="12" height="9" fill="#e2efda"/><rect x="0" y="27" width="12" height="9" fill="#e2efda"/><rect x="12" y="27" width="12" height="9" fill="#e2efda"/><rect x="24" y="27" width="12" height="9" fill="#e2efda"/><rect x="36" y="27" width="12" height="9" fill="#e2efda"/><rect x="48" y="27" width="12" height="9" fill="#e2efda"/><rect x="0" y="36" width="12" height="9" fill="#e2efda"/><rect x="24" y="36" width="12" height="9" fill="#e2efda"/><rect x="48" y="36" width="12" height="9" fill="#e2efda"/><rect x="0" y="9" width="61" height="1" fill="#a9d08e"/><rect x="0" y="18" width="61" height="1" fill="#a9d08e"/><rect x="0" y="27" width="61" height="1" fill="#a9d08e"/><rect x="0" y="36" width="61" height="1" fill="#a9d08e"/><rect x="0" y="45" width="61" height="1" fill="#a9d08e"/><rect x="0" y="9" width="1" height="37" fill="#a9d08e"/><rect x="60" y="9" width="1" height="37" fill="#a9d08e"/><rect x="2.7" y="3.7" width="7.6" height="1.5" fill="#fff"/><rect x="14.7" y="3.7" width="7.6" height="1.5" fill="#fff"/><rect x="26.7" y="3.7" width="7.6" height="1.5" fill="#fff"/><rect x="38.7" y="3.7" width="7.6" height="1.5" fill="#fff"/><rect x="50.7" y="3.7" width="7.6" height="1.5" fill="#fff"/><rect x="2.7" y="12.7" width="7.6" height="1.5" fill="#000"/><rect x="14.7" y="12.7" width="7.6" height="1.5" fill="#000"/><rect x="26.7" y="12.7" width="7.6" height="1.5" fill="#000"/><rect x="38.7" y="12.7" width="7.6" height="1.5" fill="#000"/><rect x="50.7" y="12.7" width="7.6" height="1.5" fill="#000"/><rect x="2.7" y="21.7" width="7.6" height="1.5" fill="#000"/><rect x="14.7" y="21.7" width="7.6" height="1.5" fill="#000"/><rect x="26.7" y="21.7" width="7.6" height="1.5" fill="#000"/><rect x="38.7" y="21.7" width="7.6" height="1.5" fill="#000"/><rect x="50.7" y="21.7" width="7.6" height="1.5" fill="#000"/><rect x="2.7" y="30.7" width="7.6" height="1.5" fill="#000"/><rect x="14.7" y="30.7" width="7.6" height="1.5" fill="#000"/><rect x="26.7" y="30.7" width="7.6" height="1.5" fill="#000"/><rect x="38.7" y="30.7" width="7.6" height="1.5" fill="#000"/><rect x="50.7" y="30.7" width="7.6" height="1.5" fill="#000"/><rect x="2.7" y="39.7" width="7.6" height="1.5" fill="#000"/><rect x="14.7" y="39.7" width="7.6" height="1.5" fill="#000"/><rect x="26.7" y="39.7" width="7.6" height="1.5" fill="#000"/><rect x="38.7" y="39.7" width="7.6" height="1.5" fill="#000"/><rect x="50.7" y="39.7" width="7.6" height="1.5" fill="#000"/></svg></div>
<div class="a" style="left:779px;top:391px;width:61px;height:46px"><svg width="61" height="46"><rect x="0" y="0" width="61" height="46" fill="#fff"/><rect x="0" y="0" width="12" height="9" fill="#000000"/><rect x="12" y="0" width="12" height="9" fill="#000000"/><rect x="24" y="0" width="12" height="9" fill="#000000"/><rect x="36" y="0" width="12" height="9" fill="#000000"/><rect x="48" y="0" width="12" height="9" fill="#000000"/><rect x="0" y="9" width="12" height="9" fill="#000000"/><rect x="12" y="9" width="12" height="9" fill="#c8c8c8"/><rect x="24" y="9" width="12" height="9" fill="#c8c8c8"/><rect x="36" y="9" width="12" height="9" fill="#c8c8c8"/><rect x="48" y="9" width="12" height="9" fill="#000000"/><rect x="0" y="18" width="12" height="9" fill="#000000"/><rect x="12" y="18" width="12" height="9" fill="#eeeeee"/><rect x="24" y="18" width="12" height="9" fill="#c8c8c8"/><rect x="36" y="18" width="12" height="9" fill="#eeeeee"/><rect x="48" y="18" width="12" height="9" fill="#000000"/><rect x="0" y="27" width="12" height="9" fill="#000000"/><rect x="12" y="27" width="12" height="9" fill="#c8c8c8"/><rect x="24" y="27" width="12" height="9" fill="#c8c8c8"/><rect x="36" y="27" width="12" height="9" fill="#c8c8c8"/><rect x="48" y="27" width="12" height="9" fill="#000000"/><rect x="0" y="36" width="12" height="9" fill="#000000"/><rect x="12" y="36" width="12" height="9" fill="#eeeeee"/><rect x="24" y="36" width="12" height="9" fill="#c8c8c8"/><rect x="36" y="36" width="12" height="9" fill="#eeeeee"/><rect x="48" y="36" width="12" height="9" fill="#000000"/><rect x="0" y="9" width="61" height="1" fill="#fff"/><rect x="0" y="18" width="61" height="1" fill="#fff"/><rect x="0" y="27" width="61" height="1" fill="#fff"/><rect x="0" y="36" width="61" height="1" fill="#fff"/><rect x="12" y="0" width="1" height="46" fill="#fff"/><rect x="24" y="0" width="1" height="46" fill="#fff"/><rect x="36" y="0" width="1" height="46" fill="#fff"/><rect x="48" y="0" width="1" height="46" fill="#fff"/><rect x="2.7" y="3.7" width="7.6" height="1.5" fill="#fff"/><rect x="14.7" y="3.7" width="7.6" height="1.5" fill="#fff"/><rect x="26.7" y="3.7" width="7.6" height="1.5" fill="#fff"/><rect x="38.7" y="3.7" width="7.6" height="1.5" fill="#fff"/><rect x="50.7" y="3.7" width="7.6" height="1.5" fill="#fff"/><rect x="2.7" y="12.7" width="7.6" height="1.5" fill="#fff"/><rect x="14.7" y="12.7" width="7.6" height="1.5" fill="#000"/><rect x="26.7" y="12.7" width="7.6" height="1.5" fill="#000"/><rect x="38.7" y="12.7" width="7.6" height="1.5" fill="#000"/><rect x="50.7" y="12.7" width="7.6" height="1.5" fill="#fff"/><rect x="2.7" y="21.7" width="7.6" height="1.5" fill="#fff"/><rect x="14.7" y="21.7" width="7.6" height="1.5" fill="#000"/><rect x="26.7" y="21.7" width="7.6" height="1.5" fill="#000"/><rect x="38.7" y="21.7" width="7.6" height="1.5" fill="#000"/><rect x="50.7" y="21.7" width="7.6" height="1.5" fill="#fff"/><rect x="2.7" y="30.7" width="7.6" height="1.5" fill="#fff"/><rect x="14.7" y="30.7" width="7.6" height="1.5" fill="#000"/><rect x="26.7" y="30.7" width="7.6" height="1.5" fill="#000"/><rect x="38.7" y="30.7" width="7.6" height="1.5" fill="#000"/><rect x="50.7" y="30.7" width="7.6" height="1.5" fill="#fff"/><rect x="2.7" y="39.7" width="7.6" height="1.5" fill="#fff"/><rect x="14.7" y="39.7" width="7.6" height="1.5" fill="#000"/><rect x="26.7" y="39.7" width="7.6" height="1.5" fill="#000"/><rect x="38.7" y="39.7" width="7.6" height="1.5" fill="#000"/><rect x="50.7" y="39.7" width="7.6" height="1.5" fill="#fff"/></svg></div>
<div class="a" style="left:848px;top:391px;width:61px;height:46px"><svg width="61" height="46"><rect x="0" y="0" width="61" height="46" fill="#fff"/><rect x="0" y="0" width="12" height="9" fill="#5b9bd5"/><rect x="12" y="0" width="12" height="9" fill="#5b9bd5"/><rect x="24" y="0" width="12" height="9" fill="#5b9bd5"/><rect x="36" y="0" width="12" height="9" fill="#5b9bd5"/><rect x="48" y="0" width="12" height="9" fill="#5b9bd5"/><rect x="0" y="9" width="12" height="9" fill="#5b9bd5"/><rect x="12" y="9" width="12" height="9" fill="#bdd7ee"/><rect x="24" y="9" width="12" height="9" fill="#bdd7ee"/><rect x="36" y="9" width="12" height="9" fill="#bdd7ee"/><rect x="48" y="9" width="12" height="9" fill="#5b9bd5"/><rect x="0" y="18" width="12" height="9" fill="#5b9bd5"/><rect x="12" y="18" width="12" height="9" fill="#ddebf7"/><rect x="24" y="18" width="12" height="9" fill="#bdd7ee"/><rect x="36" y="18" width="12" height="9" fill="#ddebf7"/><rect x="48" y="18" width="12" height="9" fill="#5b9bd5"/><rect x="0" y="27" width="12" height="9" fill="#5b9bd5"/><rect x="12" y="27" width="12" height="9" fill="#bdd7ee"/><rect x="24" y="27" width="12" height="9" fill="#bdd7ee"/><rect x="36" y="27" width="12" height="9" fill="#bdd7ee"/><rect x="48" y="27" width="12" height="9" fill="#5b9bd5"/><rect x="0" y="36" width="12" height="9" fill="#5b9bd5"/><rect x="12" y="36" width="12" height="9" fill="#ddebf7"/><rect x="24" y="36" width="12" height="9" fill="#bdd7ee"/><rect x="36" y="36" width="12" height="9" fill="#ddebf7"/><rect x="48" y="36" width="12" height="9" fill="#5b9bd5"/><rect x="0" y="9" width="61" height="1" fill="#fff"/><rect x="0" y="18" width="61" height="1" fill="#fff"/><rect x="0" y="27" width="61" height="1" fill="#fff"/><rect x="0" y="36" width="61" height="1" fill="#fff"/><rect x="12" y="0" width="1" height="46" fill="#fff"/><rect x="24" y="0" width="1" height="46" fill="#fff"/><rect x="36" y="0" width="1" height="46" fill="#fff"/><rect x="48" y="0" width="1" height="46" fill="#fff"/><rect x="2.7" y="3.7" width="7.6" height="1.5" fill="#fff"/><rect x="14.7" y="3.7" width="7.6" height="1.5" fill="#fff"/><rect x="26.7" y="3.7" width="7.6" height="1.5" fill="#fff"/><rect x="38.7" y="3.7" width="7.6" height="1.5" fill="#fff"/><rect x="50.7" y="3.7" width="7.6" height="1.5" fill="#fff"/><rect x="2.7" y="12.7" width="7.6" height="1.5" fill="#fff"/><rect x="14.7" y="12.7" width="7.6" height="1.5" fill="#000"/><rect x="26.7" y="12.7" width="7.6" height="1.5" fill="#000"/><rect x="38.7" y="12.7" width="7.6" height="1.5" fill="#000"/><rect x="50.7" y="12.7" width="7.6" height="1.5" fill="#fff"/><rect x="2.7" y="21.7" width="7.6" height="1.5" fill="#fff"/><rect x="14.7" y="21.7" width="7.6" height="1.5" fill="#000"/><rect x="26.7" y="21.7" width="7.6" height="1.5" fill="#000"/><rect x="38.7" y="21.7" width="7.6" height="1.5" fill="#000"/><rect x="50.7" y="21.7" width="7.6" height="1.5" fill="#fff"/><rect x="2.7" y="30.7" width="7.6" height="1.5" fill="#fff"/><rect x="14.7" y="30.7" width="7.6" height="1.5" fill="#000"/><rect x="26.7" y="30.7" width="7.6" height="1.5" fill="#000"/><rect x="38.7" y="30.7" width="7.6" height="1.5" fill="#000"/><rect x="50.7" y="30.7" width="7.6" height="1.5" fill="#fff"/><rect x="2.7" y="39.7" width="7.6" height="1.5" fill="#fff"/><rect x="14.7" y="39.7" width="7.6" height="1.5" fill="#000"/><rect x="26.7" y="39.7" width="7.6" height="1.5" fill="#000"/><rect x="38.7" y="39.7" width="7.6" height="1.5" fill="#000"/><rect x="50.7" y="39.7" width="7.6" height="1.5" fill="#fff"/></svg></div>
<div class="a" style="left:917px;top:391px;width:61px;height:46px"><svg width="61" height="46"><rect x="0" y="0" width="61" height="46" fill="#fff"/><rect x="0" y="0" width="12" height="9" fill="#ed7d31"/><rect x="12" y="0" width="12" height="9" fill="#ed7d31"/><rect x="24" y="0" width="12" height="9" fill="#ed7d31"/><rect x="36" y="0" width="12" height="9" fill="#ed7d31"/><rect x="48" y="0" width="12" height="9" fill="#ed7d31"/><rect x="0" y="9" width="12" height="9" fill="#ed7d31"/><rect x="12" y="9" width="12" height="9" fill="#f8cbad"/><rect x="24" y="9" width="12" height="9" fill="#f8cbad"/><rect x="36" y="9" width="12" height="9" fill="#f8cbad"/><rect x="48" y="9" width="12" height="9" fill="#ed7d31"/><rect x="0" y="18" width="12" height="9" fill="#ed7d31"/><rect x="12" y="18" width="12" height="9" fill="#fce4d6"/><rect x="24" y="18" width="12" height="9" fill="#f8cbad"/><rect x="36" y="18" width="12" height="9" fill="#fce4d6"/><rect x="48" y="18" width="12" height="9" fill="#ed7d31"/><rect x="0" y="27" width="12" height="9" fill="#ed7d31"/><rect x="12" y="27" width="12" height="9" fill="#f8cbad"/><rect x="24" y="27" width="12" height="9" fill="#f8cbad"/><rect x="36" y="27" width="12" height="9" fill="#f8cbad"/><rect x="48" y="27" width="12" height="9" fill="#ed7d31"/><rect x="0" y="36" width="12" height="9" fill="#ed7d31"/><rect x="12" y="36" width="12" height="9" fill="#fce4d6"/><rect x="24" y="36" width="12" height="9" fill="#f8cbad"/><rect x="36" y="36" width="12" height="9" fill="#fce4d6"/><rect x="48" y="36" width="12" height="9" fill="#ed7d31"/><rect x="0" y="9" width="61" height="1" fill="#fff"/><rect x="0" y="18" width="61" height="1" fill="#fff"/><rect x="0" y="27" width="61" height="1" fill="#fff"/><rect x="0" y="36" width="61" height="1" fill="#fff"/><rect x="12" y="0" width="1" height="46" fill="#fff"/><rect x="24" y="0" width="1" height="46" fill="#fff"/><rect x="36" y="0" width="1" height="46" fill="#fff"/><rect x="48" y="0" width="1" height="46" fill="#fff"/><rect x="2.7" y="3.7" width="7.6" height="1.5" fill="#fff"/><rect x="14.7" y="3.7" width="7.6" height="1.5" fill="#fff"/><rect x="26.7" y="3.7" width="7.6" height="1.5" fill="#fff"/><rect x="38.7" y="3.7" width="7.6" height="1.5" fill="#fff"/><rect x="50.7" y="3.7" width="7.6" height="1.5" fill="#fff"/><rect x="2.7" y="12.7" width="7.6" height="1.5" fill="#fff"/><rect x="14.7" y="12.7" width="7.6" height="1.5" fill="#000"/><rect x="26.7" y="12.7" width="7.6" height="1.5" fill="#000"/><rect x="38.7" y="12.7" width="7.6" height="1.5" fill="#000"/><rect x="50.7" y="12.7" width="7.6" height="1.5" fill="#fff"/><rect x="2.7" y="21.7" width="7.6" height="1.5" fill="#fff"/><rect x="14.7" y="21.7" width="7.6" height="1.5" fill="#000"/><rect x="26.7" y="21.7" width="7.6" height="1.5" fill="#000"/><rect x="38.7" y="21.7" width="7.6" height="1.5" fill="#000"/><rect x="50.7" y="21.7" width="7.6" height="1.5" fill="#fff"/><rect x="2.7" y="30.7" width="7.6" height="1.5" fill="#fff"/><rect x="14.7" y="30.7" width="7.6" height="1.5" fill="#000"/><rect x="26.7" y="30.7" width="7.6" height="1.5" fill="#000"/><rect x="38.7" y="30.7" width="7.6" height="1.5" fill="#000"/><rect x="50.7" y="30.7" width="7.6" height="1.5" fill="#fff"/><rect x="2.7" y="39.7" width="7.6" height="1.5" fill="#fff"/><rect x="14.7" y="39.7" width="7.6" height="1.5" fill="#000"/><rect x="26.7" y="39.7" width="7.6" height="1.5" fill="#000"/><rect x="38.7" y="39.7" width="7.6" height="1.5" fill="#000"/><rect x="50.7" y="39.7" width="7.6" height="1.5" fill="#fff"/></svg></div>
<div class="a" style="left:986px;top:391px;width:61px;height:46px"><svg width="61" height="46"><rect x="0" y="0" width="61" height="46" fill="#fff"/><rect x="0" y="0" width="12" height="9" fill="#a5a5a5"/><rect x="12" y="0" width="12" height="9" fill="#a5a5a5"/><rect x="24" y="0" width="12" height="9" fill="#a5a5a5"/><rect x="36" y="0" width="12" height="9" fill="#a5a5a5"/><rect x="48" y="0" width="12" height="9" fill="#a5a5a5"/><rect x="0" y="9" width="12" height="9" fill="#a5a5a5"/><rect x="12" y="9" width="12" height="9" fill="#dbdbdb"/><rect x="24" y="9" width="12" height="9" fill="#dbdbdb"/><rect x="36" y="9" width="12" height="9" fill="#dbdbdb"/><rect x="48" y="9" width="12" height="9" fill="#a5a5a5"/><rect x="0" y="18" width="12" height="9" fill="#a5a5a5"/><rect x="12" y="18" width="12" height="9" fill="#ededed"/><rect x="24" y="18" width="12" height="9" fill="#dbdbdb"/><rect x="36" y="18" width="12" height="9" fill="#ededed"/><rect x="48" y="18" width="12" height="9" fill="#a5a5a5"/><rect x="0" y="27" width="12" height="9" fill="#a5a5a5"/><rect x="12" y="27" width="12" height="9" fill="#dbdbdb"/><rect x="24" y="27" width="12" height="9" fill="#dbdbdb"/><rect x="36" y="27" width="12" height="9" fill="#dbdbdb"/><rect x="48" y="27" width="12" height="9" fill="#a5a5a5"/><rect x="0" y="36" width="12" height="9" fill="#a5a5a5"/><rect x="12" y="36" width="12" height="9" fill="#ededed"/><rect x="24" y="36" width="12" height="9" fill="#dbdbdb"/><rect x="36" y="36" width="12" height="9" fill="#ededed"/><rect x="48" y="36" width="12" height="9" fill="#a5a5a5"/><rect x="0" y="9" width="61" height="1" fill="#fff"/><rect x="0" y="18" width="61" height="1" fill="#fff"/><rect x="0" y="27" width="61" height="1" fill="#fff"/><rect x="0" y="36" width="61" height="1" fill="#fff"/><rect x="12" y="0" width="1" height="46" fill="#fff"/><rect x="24" y="0" width="1" height="46" fill="#fff"/><rect x="36" y="0" width="1" height="46" fill="#fff"/><rect x="48" y="0" width="1" height="46" fill="#fff"/><rect x="2.7" y="3.7" width="7.6" height="1.5" fill="#fff"/><rect x="14.7" y="3.7" width="7.6" height="1.5" fill="#fff"/><rect x="26.7" y="3.7" width="7.6" height="1.5" fill="#fff"/><rect x="38.7" y="3.7" width="7.6" height="1.5" fill="#fff"/><rect x="50.7" y="3.7" width="7.6" height="1.5" fill="#fff"/><rect x="2.7" y="12.7" width="7.6" height="1.5" fill="#fff"/><rect x="14.7" y="12.7" width="7.6" height="1.5" fill="#000"/><rect x="26.7" y="12.7" width="7.6" height="1.5" fill="#000"/><rect x="38.7" y="12.7" width="7.6" height="1.5" fill="#000"/><rect x="50.7" y="12.7" width="7.6" height="1.5" fill="#fff"/><rect x="2.7" y="21.7" width="7.6" height="1.5" fill="#fff"/><rect x="14.7" y="21.7" width="7.6" height="1.5" fill="#000"/><rect x="26.7" y="21.7" width="7.6" height="1.5" fill="#000"/><rect x="38.7" y="21.7" width="7.6" height="1.5" fill="#000"/><rect x="50.7" y="21.7" width="7.6" height="1.5" fill="#fff"/><rect x="2.7" y="30.7" width="7.6" height="1.5" fill="#fff"/><rect x="14.7" y="30.7" width="7.6" height="1.5" fill="#000"/><rect x="26.7" y="30.7" width="7.6" height="1.5" fill="#000"/><rect x="38.7" y="30.7" width="7.6" height="1.5" fill="#000"/><rect x="50.7" y="30.7" width="7.6" height="1.5" fill="#fff"/><rect x="2.7" y="39.7" width="7.6" height="1.5" fill="#fff"/><rect x="14.7" y="39.7" width="7.6" height="1.5" fill="#000"/><rect x="26.7" y="39.7" width="7.6" height="1.5" fill="#000"/><rect x="38.7" y="39.7" width="7.6" height="1.5" fill="#000"/><rect x="50.7" y="39.7" width="7.6" height="1.5" fill="#fff"/></svg></div>
<div class="a" style="left:1055px;top:391px;width:61px;height:46px"><svg width="61" height="46"><rect x="0" y="0" width="61" height="46" fill="#fff"/><rect x="0" y="0" width="12" height="9" fill="#ffc000"/><rect x="12" y="0" width="12" height="9" fill="#ffc000"/><rect x="24" y="0" width="12" height="9" fill="#ffc000"/><rect x="36" y="0" width="12" height="9" fill="#ffc000"/><rect x="48" y="0" width="12" height="9" fill="#ffc000"/><rect x="0" y="9" width="12" height="9" fill="#ffc000"/><rect x="12" y="9" width="12" height="9" fill="#ffe699"/><rect x="24" y="9" width="12" height="9" fill="#ffe699"/><rect x="36" y="9" width="12" height="9" fill="#ffe699"/><rect x="48" y="9" width="12" height="9" fill="#ffc000"/><rect x="0" y="18" width="12" height="9" fill="#ffc000"/><rect x="12" y="18" width="12" height="9" fill="#fff2cc"/><rect x="24" y="18" width="12" height="9" fill="#ffe699"/><rect x="36" y="18" width="12" height="9" fill="#fff2cc"/><rect x="48" y="18" width="12" height="9" fill="#ffc000"/><rect x="0" y="27" width="12" height="9" fill="#ffc000"/><rect x="12" y="27" width="12" height="9" fill="#ffe699"/><rect x="24" y="27" width="12" height="9" fill="#ffe699"/><rect x="36" y="27" width="12" height="9" fill="#ffe699"/><rect x="48" y="27" width="12" height="9" fill="#ffc000"/><rect x="0" y="36" width="12" height="9" fill="#ffc000"/><rect x="12" y="36" width="12" height="9" fill="#fff2cc"/><rect x="24" y="36" width="12" height="9" fill="#ffe699"/><rect x="36" y="36" width="12" height="9" fill="#fff2cc"/><rect x="48" y="36" width="12" height="9" fill="#ffc000"/><rect x="0" y="9" width="61" height="1" fill="#fff"/><rect x="0" y="18" width="61" height="1" fill="#fff"/><rect x="0" y="27" width="61" height="1" fill="#fff"/><rect x="0" y="36" width="61" height="1" fill="#fff"/><rect x="12" y="0" width="1" height="46" fill="#fff"/><rect x="24" y="0" width="1" height="46" fill="#fff"/><rect x="36" y="0" width="1" height="46" fill="#fff"/><rect x="48" y="0" width="1" height="46" fill="#fff"/><rect x="2.7" y="3.7" width="7.6" height="1.5" fill="#fff"/><rect x="14.7" y="3.7" width="7.6" height="1.5" fill="#fff"/><rect x="26.7" y="3.7" width="7.6" height="1.5" fill="#fff"/><rect x="38.7" y="3.7" width="7.6" height="1.5" fill="#fff"/><rect x="50.7" y="3.7" width="7.6" height="1.5" fill="#fff"/><rect x="2.7" y="12.7" width="7.6" height="1.5" fill="#fff"/><rect x="14.7" y="12.7" width="7.6" height="1.5" fill="#000"/><rect x="26.7" y="12.7" width="7.6" height="1.5" fill="#000"/><rect x="38.7" y="12.7" width="7.6" height="1.5" fill="#000"/><rect x="50.7" y="12.7" width="7.6" height="1.5" fill="#fff"/><rect x="2.7" y="21.7" width="7.6" height="1.5" fill="#fff"/><rect x="14.7" y="21.7" width="7.6" height="1.5" fill="#000"/><rect x="26.7" y="21.7" width="7.6" height="1.5" fill="#000"/><rect x="38.7" y="21.7" width="7.6" height="1.5" fill="#000"/><rect x="50.7" y="21.7" width="7.6" height="1.5" fill="#fff"/><rect x="2.7" y="30.7" width="7.6" height="1.5" fill="#fff"/><rect x="14.7" y="30.7" width="7.6" height="1.5" fill="#000"/><rect x="26.7" y="30.7" width="7.6" height="1.5" fill="#000"/><rect x="38.7" y="30.7" width="7.6" height="1.5" fill="#000"/><rect x="50.7" y="30.7" width="7.6" height="1.5" fill="#fff"/><rect x="2.7" y="39.7" width="7.6" height="1.5" fill="#fff"/><rect x="14.7" y="39.7" width="7.6" height="1.5" fill="#000"/><rect x="26.7" y="39.7" width="7.6" height="1.5" fill="#000"/><rect x="38.7" y="39.7" width="7.6" height="1.5" fill="#000"/><rect x="50.7" y="39.7" width="7.6" height="1.5" fill="#fff"/></svg></div>
<div class="a" style="left:1124px;top:391px;width:61px;height:46px"><svg width="61" height="46"><rect x="0" y="0" width="61" height="46" fill="#fff"/><rect x="0" y="0" width="12" height="9" fill="#4472c4"/><rect x="12" y="0" width="12" height="9" fill="#4472c4"/><rect x="24" y="0" width="12" height="9" fill="#4472c4"/><rect x="36" y="0" width="12" height="9" fill="#4472c4"/><rect x="48" y="0" width="12" height="9" fill="#4472c4"/><rect x="0" y="9" width="12" height="9" fill="#4472c4"/><rect x="12" y="9" width="12" height="9" fill="#b4c6e7"/><rect x="24" y="9" width="12" height="9" fill="#b4c6e7"/><rect x="36" y="9" width="12" height="9" fill="#b4c6e7"/><rect x="48" y="9" width="12" height="9" fill="#4472c4"/><rect x="0" y="18" width="12" height="9" fill="#4472c4"/><rect x="12" y="18" width="12" height="9" fill="#d9e1f2"/><rect x="24" y="18" width="12" height="9" fill="#b4c6e7"/><rect x="36" y="18" width="12" height="9" fill="#d9e1f2"/><rect x="48" y="18" width="12" height="9" fill="#4472c4"/><rect x="0" y="27" width="12" height="9" fill="#4472c4"/><rect x="12" y="27" width="12" height="9" fill="#b4c6e7"/><rect x="24" y="27" width="12" height="9" fill="#b4c6e7"/><rect x="36" y="27" width="12" height="9" fill="#b4c6e7"/><rect x="48" y="27" width="12" height="9" fill="#4472c4"/><rect x="0" y="36" width="12" height="9" fill="#4472c4"/><rect x="12" y="36" width="12" height="9" fill="#d9e1f2"/><rect x="24" y="36" width="12" height="9" fill="#b4c6e7"/><rect x="36" y="36" width="12" height="9" fill="#d9e1f2"/><rect x="48" y="36" width="12" height="9" fill="#4472c4"/><rect x="0" y="9" width="61" height="1" fill="#fff"/><rect x="0" y="18" width="61" height="1" fill="#fff"/><rect x="0" y="27" width="61" height="1" fill="#fff"/><rect x="0" y="36" width="61" height="1" fill="#fff"/><rect x="12" y="0" width="1" height="46" fill="#fff"/><rect x="24" y="0" width="1" height="46" fill="#fff"/><rect x="36" y="0" width="1" height="46" fill="#fff"/><rect x="48" y="0" width="1" height="46" fill="#fff"/><rect x="2.7" y="3.7" width="7.6" height="1.5" fill="#fff"/><rect x="14.7" y="3.7" width="7.6" height="1.5" fill="#fff"/><rect x="26.7" y="3.7" width="7.6" height="1.5" fill="#fff"/><rect x="38.7" y="3.7" width="7.6" height="1.5" fill="#fff"/><rect x="50.7" y="3.7" width="7.6" height="1.5" fill="#fff"/><rect x="2.7" y="12.7" width="7.6" height="1.5" fill="#fff"/><rect x="14.7" y="12.7" width="7.6" height="1.5" fill="#000"/><rect x="26.7" y="12.7" width="7.6" height="1.5" fill="#000"/><rect x="38.7" y="12.7" width="7.6" height="1.5" fill="#000"/><rect x="50.7" y="12.7" width="7.6" height="1.5" fill="#fff"/><rect x="2.7" y="21.7" width="7.6" height="1.5" fill="#fff"/><rect x="14.7" y="21.7" width="7.6" height="1.5" fill="#000"/><rect x="26.7" y="21.7" width="7.6" height="1.5" fill="#000"/><rect x="38.7" y="21.7" width="7.6" height="1.5" fill="#000"/><rect x="50.7" y="21.7" width="7.6" height="1.5" fill="#fff"/><rect x="2.7" y="30.7" width="7.6" height="1.5" fill="#fff"/><rect x="14.7" y="30.7" width="7.6" height="1.5" fill="#000"/><rect x="26.7" y="30.7" width="7.6" height="1.5" fill="#000"/><rect x="38.7" y="30.7" width="7.6" height="1.5" fill="#000"/><rect x="50.7" y="30.7" width="7.6" height="1.5" fill="#fff"/><rect x="2.7" y="39.7" width="7.6" height="1.5" fill="#fff"/><rect x="14.7" y="39.7" width="7.6" height="1.5" fill="#000"/><rect x="26.7" y="39.7" width="7.6" height="1.5" fill="#000"/><rect x="38.7" y="39.7" width="7.6" height="1.5" fill="#000"/><rect x="50.7" y="39.7" width="7.6" height="1.5" fill="#fff"/></svg></div>
<div class="a" style="left:1193px;top:391px;width:61px;height:46px"><svg width="61" height="46"><rect x="0" y="0" width="61" height="46" fill="#fff"/><rect x="0" y="0" width="12" height="9" fill="#70ad47"/><rect x="12" y="0" width="12" height="9" fill="#70ad47"/><rect x="24" y="0" width="12" height="9" fill="#70ad47"/><rect x="36" y="0" width="12" height="9" fill="#70ad47"/><rect x="48" y="0" width="12" height="9" fill="#70ad47"/><rect x="0" y="9" width="12" height="9" fill="#70ad47"/><rect x="12" y="9" width="12" height="9" fill="#c6e0b4"/><rect x="24" y="9" width="12" height="9" fill="#c6e0b4"/><rect x="36" y="9" width="12" height="9" fill="#c6e0b4"/><rect x="48" y="9" width="12" height="9" fill="#70ad47"/><rect x="0" y="18" width="12" height="9" fill="#70ad47"/><rect x="12" y="18" width="12" height="9" fill="#e2efda"/><rect x="24" y="18" width="12" height="9" fill="#c6e0b4"/><rect x="36" y="18" width="12" height="9" fill="#e2efda"/><rect x="48" y="18" width="12" height="9" fill="#70ad47"/><rect x="0" y="27" width="12" height="9" fill="#70ad47"/><rect x="12" y="27" width="12" height="9" fill="#c6e0b4"/><rect x="24" y="27" width="12" height="9" fill="#c6e0b4"/><rect x="36" y="27" width="12" height="9" fill="#c6e0b4"/><rect x="48" y="27" width="12" height="9" fill="#70ad47"/><rect x="0" y="36" width="12" height="9" fill="#70ad47"/><rect x="12" y="36" width="12" height="9" fill="#e2efda"/><rect x="24" y="36" width="12" height="9" fill="#c6e0b4"/><rect x="36" y="36" width="12" height="9" fill="#e2efda"/><rect x="48" y="36" width="12" height="9" fill="#70ad47"/><rect x="0" y="9" width="61" height="1" fill="#fff"/><rect x="0" y="18" width="61" height="1" fill="#fff"/><rect x="0" y="27" width="61" height="1" fill="#fff"/><rect x="0" y="36" width="61" height="1" fill="#fff"/><rect x="12" y="0" width="1" height="46" fill="#fff"/><rect x="24" y="0" width="1" height="46" fill="#fff"/><rect x="36" y="0" width="1" height="46" fill="#fff"/><rect x="48" y="0" width="1" height="46" fill="#fff"/><rect x="2.7" y="3.7" width="7.6" height="1.5" fill="#fff"/><rect x="14.7" y="3.7" width="7.6" height="1.5" fill="#fff"/><rect x="26.7" y="3.7" width="7.6" height="1.5" fill="#fff"/><rect x="38.7" y="3.7" width="7.6" height="1.5" fill="#fff"/><rect x="50.7" y="3.7" width="7.6" height="1.5" fill="#fff"/><rect x="2.7" y="12.7" width="7.6" height="1.5" fill="#fff"/><rect x="14.7" y="12.7" width="7.6" height="1.5" fill="#000"/><rect x="26.7" y="12.7" width="7.6" height="1.5" fill="#000"/><rect x="38.7" y="12.7" width="7.6" height="1.5" fill="#000"/><rect x="50.7" y="12.7" width="7.6" height="1.5" fill="#fff"/><rect x="2.7" y="21.7" width="7.6" height="1.5" fill="#fff"/><rect x="14.7" y="21.7" width="7.6" height="1.5" fill="#000"/><rect x="26.7" y="21.7" width="7.6" height="1.5" fill="#000"/><rect x="38.7" y="21.7" width="7.6" height="1.5" fill="#000"/><rect x="50.7" y="21.7" width="7.6" height="1.5" fill="#fff"/><rect x="2.7" y="30.7" width="7.6" height="1.5" fill="#fff"/><rect x="14.7" y="30.7" width="7.6" height="1.5" fill="#000"/><rect x="26.7" y="30.7" width="7.6" height="1.5" fill="#000"/><rect x="38.7" y="30.7" width="7.6" height="1.5" fill="#000"/><rect x="50.7" y="30.7" width="7.6" height="1.5" fill="#fff"/><rect x="2.7" y="39.7" width="7.6" height="1.5" fill="#fff"/><rect x="14.7" y="39.7" width="7.6" height="1.5" fill="#000"/><rect x="26.7" y="39.7" width="7.6" height="1.5" fill="#000"/><rect x="38.7" y="39.7" width="7.6" height="1.5" fill="#000"/><rect x="50.7" y="39.7" width="7.6" height="1.5" fill="#fff"/></svg></div>
<div class="a" style="left:779px;top:445px;width:61px;height:46px"><svg width="61" height="46"><rect x="0" y="0" width="61" height="46" fill="#fff"/><rect x="0" y="0" width="12" height="9" fill="#000000"/><rect x="12" y="0" width="12" height="9" fill="#000000"/><rect x="24" y="0" width="12" height="9" fill="#000000"/><rect x="36" y="0" width="12" height="9" fill="#000000"/><rect x="48" y="0" width="12" height="9" fill="#000000"/><rect x="0" y="9" width="12" height="9" fill="#000000"/><rect x="12" y="9" width="12" height="9" fill="#d9d9d9"/><rect x="24" y="9" width="12" height="9" fill="#d9d9d9"/><rect x="36" y="9" width="12" height="9" fill="#d9d9d9"/><rect x="48" y="9" width="12" height="9" fill="#000000"/><rect x="0" y="18" width="12" height="9" fill="#000000"/><rect x="12" y="18" width="12" height="9" fill="#fff"/><rect x="24" y="18" width="12" height="9" fill="#d9d9d9"/><rect x="36" y="18" width="12" height="9" fill="#fff"/><rect x="48" y="18" width="12" height="9" fill="#000000"/><rect x="0" y="27" width="12" height="9" fill="#000000"/><rect x="12" y="27" width="12" height="9" fill="#d9d9d9"/><rect x="24" y="27" width="12" height="9" fill="#d9d9d9"/><rect x="36" y="27" width="12" height="9" fill="#d9d9d9"/><rect x="48" y="27" width="12" height="9" fill="#000000"/><rect x="0" y="36" width="12" height="9" fill="#000000"/><rect x="12" y="36" width="12" height="9" fill="#fff"/><rect x="24" y="36" width="12" height="9" fill="#d9d9d9"/><rect x="36" y="36" width="12" height="9" fill="#fff"/><rect x="48" y="36" width="12" height="9" fill="#000000"/><rect x="0" y="0" width="61" height="1.6" fill="#000"/><rect x="0" y="8.7" width="61" height="1.6" fill="#000"/><rect x="0" y="44.4" width="61" height="1.6" fill="#000"/><rect x="2.7" y="3.7" width="7.6" height="1.5" fill="#fff"/><rect x="14.7" y="3.7" width="7.6" height="1.5" fill="#fff"/><rect x="26.7" y="3.7" width="7.6" height="1.5" fill="#fff"/><rect x="38.7" y="3.7" width="7.6" height="1.5" fill="#fff"/><rect x="50.7" y="3.7" width="7.6" height="1.5" fill="#fff"/><rect x="2.7" y="12.7" width="7.6" height="1.5" fill="#fff"/><rect x="14.7" y="12.7" width="7.6" height="1.5" fill="#000"/><rect x="26.7" y="12.7" width="7.6" height="1.5" fill="#000"/><rect x="38.7" y="12.7" width="7.6" height="1.5" fill="#000"/><rect x="50.7" y="12.7" width="7.6" height="1.5" fill="#fff"/><rect x="2.7" y="21.7" width="7.6" height="1.5" fill="#fff"/><rect x="14.7" y="21.7" width="7.6" height="1.5" fill="#000"/><rect x="26.7" y="21.7" width="7.6" height="1.5" fill="#000"/><rect x="38.7" y="21.7" width="7.6" height="1.5" fill="#000"/><rect x="50.7" y="21.7" width="7.6" height="1.5" fill="#fff"/><rect x="2.7" y="30.7" width="7.6" height="1.5" fill="#fff"/><rect x="14.7" y="30.7" width="7.6" height="1.5" fill="#000"/><rect x="26.7" y="30.7" width="7.6" height="1.5" fill="#000"/><rect x="38.7" y="30.7" width="7.6" height="1.5" fill="#000"/><rect x="50.7" y="30.7" width="7.6" height="1.5" fill="#fff"/><rect x="2.7" y="39.7" width="7.6" height="1.5" fill="#fff"/><rect x="14.7" y="39.7" width="7.6" height="1.5" fill="#000"/><rect x="26.7" y="39.7" width="7.6" height="1.5" fill="#000"/><rect x="38.7" y="39.7" width="7.6" height="1.5" fill="#000"/><rect x="50.7" y="39.7" width="7.6" height="1.5" fill="#fff"/></svg></div>
<div class="a" style="left:848px;top:445px;width:61px;height:46px"><svg width="61" height="46"><rect x="0" y="0" width="61" height="46" fill="#fff"/><rect x="0" y="0" width="12" height="9" fill="#5b9bd5"/><rect x="12" y="0" width="12" height="9" fill="#5b9bd5"/><rect x="24" y="0" width="12" height="9" fill="#5b9bd5"/><rect x="36" y="0" width="12" height="9" fill="#5b9bd5"/><rect x="48" y="0" width="12" height="9" fill="#5b9bd5"/><rect x="0" y="9" width="12" height="9" fill="#5b9bd5"/><rect x="12" y="9" width="12" height="9" fill="#d9d9d9"/><rect x="24" y="9" width="12" height="9" fill="#d9d9d9"/><rect x="36" y="9" width="12" height="9" fill="#d9d9d9"/><rect x="48" y="9" width="12" height="9" fill="#5b9bd5"/><rect x="0" y="18" width="12" height="9" fill="#5b9bd5"/><rect x="12" y="18" width="12" height="9" fill="#fff"/><rect x="24" y="18" width="12" height="9" fill="#d9d9d9"/><rect x="36" y="18" width="12" height="9" fill="#fff"/><rect x="48" y="18" width="12" height="9" fill="#5b9bd5"/><rect x="0" y="27" width="12" height="9" fill="#5b9bd5"/><rect x="12" y="27" width="12" height="9" fill="#d9d9d9"/><rect x="24" y="27" width="12" height="9" fill="#d9d9d9"/><rect x="36" y="27" width="12" height="9" fill="#d9d9d9"/><rect x="48" y="27" width="12" height="9" fill="#5b9bd5"/><rect x="0" y="36" width="12" height="9" fill="#5b9bd5"/><rect x="12" y="36" width="12" height="9" fill="#fff"/><rect x="24" y="36" width="12" height="9" fill="#d9d9d9"/><rect x="36" y="36" width="12" height="9" fill="#fff"/><rect x="48" y="36" width="12" height="9" fill="#5b9bd5"/><rect x="0" y="0" width="61" height="1.6" fill="#000"/><rect x="0" y="8.7" width="61" height="1.6" fill="#000"/><rect x="0" y="44.4" width="61" height="1.6" fill="#000"/><rect x="2.7" y="3.7" width="7.6" height="1.5" fill="#fff"/><rect x="14.7" y="3.7" width="7.6" height="1.5" fill="#fff"/><rect x="26.7" y="3.7" width="7.6" height="1.5" fill="#fff"/><rect x="38.7" y="3.7" width="7.6" height="1.5" fill="#fff"/><rect x="50.7" y="3.7" width="7.6" height="1.5" fill="#fff"/><rect x="2.7" y="12.7" width="7.6" height="1.5" fill="#fff"/><rect x="14.7" y="12.7" width="7.6" height="1.5" fill="#000"/><rect x="26.7" y="12.7" width="7.6" height="1.5" fill="#000"/><rect x="38.7" y="12.7" width="7.6" height="1.5" fill="#000"/><rect x="50.7" y="12.7" width="7.6" height="1.5" fill="#fff"/><rect x="2.7" y="21.7" width="7.6" height="1.5" fill="#fff"/><rect x="14.7" y="21.7" width="7.6" height="1.5" fill="#000"/><rect x="26.7" y="21.7" width="7.6" height="1.5" fill="#000"/><rect x="38.7" y="21.7" width="7.6" height="1.5" fill="#000"/><rect x="50.7" y="21.7" width="7.6" height="1.5" fill="#fff"/><rect x="2.7" y="30.7" width="7.6" height="1.5" fill="#fff"/><rect x="14.7" y="30.7" width="7.6" height="1.5" fill="#000"/><rect x="26.7" y="30.7" width="7.6" height="1.5" fill="#000"/><rect x="38.7" y="30.7" width="7.6" height="1.5" fill="#000"/><rect x="50.7" y="30.7" width="7.6" height="1.5" fill="#fff"/><rect x="2.7" y="39.7" width="7.6" height="1.5" fill="#fff"/><rect x="14.7" y="39.7" width="7.6" height="1.5" fill="#000"/><rect x="26.7" y="39.7" width="7.6" height="1.5" fill="#000"/><rect x="38.7" y="39.7" width="7.6" height="1.5" fill="#000"/><rect x="50.7" y="39.7" width="7.6" height="1.5" fill="#fff"/></svg></div>
<div class="a" style="left:917px;top:445px;width:61px;height:46px"><svg width="61" height="46"><rect x="0" y="0" width="61" height="46" fill="#fff"/><rect x="0" y="0" width="12" height="9" fill="#ed7d31"/><rect x="12" y="0" width="12" height="9" fill="#ed7d31"/><rect x="24" y="0" width="12" height="9" fill="#ed7d31"/><rect x="36" y="0" width="12" height="9" fill="#ed7d31"/><rect x="48" y="0" width="12" height="9" fill="#ed7d31"/><rect x="0" y="9" width="12" height="9" fill="#ed7d31"/><rect x="12" y="9" width="12" height="9" fill="#d9d9d9"/><rect x="24" y="9" width="12" height="9" fill="#d9d9d9"/><rect x="36" y="9" width="12" height="9" fill="#d9d9d9"/><rect x="48" y="9" width="12" height="9" fill="#ed7d31"/><rect x="0" y="18" width="12" height="9" fill="#ed7d31"/><rect x="12" y="18" width="12" height="9" fill="#fff"/><rect x="24" y="18" width="12" height="9" fill="#d9d9d9"/><rect x="36" y="18" width="12" height="9" fill="#fff"/><rect x="48" y="18" width="12" height="9" fill="#ed7d31"/><rect x="0" y="27" width="12" height="9" fill="#ed7d31"/><rect x="12" y="27" width="12" height="9" fill="#d9d9d9"/><rect x="24" y="27" width="12" height="9" fill="#d9d9d9"/><rect x="36" y="27" width="12" height="9" fill="#d9d9d9"/><rect x="48" y="27" width="12" height="9" fill="#ed7d31"/><rect x="0" y="36" width="12" height="9" fill="#ed7d31"/><rect x="12" y="36" width="12" height="9" fill="#fff"/><rect x="24" y="36" width="12" height="9" fill="#d9d9d9"/><rect x="36" y="36" width="12" height="9" fill="#fff"/><rect x="48" y="36" width="12" height="9" fill="#ed7d31"/><rect x="0" y="0" width="61" height="1.6" fill="#000"/><rect x="0" y="8.7" width="61" height="1.6" fill="#000"/><rect x="0" y="44.4" width="61" height="1.6" fill="#000"/><rect x="2.7" y="3.7" width="7.6" height="1.5" fill="#fff"/><rect x="14.7" y="3.7" width="7.6" height="1.5" fill="#fff"/><rect x="26.7" y="3.7" width="7.6" height="1.5" fill="#fff"/><rect x="38.7" y="3.7" width="7.6" height="1.5" fill="#fff"/><rect x="50.7" y="3.7" width="7.6" height="1.5" fill="#fff"/><rect x="2.7" y="12.7" width="7.6" height="1.5" fill="#fff"/><rect x="14.7" y="12.7" width="7.6" height="1.5" fill="#000"/><rect x="26.7" y="12.7" width="7.6" height="1.5" fill="#000"/><rect x="38.7" y="12.7" width="7.6" height="1.5" fill="#000"/><rect x="50.7" y="12.7" width="7.6" height="1.5" fill="#fff"/><rect x="2.7" y="21.7" width="7.6" height="1.5" fill="#fff"/><rect x="14.7" y="21.7" width="7.6" height="1.5" fill="#000"/><rect x="26.7" y="21.7" width="7.6" height="1.5" fill="#000"/><rect x="38.7" y="21.7" width="7.6" height="1.5" fill="#000"/><rect x="50.7" y="21.7" width="7.6" height="1.5" fill="#fff"/><rect x="2.7" y="30.7" width="7.6" height="1.5" fill="#fff"/><rect x="14.7" y="30.7" width="7.6" height="1.5" fill="#000"/><rect x="26.7" y="30.7" width="7.6" height="1.5" fill="#000"/><rect x="38.7" y="30.7" width="7.6" height="1.5" fill="#000"/><rect x="50.7" y="30.7" width="7.6" height="1.5" fill="#fff"/><rect x="2.7" y="39.7" width="7.6" height="1.5" fill="#fff"/><rect x="14.7" y="39.7" width="7.6" height="1.5" fill="#000"/><rect x="26.7" y="39.7" width="7.6" height="1.5" fill="#000"/><rect x="38.7" y="39.7" width="7.6" height="1.5" fill="#000"/><rect x="50.7" y="39.7" width="7.6" height="1.5" fill="#fff"/></svg></div>
<div class="a" style="left:986px;top:445px;width:61px;height:46px"><svg width="61" height="46"><rect x="0" y="0" width="61" height="46" fill="#fff"/><rect x="0" y="0" width="12" height="9" fill="#a5a5a5"/><rect x="12" y="0" width="12" height="9" fill="#a5a5a5"/><rect x="24" y="0" width="12" height="9" fill="#a5a5a5"/><rect x="36" y="0" width="12" height="9" fill="#a5a5a5"/><rect x="48" y="0" width="12" height="9" fill="#a5a5a5"/><rect x="0" y="9" width="12" height="9" fill="#a5a5a5"/><rect x="12" y="9" width="12" height="9" fill="#d9d9d9"/><rect x="24" y="9" width="12" height="9" fill="#d9d9d9"/><rect x="36" y="9" width="12" height="9" fill="#d9d9d9"/><rect x="48" y="9" width="12" height="9" fill="#a5a5a5"/><rect x="0" y="18" width="12" height="9" fill="#a5a5a5"/><rect x="12" y="18" width="12" height="9" fill="#fff"/><rect x="24" y="18" width="12" height="9" fill="#d9d9d9"/><rect x="36" y="18" width="12" height="9" fill="#fff"/><rect x="48" y="18" width="12" height="9" fill="#a5a5a5"/><rect x="0" y="27" width="12" height="9" fill="#a5a5a5"/><rect x="12" y="27" width="12" height="9" fill="#d9d9d9"/><rect x="24" y="27" width="12" height="9" fill="#d9d9d9"/><rect x="36" y="27" width="12" height="9" fill="#d9d9d9"/><rect x="48" y="27" width="12" height="9" fill="#a5a5a5"/><rect x="0" y="36" width="12" height="9" fill="#a5a5a5"/><rect x="12" y="36" width="12" height="9" fill="#fff"/><rect x="24" y="36" width="12" height="9" fill="#d9d9d9"/><rect x="36" y="36" width="12" height="9" fill="#fff"/><rect x="48" y="36" width="12" height="9" fill="#a5a5a5"/><rect x="0" y="0" width="61" height="1.6" fill="#000"/><rect x="0" y="8.7" width="61" height="1.6" fill="#000"/><rect x="0" y="44.4" width="61" height="1.6" fill="#000"/><rect x="2.7" y="3.7" width="7.6" height="1.5" fill="#fff"/><rect x="14.7" y="3.7" width="7.6" height="1.5" fill="#fff"/><rect x="26.7" y="3.7" width="7.6" height="1.5" fill="#fff"/><rect x="38.7" y="3.7" width="7.6" height="1.5" fill="#fff"/><rect x="50.7" y="3.7" width="7.6" height="1.5" fill="#fff"/><rect x="2.7" y="12.7" width="7.6" height="1.5" fill="#fff"/><rect x="14.7" y="12.7" width="7.6" height="1.5" fill="#000"/><rect x="26.7" y="12.7" width="7.6" height="1.5" fill="#000"/><rect x="38.7" y="12.7" width="7.6" height="1.5" fill="#000"/><rect x="50.7" y="12.7" width="7.6" height="1.5" fill="#fff"/><rect x="2.7" y="21.7" width="7.6" height="1.5" fill="#fff"/><rect x="14.7" y="21.7" width="7.6" height="1.5" fill="#000"/><rect x="26.7" y="21.7" width="7.6" height="1.5" fill="#000"/><rect x="38.7" y="21.7" width="7.6" height="1.5" fill="#000"/><rect x="50.7" y="21.7" width="7.6" height="1.5" fill="#fff"/><rect x="2.7" y="30.7" width="7.6" height="1.5" fill="#fff"/><rect x="14.7" y="30.7" width="7.6" height="1.5" fill="#000"/><rect x="26.7" y="30.7" width="7.6" height="1.5" fill="#000"/><rect x="38.7" y="30.7" width="7.6" height="1.5" fill="#000"/><rect x="50.7" y="30.7" width="7.6" height="1.5" fill="#fff"/><rect x="2.7" y="39.7" width="7.6" height="1.5" fill="#fff"/><rect x="14.7" y="39.7" width="7.6" height="1.5" fill="#000"/><rect x="26.7" y="39.7" width="7.6" height="1.5" fill="#000"/><rect x="38.7" y="39.7" width="7.6" height="1.5" fill="#000"/><rect x="50.7" y="39.7" width="7.6" height="1.5" fill="#fff"/></svg></div>
<div class="a" style="left:1055px;top:445px;width:61px;height:46px"><svg width="61" height="46"><rect x="0" y="0" width="61" height="46" fill="#fff"/><rect x="0" y="0" width="12" height="9" fill="#ffc000"/><rect x="12" y="0" width="12" height="9" fill="#ffc000"/><rect x="24" y="0" width="12" height="9" fill="#ffc000"/><rect x="36" y="0" width="12" height="9" fill="#ffc000"/><rect x="48" y="0" width="12" height="9" fill="#ffc000"/><rect x="0" y="9" width="12" height="9" fill="#ffc000"/><rect x="12" y="9" width="12" height="9" fill="#d9d9d9"/><rect x="24" y="9" width="12" height="9" fill="#d9d9d9"/><rect x="36" y="9" width="12" height="9" fill="#d9d9d9"/><rect x="48" y="9" width="12" height="9" fill="#ffc000"/><rect x="0" y="18" width="12" height="9" fill="#ffc000"/><rect x="12" y="18" width="12" height="9" fill="#fff"/><rect x="24" y="18" width="12" height="9" fill="#d9d9d9"/><rect x="36" y="18" width="12" height="9" fill="#fff"/><rect x="48" y="18" width="12" height="9" fill="#ffc000"/><rect x="0" y="27" width="12" height="9" fill="#ffc000"/><rect x="12" y="27" width="12" height="9" fill="#d9d9d9"/><rect x="24" y="27" width="12" height="9" fill="#d9d9d9"/><rect x="36" y="27" width="12" height="9" fill="#d9d9d9"/><rect x="48" y="27" width="12" height="9" fill="#ffc000"/><rect x="0" y="36" width="12" height="9" fill="#ffc000"/><rect x="12" y="36" width="12" height="9" fill="#fff"/><rect x="24" y="36" width="12" height="9" fill="#d9d9d9"/><rect x="36" y="36" width="12" height="9" fill="#fff"/><rect x="48" y="36" width="12" height="9" fill="#ffc000"/><rect x="0" y="0" width="61" height="1.6" fill="#000"/><rect x="0" y="8.7" width="61" height="1.6" fill="#000"/><rect x="0" y="44.4" width="61" height="1.6" fill="#000"/><rect x="2.7" y="3.7" width="7.6" height="1.5" fill="#fff"/><rect x="14.7" y="3.7" width="7.6" height="1.5" fill="#fff"/><rect x="26.7" y="3.7" width="7.6" height="1.5" fill="#fff"/><rect x="38.7" y="3.7" width="7.6" height="1.5" fill="#fff"/><rect x="50.7" y="3.7" width="7.6" height="1.5" fill="#fff"/><rect x="2.7" y="12.7" width="7.6" height="1.5" fill="#fff"/><rect x="14.7" y="12.7" width="7.6" height="1.5" fill="#000"/><rect x="26.7" y="12.7" width="7.6" height="1.5" fill="#000"/><rect x="38.7" y="12.7" width="7.6" height="1.5" fill="#000"/><rect x="50.7" y="12.7" width="7.6" height="1.5" fill="#fff"/><rect x="2.7" y="21.7" width="7.6" height="1.5" fill="#fff"/><rect x="14.7" y="21.7" width="7.6" height="1.5" fill="#000"/><rect x="26.7" y="21.7" width="7.6" height="1.5" fill="#000"/><rect x="38.7" y="21.7" width="7.6" height="1.5" fill="#000"/><rect x="50.7" y="21.7" width="7.6" height="1.5" fill="#fff"/><rect x="2.7" y="30.7" width="7.6" height="1.5" fill="#fff"/><rect x="14.7" y="30.7" width="7.6" height="1.5" fill="#000"/><rect x="26.7" y="30.7" width="7.6" height="1.5" fill="#000"/><rect x="38.7" y="30.7" width="7.6" height="1.5" fill="#000"/><rect x="50.7" y="30.7" width="7.6" height="1.5" fill="#fff"/><rect x="2.7" y="39.7" width="7.6" height="1.5" fill="#fff"/><rect x="14.7" y="39.7" width="7.6" height="1.5" fill="#000"/><rect x="26.7" y="39.7" width="7.6" height="1.5" fill="#000"/><rect x="38.7" y="39.7" width="7.6" height="1.5" fill="#000"/><rect x="50.7" y="39.7" width="7.6" height="1.5" fill="#fff"/></svg></div>
<div class="a" style="left:1124px;top:445px;width:61px;height:46px"><svg width="61" height="46"><rect x="0" y="0" width="61" height="46" fill="#fff"/><rect x="0" y="0" width="12" height="9" fill="#4472c4"/><rect x="12" y="0" width="12" height="9" fill="#4472c4"/><rect x="24" y="0" width="12" height="9" fill="#4472c4"/><rect x="36" y="0" width="12" height="9" fill="#4472c4"/><rect x="48" y="0" width="12" height="9" fill="#4472c4"/><rect x="0" y="9" width="12" height="9" fill="#4472c4"/><rect x="12" y="9" width="12" height="9" fill="#d9d9d9"/><rect x="24" y="9" width="12" height="9" fill="#d9d9d9"/><rect x="36" y="9" width="12" height="9" fill="#d9d9d9"/><rect x="48" y="9" width="12" height="9" fill="#4472c4"/><rect x="0" y="18" width="12" height="9" fill="#4472c4"/><rect x="12" y="18" width="12" height="9" fill="#fff"/><rect x="24" y="18" width="12" height="9" fill="#d9d9d9"/><rect x="36" y="18" width="12" height="9" fill="#fff"/><rect x="48" y="18" width="12" height="9" fill="#4472c4"/><rect x="0" y="27" width="12" height="9" fill="#4472c4"/><rect x="12" y="27" width="12" height="9" fill="#d9d9d9"/><rect x="24" y="27" width="12" height="9" fill="#d9d9d9"/><rect x="36" y="27" width="12" height="9" fill="#d9d9d9"/><rect x="48" y="27" width="12" height="9" fill="#4472c4"/><rect x="0" y="36" width="12" height="9" fill="#4472c4"/><rect x="12" y="36" width="12" height="9" fill="#fff"/><rect x="24" y="36" width="12" height="9" fill="#d9d9d9"/><rect x="36" y="36" width="12" height="9" fill="#fff"/><rect x="48" y="36" width="12" height="9" fill="#4472c4"/><rect x="0" y="0" width="61" height="1.6" fill="#000"/><rect x="0" y="8.7" width="61" height="1.6" fill="#000"/><rect x="0" y="44.4" width="61" height="1.6" fill="#000"/><rect x="2.7" y="3.7" width="7.6" height="1.5" fill="#fff"/><rect x="14.7" y="3.7" width="7.6" height="1.5" fill="#fff"/><rect x="26.7" y="3.7" width="7.6" height="1.5" fill="#fff"/><rect x="38.7" y="3.7" width="7.6" height="1.5" fill="#fff"/><rect x="50.7" y="3.7" width="7.6" height="1.5" fill="#fff"/><rect x="2.7" y="12.7" width="7.6" height="1.5" fill="#fff"/><rect x="14.7" y="12.7" width="7.6" height="1.5" fill="#000"/><rect x="26.7" y="12.7" width="7.6" height="1.5" fill="#000"/><rect x="38.7" y="12.7" width="7.6" height="1.5" fill="#000"/><rect x="50.7" y="12.7" width="7.6" height="1.5" fill="#fff"/><rect x="2.7" y="21.7" width="7.6" height="1.5" fill="#fff"/><rect x="14.7" y="21.7" width="7.6" height="1.5" fill="#000"/><rect x="26.7" y="21.7" width="7.6" height="1.5" fill="#000"/><rect x="38.7" y="21.7" width="7.6" height="1.5" fill="#000"/><rect x="50.7" y="21.7" width="7.6" height="1.5" fill="#fff"/><rect x="2.7" y="30.7" width="7.6" height="1.5" fill="#fff"/><rect x="14.7" y="30.7" width="7.6" height="1.5" fill="#000"/><rect x="26.7" y="30.7" width="7.6" height="1.5" fill="#000"/><rect x="38.7" y="30.7" width="7.6" height="1.5" fill="#000"/><rect x="50.7" y="30.7" width="7.6" height="1.5" fill="#fff"/><rect x="2.7" y="39.7" width="7.6" height="1.5" fill="#fff"/><rect x="14.7" y="39.7" width="7.6" height="1.5" fill="#000"/><rect x="26.7" y="39.7" width="7.6" height="1.5" fill="#000"/><rect x="38.7" y="39.7" width="7.6" height="1.5" fill="#000"/><rect x="50.7" y="39.7" width="7.6" height="1.5" fill="#fff"/></svg></div>
<div class="a" style="left:1193px;top:445px;width:61px;height:46px"><svg width="61" height="46"><rect x="0" y="0" width="61" height="46" fill="#fff"/><rect x="0" y="0" width="12" height="9" fill="#70ad47"/><rect x="12" y="0" width="12" height="9" fill="#70ad47"/><rect x="24" y="0" width="12" height="9" fill="#70ad47"/><rect x="36" y="0" width="12" height="9" fill="#70ad47"/><rect x="48" y="0" width="12" height="9" fill="#70ad47"/><rect x="0" y="9" width="12" height="9" fill="#70ad47"/><rect x="12" y="9" width="12" height="9" fill="#d9d9d9"/><rect x="24" y="9" width="12" height="9" fill="#d9d9d9"/><rect x="36" y="9" width="12" height="9" fill="#d9d9d9"/><rect x="48" y="9" width="12" height="9" fill="#70ad47"/><rect x="0" y="18" width="12" height="9" fill="#70ad47"/><rect x="12" y="18" width="12" height="9" fill="#fff"/><rect x="24" y="18" width="12" height="9" fill="#d9d9d9"/><rect x="36" y="18" width="12" height="9" fill="#fff"/><rect x="48" y="18" width="12" height="9" fill="#70ad47"/><rect x="0" y="27" width="12" height="9" fill="#70ad47"/><rect x="12" y="27" width="12" height="9" fill="#d9d9d9"/><rect x="24" y="27" width="12" height="9" fill="#d9d9d9"/><rect x="36" y="27" width="12" height="9" fill="#d9d9d9"/><rect x="48" y="27" width="12" height="9" fill="#70ad47"/><rect x="0" y="36" width="12" height="9" fill="#70ad47"/><rect x="12" y="36" width="12" height="9" fill="#fff"/><rect x="24" y="36" width="12" height="9" fill="#d9d9d9"/><rect x="36" y="36" width="12" height="9" fill="#fff"/><rect x="48" y="36" width="12" height="9" fill="#70ad47"/><rect x="0" y="0" width="61" height="1.6" fill="#000"/><rect x="0" y="8.7" width="61" height="1.6" fill="#000"/><rect x="0" y="44.4" width="61" height="1.6" fill="#000"/><rect x="2.7" y="3.7" width="7.6" height="1.5" fill="#fff"/><rect x="14.7" y="3.7" width="7.6" height="1.5" fill="#fff"/><rect x="26.7" y="3.7" width="7.6" height="1.5" fill="#fff"/><rect x="38.7" y="3.7" width="7.6" height="1.5" fill="#fff"/><rect x="50.7" y="3.7" width="7.6" height="1.5" fill="#fff"/><rect x="2.7" y="12.7" width="7.6" height="1.5" fill="#fff"/><rect x="14.7" y="12.7" width="7.6" height="1.5" fill="#000"/><rect x="26.7" y="12.7" width="7.6" height="1.5" fill="#000"/><rect x="38.7" y="12.7" width="7.6" height="1.5" fill="#000"/><rect x="50.7" y="12.7" width="7.6" height="1.5" fill="#fff"/><rect x="2.7" y="21.7" width="7.6" height="1.5" fill="#fff"/><rect x="14.7" y="21.7" width="7.6" height="1.5" fill="#000"/><rect x="26.7" y="21.7" width="7.6" height="1.5" fill="#000"/><rect x="38.7" y="21.7" width="7.6" height="1.5" fill="#000"/><rect x="50.7" y="21.7" width="7.6" height="1.5" fill="#fff"/><rect x="2.7" y="30.7" width="7.6" height="1.5" fill="#fff"/><rect x="14.7" y="30.7" width="7.6" height="1.5" fill="#000"/><rect x="26.7" y="30.7" width="7.6" height="1.5" fill="#000"/><rect x="38.7" y="30.7" width="7.6" height="1.5" fill="#000"/><rect x="50.7" y="30.7" width="7.6" height="1.5" fill="#fff"/><rect x="2.7" y="39.7" width="7.6" height="1.5" fill="#fff"/><rect x="14.7" y="39.7" width="7.6" height="1.5" fill="#000"/><rect x="26.7" y="39.7" width="7.6" height="1.5" fill="#000"/><rect x="38.7" y="39.7" width="7.6" height="1.5" fill="#000"/><rect x="50.7" y="39.7" width="7.6" height="1.5" fill="#fff"/></svg></div>
<div class="a" style="left:779px;top:499px;width:61px;height:46px"><svg width="61" height="46"><rect x="0" y="0" width="61" height="46" fill="#fff"/><rect x="0" y="0" width="12" height="9" fill="#d9d9d9"/><rect x="12" y="0" width="12" height="9" fill="#d9d9d9"/><rect x="24" y="0" width="12" height="9" fill="#d9d9d9"/><rect x="36" y="0" width="12" height="9" fill="#d9d9d9"/><rect x="48" y="0" width="12" height="9" fill="#d9d9d9"/><rect x="0" y="9" width="12" height="9" fill="#a6a6a6"/><rect x="12" y="9" width="12" height="9" fill="#a6a6a6"/><rect x="24" y="9" width="12" height="9" fill="#a6a6a6"/><rect x="36" y="9" width="12" height="9" fill="#a6a6a6"/><rect x="48" y="9" width="12" height="9" fill="#a6a6a6"/><rect x="0" y="18" width="12" height="9" fill="#a6a6a6"/><rect x="12" y="18" width="12" height="9" fill="#d9d9d9"/><rect x="24" y="18" width="12" height="9" fill="#a6a6a6"/><rect x="36" y="18" width="12" height="9" fill="#d9d9d9"/><rect x="48" y="18" width="12" height="9" fill="#a6a6a6"/><rect x="0" y="27" width="12" height="9" fill="#a6a6a6"/><rect x="12" y="27" width="12" height="9" fill="#a6a6a6"/><rect x="24" y="27" width="12" height="9" fill="#a6a6a6"/><rect x="36" y="27" width="12" height="9" fill="#a6a6a6"/><rect x="48" y="27" width="12" height="9" fill="#a6a6a6"/><rect x="0" y="36" width="12" height="9" fill="#a6a6a6"/><rect x="12" y="36" width="12" height="9" fill="#d9d9d9"/><rect x="24" y="36" width="12" height="9" fill="#a6a6a6"/><rect x="36" y="36" width="12" height="9" fill="#d9d9d9"/><rect x="48" y="36" width="12" height="9" fill="#a6a6a6"/><rect x="0" y="0" width="61" height="1" fill="#000"/><rect x="0" y="9" width="61" height="1" fill="#000"/><rect x="0" y="18" width="61" height="1" fill="#000"/><rect x="0" y="27" width="61" height="1" fill="#000"/><rect x="0" y="36" width="61" height="1" fill="#000"/><rect x="0" y="45" width="61" height="1" fill="#000"/><rect x="0" y="0" width="1" height="46" fill="#000"/><rect x="12" y="0" width="1" height="46" fill="#000"/><rect x="24" y="0" width="1" height="46" fill="#000"/><rect x="36" y="0" width="1" height="46" fill="#000"/><rect x="48" y="0" width="1" height="46" fill="#000"/><rect x="60" y="0" width="1" height="46" fill="#000"/><rect x="2.7" y="3.7" width="7.6" height="1.5" fill="#000"/><rect x="14.7" y="3.7" width="7.6" height="1.5" fill="#000"/><rect x="26.7" y="3.7" width="7.6" height="1.5" fill="#000"/><rect x="38.7" y="3.7" width="7.6" height="1.5" fill="#000"/><rect x="50.7" y="3.7" width="7.6" height="1.5" fill="#000"/><rect x="2.7" y="12.7" width="7.6" height="1.5" fill="#000"/><rect x="14.7" y="12.7" width="7.6" height="1.5" fill="#000"/><rect x="26.7" y="12.7" width="7.6" height="1.5" fill="#000"/><rect x="38.7" y="12.7" width="7.6" height="1.5" fill="#000"/><rect x="50.7" y="12.7" width="7.6" height="1.5" fill="#000"/><rect x="2.7" y="21.7" width="7.6" height="1.5" fill="#000"/><rect x="14.7" y="21.7" width="7.6" height="1.5" fill="#000"/><rect x="26.7" y="21.7" width="7.6" height="1.5" fill="#000"/><rect x="38.7" y="21.7" width="7.6" height="1.5" fill="#000"/><rect x="50.7" y="21.7" width="7.6" height="1.5" fill="#000"/><rect x="2.7" y="30.7" width="7.6" height="1.5" fill="#000"/><rect x="14.7" y="30.7" width="7.6" height="1.5" fill="#000"/><rect x="26.7" y="30.7" width="7.6" height="1.5" fill="#000"/><rect x="38.7" y="30.7" width="7.6" height="1.5" fill="#000"/><rect x="50.7" y="30.7" width="7.6" height="1.5" fill="#000"/><rect x="2.7" y="39.7" width="7.6" height="1.5" fill="#000"/><rect x="14.7" y="39.7" width="7.6" height="1.5" fill="#000"/><rect x="26.7" y="39.7" width="7.6" height="1.5" fill="#000"/><rect x="38.7" y="39.7" width="7.6" height="1.5" fill="#000"/><rect x="50.7" y="39.7" width="7.6" height="1.5" fill="#000"/></svg></div>
<div class="a" style="left:848px;top:499px;width:61px;height:46px"><svg width="61" height="46"><rect x="0" y="0" width="61" height="46" fill="#fff"/><rect x="0" y="0" width="12" height="9" fill="#ddebf7"/><rect x="12" y="0" width="12" height="9" fill="#ddebf7"/><rect x="24" y="0" width="12" height="9" fill="#ddebf7"/><rect x="36" y="0" width="12" height="9" fill="#ddebf7"/><rect x="48" y="0" width="12" height="9" fill="#ddebf7"/><rect x="0" y="9" width="12" height="9" fill="#bdd7ee"/><rect x="12" y="9" width="12" height="9" fill="#bdd7ee"/><rect x="24" y="9" width="12" height="9" fill="#bdd7ee"/><rect x="36" y="9" width="12" height="9" fill="#bdd7ee"/><rect x="48" y="9" width="12" height="9" fill="#bdd7ee"/><rect x="0" y="18" width="12" height="9" fill="#bdd7ee"/><rect x="12" y="18" width="12" height="9" fill="#ddebf7"/><rect x="24" y="18" width="12" height="9" fill="#bdd7ee"/><rect x="36" y="18" width="12" height="9" fill="#ddebf7"/><rect x="48" y="18" width="12" height="9" fill="#bdd7ee"/><rect x="0" y="27" width="12" height="9" fill="#bdd7ee"/><rect x="12" y="27" width="12" height="9" fill="#bdd7ee"/><rect x="24" y="27" width="12" height="9" fill="#bdd7ee"/><rect x="36" y="27" width="12" height="9" fill="#bdd7ee"/><rect x="48" y="27" width="12" height="9" fill="#bdd7ee"/><rect x="0" y="36" width="12" height="9" fill="#bdd7ee"/><rect x="12" y="36" width="12" height="9" fill="#ddebf7"/><rect x="24" y="36" width="12" height="9" fill="#bdd7ee"/><rect x="36" y="36" width="12" height="9" fill="#ddebf7"/><rect x="48" y="36" width="12" height="9" fill="#bdd7ee"/><rect x="0" y="0" width="61" height="1" fill="#9bc2e6"/><rect x="0" y="9" width="61" height="1" fill="#9bc2e6"/><rect x="0" y="18" width="61" height="1" fill="#9bc2e6"/><rect x="0" y="27" width="61" height="1" fill="#9bc2e6"/><rect x="0" y="36" width="61" height="1" fill="#9bc2e6"/><rect x="0" y="45" width="61" height="1" fill="#9bc2e6"/><rect x="0" y="0" width="1" height="46" fill="#9bc2e6"/><rect x="12" y="0" width="1" height="46" fill="#9bc2e6"/><rect x="24" y="0" width="1" height="46" fill="#9bc2e6"/><rect x="36" y="0" width="1" height="46" fill="#9bc2e6"/><rect x="48" y="0" width="1" height="46" fill="#9bc2e6"/><rect x="60" y="0" width="1" height="46" fill="#9bc2e6"/><rect x="2.7" y="3.7" width="7.6" height="1.5" fill="#000"/><rect x="14.7" y="3.7" width="7.6" height="1.5" fill="#000"/><rect x="26.7" y="3.7" width="7.6" height="1.5" fill="#000"/><rect x="38.7" y="3.7" width="7.6" height="1.5" fill="#000"/><rect x="50.7" y="3.7" width="7.6" height="1.5" fill="#000"/><rect x="2.7" y="12.7" width="7.6" height="1.5" fill="#000"/><rect x="14.7" y="12.7" width="7.6" height="1.5" fill="#000"/><rect x="26.7" y="12.7" width="7.6" height="1.5" fill="#000"/><rect x="38.7" y="12.7" width="7.6" height="1.5" fill="#000"/><rect x="50.7" y="12.7" width="7.6" height="1.5" fill="#000"/><rect x="2.7" y="21.7" width="7.6" height="1.5" fill="#000"/><rect x="14.7" y="21.7" width="7.6" height="1.5" fill="#000"/><rect x="26.7" y="21.7" width="7.6" height="1.5" fill="#000"/><rect x="38.7" y="21.7" width="7.6" height="1.5" fill="#000"/><rect x="50.7" y="21.7" width="7.6" height="1.5" fill="#000"/><rect x="2.7" y="30.7" width="7.6" height="1.5" fill="#000"/><rect x="14.7" y="30.7" width="7.6" height="1.5" fill="#000"/><rect x="26.7" y="30.7" width="7.6" height="1.5" fill="#000"/><rect x="38.7" y="30.7" width="7.6" height="1.5" fill="#000"/><rect x="50.7" y="30.7" width="7.6" height="1.5" fill="#000"/><rect x="2.7" y="39.7" width="7.6" height="1.5" fill="#000"/><rect x="14.7" y="39.7" width="7.6" height="1.5" fill="#000"/><rect x="26.7" y="39.7" width="7.6" height="1.5" fill="#000"/><rect x="38.7" y="39.7" width="7.6" height="1.5" fill="#000"/><rect x="50.7" y="39.7" width="7.6" height="1.5" fill="#000"/></svg></div>
<div class="a" style="left:917px;top:499px;width:61px;height:46px"><svg width="61" height="46"><rect x="0" y="0" width="61" height="46" fill="#fff"/><rect x="0" y="0" width="12" height="9" fill="#fce4d6"/><rect x="12" y="0" width="12" height="9" fill="#fce4d6"/><rect x="24" y="0" width="12" height="9" fill="#fce4d6"/><rect x="36" y="0" width="12" height="9" fill="#fce4d6"/><rect x="48" y="0" width="12" height="9" fill="#fce4d6"/><rect x="0" y="9" width="12" height="9" fill="#f8cbad"/><rect x="12" y="9" width="12" height="9" fill="#f8cbad"/><rect x="24" y="9" width="12" height="9" fill="#f8cbad"/><rect x="36" y="9" width="12" height="9" fill="#f8cbad"/><rect x="48" y="9" width="12" height="9" fill="#f8cbad"/><rect x="0" y="18" width="12" height="9" fill="#f8cbad"/><rect x="12" y="18" width="12" height="9" fill="#fce4d6"/><rect x="24" y="18" width="12" height="9" fill="#f8cbad"/><rect x="36" y="18" width="12" height="9" fill="#fce4d6"/><rect x="48" y="18" width="12" height="9" fill="#f8cbad"/><rect x="0" y="27" width="12" height="9" fill="#f8cbad"/><rect x="12" y="27" width="12" height="9" fill="#f8cbad"/><rect x="24" y="27" width="12" height="9" fill="#f8cbad"/><rect x="36" y="27" width="12" height="9" fill="#f8cbad"/><rect x="48" y="27" width="12" height="9" fill="#f8cbad"/><rect x="0" y="36" width="12" height="9" fill="#f8cbad"/><rect x="12" y="36" width="12" height="9" fill="#fce4d6"/><rect x="24" y="36" width="12" height="9" fill="#f8cbad"/><rect x="36" y="36" width="12" height="9" fill="#fce4d6"/><rect x="48" y="36" width="12" height="9" fill="#f8cbad"/><rect x="0" y="0" width="61" height="1" fill="#f4b084"/><rect x="0" y="9" width="61" height="1" fill="#f4b084"/><rect x="0" y="18" width="61" height="1" fill="#f4b084"/><rect x="0" y="27" width="61" height="1" fill="#f4b084"/><rect x="0" y="36" width="61" height="1" fill="#f4b084"/><rect x="0" y="45" width="61" height="1" fill="#f4b084"/><rect x="0" y="0" width="1" height="46" fill="#f4b084"/><rect x="12" y="0" width="1" height="46" fill="#f4b084"/><rect x="24" y="0" width="1" height="46" fill="#f4b084"/><rect x="36" y="0" width="1" height="46" fill="#f4b084"/><rect x="48" y="0" width="1" height="46" fill="#f4b084"/><rect x="60" y="0" width="1" height="46" fill="#f4b084"/><rect x="2.7" y="3.7" width="7.6" height="1.5" fill="#000"/><rect x="14.7" y="3.7" width="7.6" height="1.5" fill="#000"/><rect x="26.7" y="3.7" width="7.6" height="1.5" fill="#000"/><rect x="38.7" y="3.7" width="7.6" height="1.5" fill="#000"/><rect x="50.7" y="3.7" width="7.6" height="1.5" fill="#000"/><rect x="2.7" y="12.7" width="7.6" height="1.5" fill="#000"/><rect x="14.7" y="12.7" width="7.6" height="1.5" fill="#000"/><rect x="26.7" y="12.7" width="7.6" height="1.5" fill="#000"/><rect x="38.7" y="12.7" width="7.6" height="1.5" fill="#000"/><rect x="50.7" y="12.7" width="7.6" height="1.5" fill="#000"/><rect x="2.7" y="21.7" width="7.6" height="1.5" fill="#000"/><rect x="14.7" y="21.7" width="7.6" height="1.5" fill="#000"/><rect x="26.7" y="21.7" width="7.6" height="1.5" fill="#000"/><rect x="38.7" y="21.7" width="7.6" height="1.5" fill="#000"/><rect x="50.7" y="21.7" width="7.6" height="1.5" fill="#000"/><rect x="2.7" y="30.7" width="7.6" height="1.5" fill="#000"/><rect x="14.7" y="30.7" width="7.6" height="1.5" fill="#000"/><rect x="26.7" y="30.7" width="7.6" height="1.5" fill="#000"/><rect x="38.7" y="30.7" width="7.6" height="1.5" fill="#000"/><rect x="50.7" y="30.7" width="7.6" height="1.5" fill="#000"/><rect x="2.7" y="39.7" width="7.6" height="1.5" fill="#000"/><rect x="14.7" y="39.7" width="7.6" height="1.5" fill="#000"/><rect x="26.7" y="39.7" width="7.6" height="1.5" fill="#000"/><rect x="38.7" y="39.7" width="7.6" height="1.5" fill="#000"/><rect x="50.7" y="39.7" width="7.6" height="1.5" fill="#000"/></svg></div>
<div class="a" style="left:986px;top:499px;width:61px;height:46px"><svg width="61" height="46"><rect x="0" y="0" width="61" height="46" fill="#fff"/><rect x="0" y="0" width="12" height="9" fill="#ededed"/><rect x="12" y="0" width="12" height="9" fill="#ededed"/><rect x="24" y="0" width="12" height="9" fill="#ededed"/><rect x="36" y="0" width="12" height="9" fill="#ededed"/><rect x="48" y="0" width="12" height="9" fill="#ededed"/><rect x="0" y="9" width="12" height="9" fill="#dbdbdb"/><rect x="12" y="9" width="12" height="9" fill="#dbdbdb"/><rect x="24" y="9" width="12" height="9" fill="#dbdbdb"/><rect x="36" y="9" width="12" height="9" fill="#dbdbdb"/><rect x="48" y="9" width="12" height="9" fill="#dbdbdb"/><rect x="0" y="18" width="12" height="9" fill="#dbdbdb"/><rect x="12" y="18" width="12" height="9" fill="#ededed"/><rect x="24" y="18" width="12" height="9" fill="#dbdbdb"/><rect x="36" y="18" width="12" height="9" fill="#ededed"/><rect x="48" y="18" width="12" height="9" fill="#dbdbdb"/><rect x="0" y="27" width="12" height="9" fill="#dbdbdb"/><rect x="12" y="27" width="12" height="9" fill="#dbdbdb"/><rect x="24" y="27" width="12" height="9" fill="#dbdbdb"/><rect x="36" y="27" width="12" height="9" fill="#dbdbdb"/><rect x="48" y="27" width="12" height="9" fill="#dbdbdb"/><rect x="0" y="36" width="12" height="9" fill="#dbdbdb"/><rect x="12" y="36" width="12" height="9" fill="#ededed"/><rect x="24" y="36" width="12" height="9" fill="#dbdbdb"/><rect x="36" y="36" width="12" height="9" fill="#ededed"/><rect x="48" y="36" width="12" height="9" fill="#dbdbdb"/><rect x="0" y="0" width="61" height="1" fill="#c9c9c9"/><rect x="0" y="9" width="61" height="1" fill="#c9c9c9"/><rect x="0" y="18" width="61" height="1" fill="#c9c9c9"/><rect x="0" y="27" width="61" height="1" fill="#c9c9c9"/><rect x="0" y="36" width="61" height="1" fill="#c9c9c9"/><rect x="0" y="45" width="61" height="1" fill="#c9c9c9"/><rect x="0" y="0" width="1" height="46" fill="#c9c9c9"/><rect x="12" y="0" width="1" height="46" fill="#c9c9c9"/><rect x="24" y="0" width="1" height="46" fill="#c9c9c9"/><rect x="36" y="0" width="1" height="46" fill="#c9c9c9"/><rect x="48" y="0" width="1" height="46" fill="#c9c9c9"/><rect x="60" y="0" width="1" height="46" fill="#c9c9c9"/><rect x="2.7" y="3.7" width="7.6" height="1.5" fill="#000"/><rect x="14.7" y="3.7" width="7.6" height="1.5" fill="#000"/><rect x="26.7" y="3.7" width="7.6" height="1.5" fill="#000"/><rect x="38.7" y="3.7" width="7.6" height="1.5" fill="#000"/><rect x="50.7" y="3.7" width="7.6" height="1.5" fill="#000"/><rect x="2.7" y="12.7" width="7.6" height="1.5" fill="#000"/><rect x="14.7" y="12.7" width="7.6" height="1.5" fill="#000"/><rect x="26.7" y="12.7" width="7.6" height="1.5" fill="#000"/><rect x="38.7" y="12.7" width="7.6" height="1.5" fill="#000"/><rect x="50.7" y="12.7" width="7.6" height="1.5" fill="#000"/><rect x="2.7" y="21.7" width="7.6" height="1.5" fill="#000"/><rect x="14.7" y="21.7" width="7.6" height="1.5" fill="#000"/><rect x="26.7" y="21.7" width="7.6" height="1.5" fill="#000"/><rect x="38.7" y="21.7" width="7.6" height="1.5" fill="#000"/><rect x="50.7" y="21.7" width="7.6" height="1.5" fill="#000"/><rect x="2.7" y="30.7" width="7.6" height="1.5" fill="#000"/><rect x="14.7" y="30.7" width="7.6" height="1.5" fill="#000"/><rect x="26.7" y="30.7" width="7.6" height="1.5" fill="#000"/><rect x="38.7" y="30.7" width="7.6" height="1.5" fill="#000"/><rect x="50.7" y="30.7" width="7.6" height="1.5" fill="#000"/><rect x="2.7" y="39.7" width="7.6" height="1.5" fill="#000"/><rect x="14.7" y="39.7" width="7.6" height="1.5" fill="#000"/><rect x="26.7" y="39.7" width="7.6" height="1.5" fill="#000"/><rect x="38.7" y="39.7" width="7.6" height="1.5" fill="#000"/><rect x="50.7" y="39.7" width="7.6" height="1.5" fill="#000"/></svg></div>
<div class="a" style="left:1055px;top:499px;width:61px;height:46px"><svg width="61" height="46"><rect x="0" y="0" width="61" height="46" fill="#fff"/><rect x="0" y="0" width="12" height="9" fill="#fff2cc"/><rect x="12" y="0" width="12" height="9" fill="#fff2cc"/><rect x="24" y="0" width="12" height="9" fill="#fff2cc"/><rect x="36" y="0" width="12" height="9" fill="#fff2cc"/><rect x="48" y="0" width="12" height="9" fill="#fff2cc"/><rect x="0" y="9" width="12" height="9" fill="#ffe699"/><rect x="12" y="9" width="12" height="9" fill="#ffe699"/><rect x="24" y="9" width="12" height="9" fill="#ffe699"/><rect x="36" y="9" width="12" height="9" fill="#ffe699"/><rect x="48" y="9" width="12" height="9" fill="#ffe699"/><rect x="0" y="18" width="12" height="9" fill="#ffe699"/><rect x="12" y="18" width="12" height="9" fill="#fff2cc"/><rect x="24" y="18" width="12" height="9" fill="#ffe699"/><rect x="36" y="18" width="12" height="9" fill="#fff2cc"/><rect x="48" y="18" width="12" height="9" fill="#ffe699"/><rect x="0" y="27" width="12" height="9" fill="#ffe699"/><rect x="12" y="27" width="12" height="9" fill="#ffe699"/><rect x="24" y="27" width="12" height="9" fill="#ffe699"/><rect x="36" y="27" width="12" height="9" fill="#ffe699"/><rect x="48" y="27" width="12" height="9" fill="#ffe699"/><rect x="0" y="36" width="12" height="9" fill="#ffe699"/><rect x="12" y="36" width="12" height="9" fill="#fff2cc"/><rect x="24" y="36" width="12" height="9" fill="#ffe699"/><rect x="36" y="36" width="12" height="9" fill="#fff2cc"/><rect x="48" y="36" width="12" height="9" fill="#ffe699"/><rect x="0" y="0" width="61" height="1" fill="#ffd966"/><rect x="0" y="9" width="61" height="1" fill="#ffd966"/><rect x="0" y="18" width="61" height="1" fill="#ffd966"/><rect x="0" y="27" width="61" height="1" fill="#ffd966"/><rect x="0" y="36" width="61" height="1" fill="#ffd966"/><rect x="0" y="45" width="61" height="1" fill="#ffd966"/><rect x="0" y="0" width="1" height="46" fill="#ffd966"/><rect x="12" y="0" width="1" height="46" fill="#ffd966"/><rect x="24" y="0" width="1" height="46" fill="#ffd966"/><rect x="36" y="0" width="1" height="46" fill="#ffd966"/><rect x="48" y="0" width="1" height="46" fill="#ffd966"/><rect x="60" y="0" width="1" height="46" fill="#ffd966"/><rect x="2.7" y="3.7" width="7.6" height="1.5" fill="#000"/><rect x="14.7" y="3.7" width="7.6" height="1.5" fill="#000"/><rect x="26.7" y="3.7" width="7.6" height="1.5" fill="#000"/><rect x="38.7" y="3.7" width="7.6" height="1.5" fill="#000"/><rect x="50.7" y="3.7" width="7.6" height="1.5" fill="#000"/><rect x="2.7" y="12.7" width="7.6" height="1.5" fill="#000"/><rect x="14.7" y="12.7" width="7.6" height="1.5" fill="#000"/><rect x="26.7" y="12.7" width="7.6" height="1.5" fill="#000"/><rect x="38.7" y="12.7" width="7.6" height="1.5" fill="#000"/><rect x="50.7" y="12.7" width="7.6" height="1.5" fill="#000"/><rect x="2.7" y="21.7" width="7.6" height="1.5" fill="#000"/><rect x="14.7" y="21.7" width="7.6" height="1.5" fill="#000"/><rect x="26.7" y="21.7" width="7.6" height="1.5" fill="#000"/><rect x="38.7" y="21.7" width="7.6" height="1.5" fill="#000"/><rect x="50.7" y="21.7" width="7.6" height="1.5" fill="#000"/><rect x="2.7" y="30.7" width="7.6" height="1.5" fill="#000"/><rect x="14.7" y="30.7" width="7.6" height="1.5" fill="#000"/><rect x="26.7" y="30.7" width="7.6" height="1.5" fill="#000"/><rect x="38.7" y="30.7" width="7.6" height="1.5" fill="#000"/><rect x="50.7" y="30.7" width="7.6" height="1.5" fill="#000"/><rect x="2.7" y="39.7" width="7.6" height="1.5" fill="#000"/><rect x="14.7" y="39.7" width="7.6" height="1.5" fill="#000"/><rect x="26.7" y="39.7" width="7.6" height="1.5" fill="#000"/><rect x="38.7" y="39.7" width="7.6" height="1.5" fill="#000"/><rect x="50.7" y="39.7" width="7.6" height="1.5" fill="#000"/></svg></div>
<div class="a" style="left:1124px;top:499px;width:61px;height:46px"><svg width="61" height="46"><rect x="0" y="0" width="61" height="46" fill="#fff"/><rect x="0" y="0" width="12" height="9" fill="#d9e1f2"/><rect x="12" y="0" width="12" height="9" fill="#d9e1f2"/><rect x="24" y="0" width="12" height="9" fill="#d9e1f2"/><rect x="36" y="0" width="12" height="9" fill="#d9e1f2"/><rect x="48" y="0" width="12" height="9" fill="#d9e1f2"/><rect x="0" y="9" width="12" height="9" fill="#b4c6e7"/><rect x="12" y="9" width="12" height="9" fill="#b4c6e7"/><rect x="24" y="9" width="12" height="9" fill="#b4c6e7"/><rect x="36" y="9" width="12" height="9" fill="#b4c6e7"/><rect x="48" y="9" width="12" height="9" fill="#b4c6e7"/><rect x="0" y="18" width="12" height="9" fill="#b4c6e7"/><rect x="12" y="18" width="12" height="9" fill="#d9e1f2"/><rect x="24" y="18" width="12" height="9" fill="#b4c6e7"/><rect x="36" y="18" width="12" height="9" fill="#d9e1f2"/><rect x="48" y="18" width="12" height="9" fill="#b4c6e7"/><rect x="0" y="27" width="12" height="9" fill="#b4c6e7"/><rect x="12" y="27" width="12" height="9" fill="#b4c6e7"/><rect x="24" y="27" width="12" height="9" fill="#b4c6e7"/><rect x="36" y="27" width="12" height="9" fill="#b4c6e7"/><rect x="48" y="27" width="12" height="9" fill="#b4c6e7"/><rect x="0" y="36" width="12" height="9" fill="#b4c6e7"/><rect x="12" y="36" width="12" height="9" fill="#d9e1f2"/><rect x="24" y="36" width="12" height="9" fill="#b4c6e7"/><rect x="36" y="36" width="12" height="9" fill="#d9e1f2"/><rect x="48" y="36" width="12" height="9" fill="#b4c6e7"/><rect x="0" y="0" width="61" height="1" fill="#8ea9db"/><rect x="0" y="9" width="61" height="1" fill="#8ea9db"/><rect x="0" y="18" width="61" height="1" fill="#8ea9db"/><rect x="0" y="27" width="61" height="1" fill="#8ea9db"/><rect x="0" y="36" width="61" height="1" fill="#8ea9db"/><rect x="0" y="45" width="61" height="1" fill="#8ea9db"/><rect x="0" y="0" width="1" height="46" fill="#8ea9db"/><rect x="12" y="0" width="1" height="46" fill="#8ea9db"/><rect x="24" y="0" width="1" height="46" fill="#8ea9db"/><rect x="36" y="0" width="1" height="46" fill="#8ea9db"/><rect x="48" y="0" width="1" height="46" fill="#8ea9db"/><rect x="60" y="0" width="1" height="46" fill="#8ea9db"/><rect x="2.7" y="3.7" width="7.6" height="1.5" fill="#000"/><rect x="14.7" y="3.7" width="7.6" height="1.5" fill="#000"/><rect x="26.7" y="3.7" width="7.6" height="1.5" fill="#000"/><rect x="38.7" y="3.7" width="7.6" height="1.5" fill="#000"/><rect x="50.7" y="3.7" width="7.6" height="1.5" fill="#000"/><rect x="2.7" y="12.7" width="7.6" height="1.5" fill="#000"/><rect x="14.7" y="12.7" width="7.6" height="1.5" fill="#000"/><rect x="26.7" y="12.7" width="7.6" height="1.5" fill="#000"/><rect x="38.7" y="12.7" width="7.6" height="1.5" fill="#000"/><rect x="50.7" y="12.7" width="7.6" height="1.5" fill="#000"/><rect x="2.7" y="21.7" width="7.6" height="1.5" fill="#000"/><rect x="14.7" y="21.7" width="7.6" height="1.5" fill="#000"/><rect x="26.7" y="21.7" width="7.6" height="1.5" fill="#000"/><rect x="38.7" y="21.7" width="7.6" height="1.5" fill="#000"/><rect x="50.7" y="21.7" width="7.6" height="1.5" fill="#000"/><rect x="2.7" y="30.7" width="7.6" height="1.5" fill="#000"/><rect x="14.7" y="30.7" width="7.6" height="1.5" fill="#000"/><rect x="26.7" y="30.7" width="7.6" height="1.5" fill="#000"/><rect x="38.7" y="30.7" width="7.6" height="1.5" fill="#000"/><rect x="50.7" y="30.7" width="7.6" height="1.5" fill="#000"/><rect x="2.7" y="39.7" width="7.6" height="1.5" fill="#000"/><rect x="14.7" y="39.7" width="7.6" height="1.5" fill="#000"/><rect x="26.7" y="39.7" width="7.6" height="1.5" fill="#000"/><rect x="38.7" y="39.7" width="7.6" height="1.5" fill="#000"/><rect x="50.7" y="39.7" width="7.6" height="1.5" fill="#000"/></svg></div>
<div class="a" style="left:1193px;top:499px;width:61px;height:46px"><svg width="61" height="46"><rect x="0" y="0" width="61" height="46" fill="#fff"/><rect x="0" y="0" width="12" height="9" fill="#e2efda"/><rect x="12" y="0" width="12" height="9" fill="#e2efda"/><rect x="24" y="0" width="12" height="9" fill="#e2efda"/><rect x="36" y="0" width="12" height="9" fill="#e2efda"/><rect x="48" y="0" width="12" height="9" fill="#e2efda"/><rect x="0" y="9" width="12" height="9" fill="#c6e0b4"/><rect x="12" y="9" width="12" height="9" fill="#c6e0b4"/><rect x="24" y="9" width="12" height="9" fill="#c6e0b4"/><rect x="36" y="9" width="12" height="9" fill="#c6e0b4"/><rect x="48" y="9" width="12" height="9" fill="#c6e0b4"/><rect x="0" y="18" width="12" height="9" fill="#c6e0b4"/><rect x="12" y="18" width="12" height="9" fill="#e2efda"/><rect x="24" y="18" width="12" height="9" fill="#c6e0b4"/><rect x="36" y="18" width="12" height="9" fill="#e2efda"/><rect x="48" y="18" width="12" height="9" fill="#c6e0b4"/><rect x="0" y="27" width="12" height="9" fill="#c6e0b4"/><rect x="12" y="27" width="12" height="9" fill="#c6e0b4"/><rect x="24" y="27" width="12" height="9" fill="#c6e0b4"/><rect x="36" y="27" width="12" height="9" fill="#c6e0b4"/><rect x="48" y="27" width="12" height="9" fill="#c6e0b4"/><rect x="0" y="36" width="12" height="9" fill="#c6e0b4"/><rect x="12" y="36" width="12" height="9" fill="#e2efda"/><rect x="24" y="36" width="12" height="9" fill="#c6e0b4"/><rect x="36" y="36" width="12" height="9" fill="#e2efda"/><rect x="48" y="36" width="12" height="9" fill="#c6e0b4"/><rect x="0" y="0" width="61" height="1" fill="#a9d08e"/><rect x="0" y="9" width="61" height="1" fill="#a9d08e"/><rect x="0" y="18" width="61" height="1" fill="#a9d08e"/><rect x="0" y="27" width="61" height="1" fill="#a9d08e"/><rect x="0" y="36" width="61" height="1" fill="#a9d08e"/><rect x="0" y="45" width="61" height="1" fill="#a9d08e"/><rect x="0" y="0" width="1" height="46" fill="#a9d08e"/><rect x="12" y="0" width="1" height="46" fill="#a9d08e"/><rect x="24" y="0" width="1" height="46" fill="#a9d08e"/><rect x="36" y="0" width="1" height="46" fill="#a9d08e"/><rect x="48" y="0" width="1" height="46" fill="#a9d08e"/><rect x="60" y="0" width="1" height="46" fill="#a9d08e"/><rect x="2.7" y="3.7" width="7.6" height="1.5" fill="#000"/><rect x="14.7" y="3.7" width="7.6" height="1.5" fill="#000"/><rect x="26.7" y="3.7" width="7.6" height="1.5" fill="#000"/><rect x="38.7" y="3.7" width="7.6" height="1.5" fill="#000"/><rect x="50.7" y="3.7" width="7.6" height="1.5" fill="#000"/><rect x="2.7" y="12.7" width="7.6" height="1.5" fill="#000"/><rect x="14.7" y="12.7" width="7.6" height="1.5" fill="#000"/><rect x="26.7" y="12.7" width="7.6" height="1.5" fill="#000"/><rect x="38.7" y="12.7" width="7.6" height="1.5" fill="#000"/><rect x="50.7" y="12.7" width="7.6" height="1.5" fill="#000"/><rect x="2.7" y="21.7" width="7.6" height="1.5" fill="#000"/><rect x="14.7" y="21.7" width="7.6" height="1.5" fill="#000"/><rect x="26.7" y="21.7" width="7.6" height="1.5" fill="#000"/><rect x="38.7" y="21.7" width="7.6" height="1.5" fill="#000"/><rect x="50.7" y="21.7" width="7.6" height="1.5" fill="#000"/><rect x="2.7" y="30.7" width="7.6" height="1.5" fill="#000"/><rect x="14.7" y="30.7" width="7.6" height="1.5" fill="#000"/><rect x="26.7" y="30.7" width="7.6" height="1.5" fill="#000"/><rect x="38.7" y="30.7" width="7.6" height="1.5" fill="#000"/><rect x="50.7" y="30.7" width="7.6" height="1.5" fill="#000"/><rect x="2.7" y="39.7" width="7.6" height="1.5" fill="#000"/><rect x="14.7" y="39.7" width="7.6" height="1.5" fill="#000"/><rect x="26.7" y="39.7" width="7.6" height="1.5" fill="#000"/><rect x="38.7" y="39.7" width="7.6" height="1.5" fill="#000"/><rect x="50.7" y="39.7" width="7.6" height="1.5" fill="#000"/></svg></div>
<div style="position:absolute;left:1259px;top:75px;width:15px;height:472px;background:#e8e8e8"></div>
<div style="position:absolute;left:1259px;top:75px;width:15px;height:362px;background:#fff;border:1px solid #ababab"></div>
<div style="position:absolute;left:1259px;top:75px;width:15px;height:15px;background:#fff;border:1px solid #ababab"></div>
<svg class="a" style="left:1259px;top:75px" width="15" height="15"><polygon points="3.5,10 11.5,10 7.5,6" fill="#606060"/></svg>
<div style="position:absolute;left:1259px;top:532px;width:15px;height:15px;background:#fff;border:1px solid #ababab"></div>
<svg class="a" style="left:1259px;top:532px" width="15" height="15"><polygon points="3.5,5.5 11.5,5.5 7.5,9.5" fill="#606060"/></svg>
<div style="position:absolute;left:774px;top:549px;width:501px;height:1px;background:#e1e1e1"></div>
<div class="t " style="left:806px;top:557px;font-size:12px;color:#444"><u>N</u>ový styl tabulky...</div>
<div class="t " style="left:806px;top:581px;font-size:12px;color:#444"><u>V</u>ymazat</div>
<div style="position:absolute;left:1014px;top:601px;width:2px;height:1px;background:#9a9a9a"></div>
<div style="position:absolute;left:1018px;top:601px;width:2px;height:1px;background:#9a9a9a"></div>
<div style="position:absolute;left:1022px;top:601px;width:2px;height:1px;background:#9a9a9a"></div>
<div style="position:absolute;left:1026px;top:601px;width:2px;height:1px;background:#9a9a9a"></div>
<svg class="a" style="left:779px;top:555px" width="16" height="15" viewBox="0 0 16 15"><rect x="3.5" y="4.5" width="12" height="10" fill="#fff" stroke="#777"/><path d="M6.5,4.5 V14.5 M9.5,4.5 V14.5 M12.5,4.5 V14.5 M3.5,7 H15.5 M3.5,9.5 H15.5 M3.5,12 H15.5" stroke="#999" stroke-width="0.9"/><rect x="4" y="5" width="11" height="9" fill="#aaa" opacity="0.35"/><path d="M3,0 V5 M0.5,2.5 H5.5 M1,0.8 L5,4.2 M5,0.8 L1,4.2" stroke="#f0c020" stroke-width="0.9"/></svg>
<svg class="a" style="left:779px;top:579px" width="16" height="16" viewBox="0 0 16 16"><rect x="0.5" y="0.5" width="12" height="12" fill="#fff" stroke="#777"/><path d="M3.5,0.5 V12.5 M6.5,0.5 V12.5 M9.5,0.5 V12.5 M0.5,3.5 H12.5 M0.5,6.5 H12.5 M0.5,9.5 H12.5" stroke="#999" stroke-width="0.9"/><rect x="1" y="1" width="5" height="11" fill="#9fc3d0" opacity="0.5"/><polygon points="8,9 13,5 16,8 11,13" fill="#e06a82"/><polygon points="6,11 8,9 11,13 9,15" fill="#f1a0b0"/></svg>
<div class="a" style="left:767px;top:367px;width:96px;height:94px;border-radius:50%;background:radial-gradient(closest-side, rgba(255,255,0,0.8) 0%, rgba(255,255,0,0.78) 78%, rgba(255,255,0,0.35) 93%, rgba(255,255,0,0) 100%)"></div>
<svg class="a" style="left:814px;top:413px" width="16" height="22"><path d="M1,1 L1,17 L5,13 L8,20 L11,19 L8,12 L13,12 Z" fill="#fff" stroke="#222" stroke-width="1"/></svg>
</body></html>
